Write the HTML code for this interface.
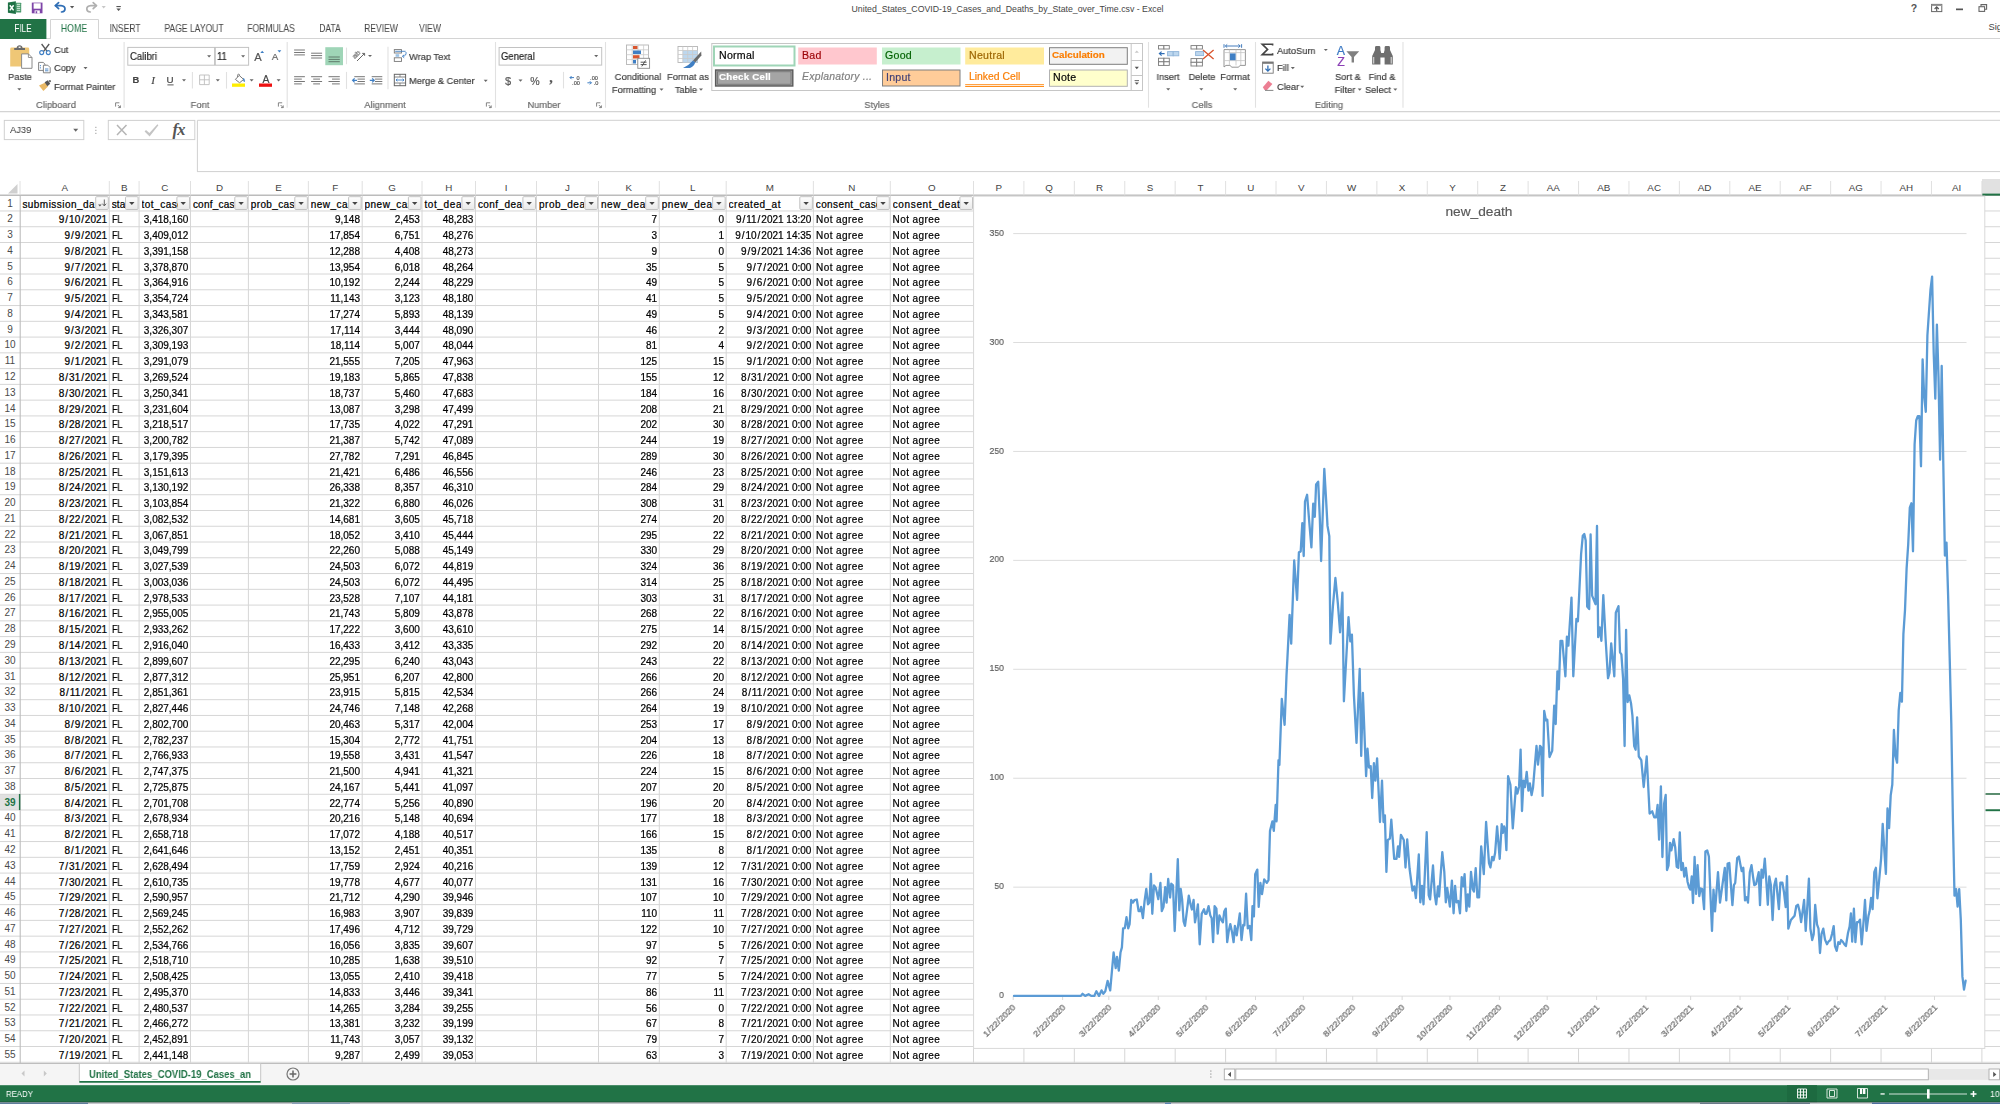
<!DOCTYPE html>
<html lang="en"><head><meta charset="utf-8"><title>Excel</title><style>
html,body{margin:0;padding:0}
body{width:2000px;height:1104px;position:relative;overflow:hidden;background:#fff;font-family:"Liberation Sans",sans-serif;}
#shapes{position:absolute;left:0;top:0}
.t{position:absolute;white-space:pre;}
.g{will-change:transform;-webkit-text-stroke:0.18px;}
.c{-webkit-text-stroke:0.22px #000;}
.s{font-family:"Liberation Serif",serif;}
.t i{font-style:normal;margin:0 0.95px;}
.x i{margin:0 0.4px;}
</style></head><body>
<svg id="shapes" width="2000" height="1104" viewBox="0 0 2000 1104">
<defs><linearGradient id="fb" x1="0" y1="0" x2="0" y2="1"><stop offset="0" stop-color="#ffffff"/><stop offset="1" stop-color="#e9e9e9"/></linearGradient></defs>
<path d="M7.9 2.6 L15.9 1.2 V14.1 L7.9 12.7 Z" fill="#1e7145"/>
<path d="M15.9 2.7 H20.6 Q21.2 2.7 21.2 3.3 V12 Q21.2 12.6 20.6 12.6 H15.9 Z" fill="#4a9a6c"/>
<rect x="16.80" y="3.80" width="3.40" height="1.10" fill="#cfe6d8"/>
<rect x="16.80" y="5.80" width="3.40" height="1.10" fill="#cfe6d8"/>
<rect x="16.80" y="7.80" width="3.40" height="1.10" fill="#cfe6d8"/>
<rect x="16.80" y="9.80" width="3.40" height="1.10" fill="#cfe6d8"/>
<path d="M9.8 5.2 L13.6 10.4 M13.6 5.2 L9.8 10.4" fill="none" stroke="#fff" stroke-width="1.5"/>
<path d="M31.8 2.6 H42.5 V13.3 H31.8 Z" fill="#7e45a8"/>
<rect x="33.60" y="3.30" width="7.10" height="5.40" fill="#fff"/>
<rect x="34.60" y="10.40" width="5.20" height="2.90" fill="#fff"/>
<rect x="35.60" y="11.20" width="1.60" height="2.10" fill="#7e45a8"/>
<path d="M55.4 5.6 H61 Q65 5.9 65 9 Q65 11.6 61.5 12" fill="none" stroke="#2f6eb5" stroke-width="1.7" stroke-linecap="round"/>
<path d="M58.6 2.6 L55.4 5.6 L58.6 8.7" fill="none" stroke="#2f6eb5" stroke-width="1.7" stroke-linecap="round" stroke-linejoin="round"/>
<path d="M70.00 6.10 h4.20 l-2.10 2.40 z" fill="#555"/>
<path d="M96.4 5.6 H90.8 Q86.8 5.9 86.8 9 Q86.8 11.6 90.3 12" fill="none" stroke="#b0b0b0" stroke-width="1.7" stroke-linecap="round"/>
<path d="M93.2 2.6 L96.4 5.6 L93.2 8.7" fill="none" stroke="#b0b0b0" stroke-width="1.7" stroke-linecap="round" stroke-linejoin="round"/>
<path d="M101.60 6.10 h4.20 l-2.10 2.40 z" fill="#c8c8c8"/>
<rect x="116.40" y="6.00" width="4.40" height="1.10" fill="#555"/>
<path d="M116.40 8.40 h4.40 l-2.20 2.60 z" fill="#555"/>
<rect x="1931.60" y="4.40" width="10.20" height="7.20" fill="#fff" stroke="#666" stroke-width="1"/>
<rect x="1931.60" y="4.40" width="10.20" height="1.60" fill="#999"/>
<path d="M1936.7 11 V7 M1934.6 9 L1936.7 6.9 L1938.8 9" fill="none" stroke="#555" stroke-width="1.1"/>
<rect x="1956.00" y="8.50" width="7.00" height="1.70" fill="#555"/>
<path d="M1981 6.5 V4.6 H1986.6 V9.3 H1984.6" fill="none" stroke="#666" stroke-width="1.1"/>
<rect x="1979.00" y="6.70" width="5.60" height="4.70" fill="#fff" stroke="#666" stroke-width="1.1"/>
<line x1="0.00" y1="38.50" x2="2000.00" y2="38.50" stroke="#d4d4d4" stroke-width="1"/>
<rect x="0.00" y="19.00" width="46.40" height="20.00" fill="#217346"/>
<path d="M50.5 38.5 V19.5 H98.5 V38.5" fill="#fff" stroke="#d4d4d4" stroke-width="1"/>
<line x1="51.00" y1="38.50" x2="98.00" y2="38.50" stroke="#fff" stroke-width="1.4"/>
<line x1="0.00" y1="111.70" x2="2000.00" y2="111.70" stroke="#d4d4d4" stroke-width="1.3"/>
<path d="M10.2 49 Q10.2 47.6 11.6 47.6 H27.8 Q29.2 47.6 29.2 49 V66.6 H10.2 Z" fill="#efc776"/>
<path d="M14.2 50 V48 H16.6 Q17 45.2 19.6 45.2 Q22.2 45.2 22.6 48 H25 V50 Z" fill="#6a6a6a"/>
<rect x="18.60" y="46.60" width="2.00" height="1.30" fill="#fff"/>
<path d="M21.6 53.9 H28.4 L32 57.5 V68.3 H21.6 Z" fill="#fff" stroke="#8a8a8a" stroke-width="1"/>
<path d="M28.4 53.9 V57.5 H32" fill="none" stroke="#8a8a8a" stroke-width="0.9"/>
<path d="M17.30 88.30 h4.00 l-2.00 2.20 z" fill="#666"/>
<path d="M41.6 44 L47.2 51.4 M49.2 44 L43.6 51.4" fill="none" stroke="#555" stroke-width="1.3"/>
<circle cx="41.7" cy="52.6" r="2" fill="none" stroke="#3f7fc4" stroke-width="1.1"/>
<circle cx="48.3" cy="52.6" r="2" fill="none" stroke="#3f7fc4" stroke-width="1.1"/>
<path d="M38.6 62.4 H43.2 L45 64.2 V70.4 H38.6 Z" fill="#fff" stroke="#777" stroke-width="0.9"/>
<path d="M43.4 65.2 H47.8 L50.2 67.6 V72.8 H43.4 Z" fill="#fff" stroke="#777" stroke-width="0.9"/>
<path d="M40.4 65 v4" fill="none" stroke="#3f7fc4" stroke-width="0.9" stroke-dasharray="1 0.8"/>
<path d="M45 69 h3.4 M45 70.8 h3.4" fill="none" stroke="#3f7fc4" stroke-width="0.9"/>
<path d="M83.50 67.10 h4.00 l-2.00 2.20 z" fill="#666"/>
<path d="M39 85.4 L45.4 82.6 L48 86.6 L43.4 91 Z" fill="#e9b966"/>
<path d="M44.6 82.2 L47.8 80.2 L50.2 83.8 L47.4 86.2 Z" fill="#555"/>
<path d="M48.6 80.6 L50.4 80 L51 81.6 L49.8 82.4 Z" fill="#555"/>
<path d="M115.60 106.60 v-3.8 h3.8" fill="none" stroke="#777" stroke-width="0.9"/>
<path d="M117.80 105.00 l2.6 2.6 m0 -2.2 v2.2 h-2.2" fill="none" stroke="#777" stroke-width="0.9"/>
<line x1="124.10" y1="42.00" x2="124.10" y2="107.70" stroke="#e1e1e1" stroke-width="1.1"/>
<rect x="127.80" y="47.40" width="86.80" height="17.80" fill="#fff" stroke="#c2c2c2" stroke-width="1"/>
<rect x="215.30" y="47.40" width="33.30" height="17.80" fill="#fff" stroke="#c2c2c2" stroke-width="1"/>
<path d="M207.10 55.20 h4.00 l-2.00 2.20 z" fill="#666"/>
<path d="M241.10 55.20 h4.00 l-2.00 2.20 z" fill="#666"/>
<path d="M260.30 53.10 h3.80 l-1.90 -2.40 z" fill="#3f7fc4"/>
<path d="M277.50 50.30 h3.80 l-1.90 2.20 z" fill="#3f7fc4"/>
<line x1="167.40" y1="84.90" x2="173.60" y2="84.90" stroke="#444" stroke-width="0.9"/>
<path d="M182.00 79.20 h4.00 l-2.00 2.20 z" fill="#666"/>
<line x1="192.40" y1="72.00" x2="192.40" y2="88.60" stroke="#e1e1e1" stroke-width="1.1"/>
<path d="M199.6 75 h9.6 v9.6 h-9.6 z M204.4 75 v9.6 M199.6 79.8 h9.6" fill="none" stroke="#bdbdbd" stroke-width="0.9"/>
<path d="M215.80 79.20 h4.00 l-2.00 2.20 z" fill="#666"/>
<line x1="226.50" y1="72.00" x2="226.50" y2="88.60" stroke="#e1e1e1" stroke-width="1.1"/>
<path d="M235.4 79.4 L239.2 75.4 L243.6 79.4 L239.6 82.8 Z" fill="#fff" stroke="#666" stroke-width="0.9"/>
<path d="M237.6 77 V75.2 Q237.6 74.2 238.6 74.2 Q239.6 74.2 239.6 75.2" fill="none" stroke="#666" stroke-width="0.8"/>
<path d="M243.6 78.2 Q245.2 80.2 244.4 81.8 Q243 81 243.6 78.2 Z" fill="#3f7fc4" stroke="#3f7fc4" stroke-width="0.6"/>
<rect x="232.00" y="83.50" width="13.00" height="3.30" fill="#ffee00"/>
<path d="M249.60 79.20 h4.00 l-2.00 2.20 z" fill="#666"/>
<rect x="259.00" y="83.50" width="13.00" height="3.30" fill="#ee1111"/>
<path d="M276.60 79.20 h4.00 l-2.00 2.20 z" fill="#666"/>
<path d="M278.40 106.60 v-3.8 h3.8" fill="none" stroke="#777" stroke-width="0.9"/>
<path d="M280.60 105.00 l2.6 2.6 m0 -2.2 v2.2 h-2.2" fill="none" stroke="#777" stroke-width="0.9"/>
<line x1="287.20" y1="42.00" x2="287.20" y2="107.70" stroke="#e1e1e1" stroke-width="1.1"/>
<line x1="294.10" y1="50.00" x2="304.90" y2="50.00" stroke="#777" stroke-width="1.0"/>
<line x1="294.10" y1="52.50" x2="304.90" y2="52.50" stroke="#777" stroke-width="1.0"/>
<line x1="294.10" y1="54.90" x2="304.90" y2="54.90" stroke="#777" stroke-width="1.0"/>
<line x1="311.10" y1="53.20" x2="322.10" y2="53.20" stroke="#777" stroke-width="1.0"/>
<line x1="311.10" y1="55.60" x2="322.10" y2="55.60" stroke="#777" stroke-width="1.0"/>
<line x1="311.10" y1="58.00" x2="322.10" y2="58.00" stroke="#777" stroke-width="1.0"/>
<rect x="325.30" y="47.20" width="17.70" height="18.00" fill="#9fd5b7"/>
<line x1="328.50" y1="57.00" x2="339.80" y2="57.00" stroke="#5f7a6b" stroke-width="1.0"/>
<line x1="328.50" y1="59.40" x2="339.80" y2="59.40" stroke="#5f7a6b" stroke-width="1.0"/>
<line x1="328.50" y1="61.70" x2="339.80" y2="61.70" stroke="#5f7a6b" stroke-width="1.0"/>
<line x1="346.50" y1="47.60" x2="346.50" y2="64.20" stroke="#e1e1e1" stroke-width="1.1"/>
<path d="M357 61 L364.4 53.6 M362.2 53.4 h2.4 v2.4" fill="none" stroke="#555" stroke-width="0.9"/>
<path d="M368.00 54.90 h4.00 l-2.00 2.20 z" fill="#666"/>
<line x1="388.00" y1="46.80" x2="388.00" y2="89.30" stroke="#e1e1e1" stroke-width="1.1"/>
<rect x="394.30" y="49.60" width="7.20" height="3.40" fill="#fff" stroke="#777" stroke-width="0.9"/>
<rect x="394.30" y="57.80" width="7.20" height="3.60" fill="#fff" stroke="#777" stroke-width="0.9"/>
<rect x="395.60" y="54.20" width="3.60" height="2.60" fill="#9cc3e6"/>
<line x1="395.20" y1="51.30" x2="405.60" y2="51.30" stroke="#3f7fc4" stroke-width="0.9"/>
<path d="M406 52 Q406.6 56.2 402.6 56.2 M404.2 54.8 L402.4 56.3 L404.2 57.8" fill="none" stroke="#3f7fc4" stroke-width="0.9"/>
<line x1="294.10" y1="76.70" x2="304.90" y2="76.70" stroke="#777" stroke-width="1"/>
<line x1="311.10" y1="76.70" x2="322.10" y2="76.70" stroke="#777" stroke-width="1"/>
<line x1="328.50" y1="76.70" x2="339.80" y2="76.70" stroke="#777" stroke-width="1"/>
<line x1="294.10" y1="79.10" x2="301.80" y2="79.10" stroke="#777" stroke-width="1"/>
<line x1="313.20" y1="79.10" x2="320.00" y2="79.10" stroke="#777" stroke-width="1"/>
<line x1="332.00" y1="79.10" x2="339.80" y2="79.10" stroke="#777" stroke-width="1"/>
<line x1="294.10" y1="81.50" x2="304.90" y2="81.50" stroke="#777" stroke-width="1"/>
<line x1="311.10" y1="81.50" x2="322.10" y2="81.50" stroke="#777" stroke-width="1"/>
<line x1="328.50" y1="81.50" x2="339.80" y2="81.50" stroke="#777" stroke-width="1"/>
<line x1="294.10" y1="83.90" x2="301.80" y2="83.90" stroke="#777" stroke-width="1"/>
<line x1="313.20" y1="83.90" x2="320.00" y2="83.90" stroke="#777" stroke-width="1"/>
<line x1="332.00" y1="83.90" x2="339.80" y2="83.90" stroke="#777" stroke-width="1"/>
<line x1="346.50" y1="71.90" x2="346.50" y2="88.90" stroke="#e1e1e1" stroke-width="1.1"/>
<line x1="354.30" y1="76.70" x2="364.90" y2="76.70" stroke="#777" stroke-width="1"/>
<line x1="357.50" y1="79.10" x2="364.90" y2="79.10" stroke="#777" stroke-width="1"/>
<line x1="357.50" y1="81.50" x2="364.90" y2="81.50" stroke="#777" stroke-width="1"/>
<line x1="354.30" y1="83.90" x2="364.90" y2="83.90" stroke="#777" stroke-width="1"/>
<line x1="371.70" y1="76.70" x2="382.30" y2="76.70" stroke="#777" stroke-width="1"/>
<line x1="374.90" y1="79.10" x2="382.30" y2="79.10" stroke="#777" stroke-width="1"/>
<line x1="374.90" y1="81.50" x2="382.30" y2="81.50" stroke="#777" stroke-width="1"/>
<line x1="371.70" y1="83.90" x2="382.30" y2="83.90" stroke="#777" stroke-width="1"/>
<path d="M357 80.3 H352.6 M354.6 78.3 L352.6 80.3 L354.6 82.3" fill="none" stroke="#3f7fc4" stroke-width="1.2"/>
<path d="M369.8 80.3 H374.2 M372.2 78.3 L374.2 80.3 L372.2 82.3" fill="none" stroke="#3f7fc4" stroke-width="1.2"/>
<rect x="394.30" y="74.30" width="11.30" height="11.40" fill="#fff" stroke="#666" stroke-width="1"/>
<line x1="394.30" y1="77.00" x2="405.60" y2="77.00" stroke="#666" stroke-width="0.8"/>
<line x1="394.30" y1="83.00" x2="405.60" y2="83.00" stroke="#666" stroke-width="0.8"/>
<line x1="400.00" y1="74.30" x2="400.00" y2="77.00" stroke="#666" stroke-width="0.7"/>
<line x1="400.00" y1="83.00" x2="400.00" y2="85.70" stroke="#666" stroke-width="0.7"/>
<path d="M396 80 H404 M397.4 78.8 L396 80 L397.4 81.2 M402.6 78.8 L404 80 L402.6 81.2" fill="none" stroke="#3f7fc4" stroke-width="0.9"/>
<path d="M483.70 79.70 h4.00 l-2.00 2.20 z" fill="#666"/>
<path d="M486.40 106.60 v-3.8 h3.8" fill="none" stroke="#777" stroke-width="0.9"/>
<path d="M488.60 105.00 l2.6 2.6 m0 -2.2 v2.2 h-2.2" fill="none" stroke="#777" stroke-width="0.9"/>
<line x1="495.50" y1="42.00" x2="495.50" y2="107.70" stroke="#e1e1e1" stroke-width="1.1"/>
<rect x="499.10" y="47.50" width="102.60" height="17.60" fill="#fff" stroke="#c2c2c2" stroke-width="1"/>
<path d="M594.20 55.00 h4.00 l-2.00 2.20 z" fill="#666"/>
<path d="M518.50 79.50 h4.00 l-2.00 2.20 z" fill="#666"/>
<line x1="563.50" y1="71.90" x2="563.50" y2="88.40" stroke="#e1e1e1" stroke-width="1.1"/>
<path d="M574 77.6 H570 M571.6 76 L570 77.6 L571.6 79.2" fill="none" stroke="#3f7fc4" stroke-width="1"/>
<path d="M587.4 82.8 H591.4 M589.8 81.2 L591.4 82.8 L589.8 84.4" fill="none" stroke="#3f7fc4" stroke-width="1"/>
<path d="M596.60 106.60 v-3.8 h3.8" fill="none" stroke="#777" stroke-width="0.9"/>
<path d="M598.80 105.00 l2.6 2.6 m0 -2.2 v2.2 h-2.2" fill="none" stroke="#777" stroke-width="0.9"/>
<line x1="605.50" y1="42.00" x2="605.50" y2="107.70" stroke="#e1e1e1" stroke-width="1.1"/>
<rect x="626.50" y="45.00" width="22.00" height="19.50" fill="#fff" stroke="#b5b5b5" stroke-width="0.9"/>
<line x1="632.20" y1="45.00" x2="632.20" y2="64.50" stroke="#c9c9c9" stroke-width="0.8"/>
<line x1="638.00" y1="45.00" x2="638.00" y2="64.50" stroke="#c9c9c9" stroke-width="0.8"/>
<line x1="643.60" y1="45.00" x2="643.60" y2="64.50" stroke="#c9c9c9" stroke-width="0.8"/>
<line x1="626.50" y1="49.80" x2="648.50" y2="49.80" stroke="#c9c9c9" stroke-width="0.8"/>
<line x1="626.50" y1="54.70" x2="648.50" y2="54.70" stroke="#c9c9c9" stroke-width="0.8"/>
<line x1="626.50" y1="59.60" x2="648.50" y2="59.60" stroke="#c9c9c9" stroke-width="0.8"/>
<rect x="633.00" y="46.00" width="4.50" height="3.00" fill="#d9562f"/>
<rect x="633.00" y="50.50" width="8.00" height="3.50" fill="#3f7fc4"/>
<rect x="633.00" y="55.20" width="6.50" height="3.30" fill="#d9562f"/>
<rect x="633.00" y="60.00" width="3.00" height="3.50" fill="#3f7fc4"/>
<rect x="637.80" y="58.30" width="11.80" height="10.00" fill="#fff" stroke="#8a8a8a" stroke-width="0.9"/>
<path d="M640.6 62.2 h6 M640.6 64.6 h6 M645.6 60.4 l-3.8 6" fill="none" stroke="#444" stroke-width="0.9"/>
<path d="M659.50 88.50 h4.00 l-2.00 2.20 z" fill="#666"/>
<rect x="678.00" y="46.50" width="19.50" height="16.00" fill="#fff" stroke="#b5b5b5" stroke-width="0.9"/>
<rect x="682.80" y="50.50" width="14.70" height="12.00" fill="#bdd7ee"/>
<line x1="682.80" y1="46.50" x2="682.80" y2="62.50" stroke="#c9c9c9" stroke-width="0.8"/>
<line x1="687.70" y1="46.50" x2="687.70" y2="62.50" stroke="#c9c9c9" stroke-width="0.8"/>
<line x1="692.60" y1="46.50" x2="692.60" y2="62.50" stroke="#c9c9c9" stroke-width="0.8"/>
<line x1="678.00" y1="50.50" x2="697.50" y2="50.50" stroke="#c9c9c9" stroke-width="0.8"/>
<line x1="678.00" y1="54.50" x2="697.50" y2="54.50" stroke="#c9c9c9" stroke-width="0.8"/>
<line x1="678.00" y1="58.50" x2="697.50" y2="58.50" stroke="#c9c9c9" stroke-width="0.8"/>
<path d="M701.2 51.4 L693 60.6 L695.2 62.6 L701.4 55.6 Z" fill="#6a6a6a"/>
<path d="M693 60.6 L695.2 62.6 Q694.2 66.4 690 68 L683 68 Q689 65.4 693 60.6 Z" fill="#3f7fc4"/>
<path d="M699.00 88.50 h4.00 l-2.00 2.20 z" fill="#666"/>
<rect x="711.80" y="43.50" width="430.70" height="47.00" fill="#fff" stroke="#c6c6c6" stroke-width="1"/>
<rect x="714.00" y="46.50" width="80.50" height="19.00" fill="#fff" stroke="#9fd5b7" stroke-width="2"/>
<rect x="798.20" y="47.50" width="78.60" height="17.00" fill="#ffc7ce"/>
<rect x="882.00" y="47.50" width="78.50" height="17.00" fill="#c6efce"/>
<rect x="965.20" y="47.50" width="78.80" height="17.00" fill="#ffeb9c"/>
<rect x="1049.50" y="47.70" width="77.80" height="16.60" fill="#f2f2f2" stroke="#7f7f7f" stroke-width="1"/>
<rect x="715.60" y="70.00" width="77.20" height="16.00" fill="#a5a5a5" stroke="#5a5a5a" stroke-width="1.4"/>
<rect x="717.40" y="71.80" width="73.60" height="12.40" fill="none" stroke="#6a6a6a" stroke-width="0.7"/>
<rect x="882.50" y="70.00" width="77.50" height="16.00" fill="#ffcc99" stroke="#7f7f7f" stroke-width="1"/>
<line x1="965.20" y1="84.70" x2="1044.00" y2="84.70" stroke="#ff8001" stroke-width="0.9"/>
<line x1="965.20" y1="86.50" x2="1044.00" y2="86.50" stroke="#ff8001" stroke-width="0.9"/>
<rect x="1049.50" y="70.00" width="77.80" height="16.30" fill="#ffffcc" stroke="#b2b2b2" stroke-width="1"/>
<line x1="1131.20" y1="43.50" x2="1131.20" y2="90.50" stroke="#c6c6c6" stroke-width="1"/>
<line x1="1131.20" y1="60.50" x2="1142.50" y2="60.50" stroke="#c6c6c6" stroke-width="1"/>
<line x1="1131.20" y1="75.50" x2="1142.50" y2="75.50" stroke="#c6c6c6" stroke-width="1"/>
<path d="M1134.70 52.80 h4.20 l-2.10 -2.40 z" fill="#c8c8c8"/>
<path d="M1134.70 66.80 h4.20 l-2.10 2.40 z" fill="#555"/>
<rect x="1134.60" y="80.20" width="4.40" height="0.90" fill="#555"/>
<path d="M1134.70 82.40 h4.20 l-2.10 2.40 z" fill="#555"/>
<line x1="1148.50" y1="42.00" x2="1148.50" y2="107.70" stroke="#e1e1e1" stroke-width="1.1"/>
<rect x="1158.50" y="45.60" width="5.40" height="3.40" fill="#fff" stroke="#7a7a7a" stroke-width="0.9"/>
<rect x="1163.90" y="45.60" width="5.40" height="3.40" fill="#fff" stroke="#7a7a7a" stroke-width="0.9"/>
<rect x="1167.60" y="51.60" width="5.60" height="4.20" fill="#bdd7ee" stroke="#8fb4d9" stroke-width="0.9"/>
<rect x="1173.20" y="51.60" width="5.60" height="4.20" fill="#bdd7ee" stroke="#8fb4d9" stroke-width="0.9"/>
<path d="M1164.6 53.6 H1159.4 M1161.6 51.6 L1159.4 53.6 L1161.6 55.6" fill="none" stroke="#2f6eb5" stroke-width="1.2"/>
<rect x="1158.50" y="58.20" width="5.40" height="3.60" fill="#fff" stroke="#7a7a7a" stroke-width="0.9"/>
<rect x="1163.90" y="58.20" width="5.40" height="3.60" fill="#fff" stroke="#7a7a7a" stroke-width="0.9"/>
<rect x="1158.50" y="61.80" width="5.40" height="3.60" fill="#fff" stroke="#7a7a7a" stroke-width="0.9"/>
<rect x="1163.90" y="61.80" width="5.40" height="3.60" fill="#fff" stroke="#7a7a7a" stroke-width="0.9"/>
<path d="M1166.20 88.20 h4.00 l-2.00 2.20 z" fill="#666"/>
<rect x="1191.00" y="45.60" width="5.70" height="3.40" fill="#fff" stroke="#7a7a7a" stroke-width="0.9"/>
<rect x="1196.70" y="45.60" width="5.70" height="3.40" fill="#fff" stroke="#7a7a7a" stroke-width="0.9"/>
<rect x="1195.60" y="51.60" width="8.00" height="4.00" fill="#bdd7ee" stroke="#8fb4d9" stroke-width="0.9"/>
<path d="M1203 50 L1213.6 59 M1213.6 50 L1203 59" fill="none" stroke="#d9532c" stroke-width="1.3"/>
<rect x="1191.00" y="58.60" width="5.70" height="3.70" fill="#fff" stroke="#7a7a7a" stroke-width="0.9"/>
<rect x="1196.70" y="58.60" width="5.70" height="3.70" fill="#fff" stroke="#7a7a7a" stroke-width="0.9"/>
<rect x="1191.00" y="62.30" width="5.70" height="3.70" fill="#fff" stroke="#7a7a7a" stroke-width="0.9"/>
<rect x="1196.70" y="62.30" width="5.70" height="3.70" fill="#fff" stroke="#7a7a7a" stroke-width="0.9"/>
<path d="M1199.30 88.20 h4.00 l-2.00 2.20 z" fill="#666"/>
<path d="M1225.4 46 H1240.2 M1224 44.2 v3.6 M1241.6 44.2 v3.6 M1227.2 44.4 L1225.4 46 L1227.2 47.6 M1238.4 44.4 L1240.2 46 L1238.4 47.6" fill="none" stroke="#2f6eb5" stroke-width="0.9"/>
<path d="M1224 49.6 H1245.4 V65.4 H1240 L1238.6 67.2 H1231.6 L1230.2 65.4 H1226 L1224 67 Z" fill="#fff" stroke="#8a8a8a" stroke-width="0.9"/>
<line x1="1229.40" y1="49.60" x2="1229.40" y2="65.40" stroke="#c4c4c4" stroke-width="0.8"/>
<line x1="1236.00" y1="49.60" x2="1236.00" y2="65.40" stroke="#c4c4c4" stroke-width="0.8"/>
<line x1="1240.80" y1="49.60" x2="1240.80" y2="65.40" stroke="#c4c4c4" stroke-width="0.8"/>
<line x1="1224.00" y1="52.60" x2="1245.40" y2="52.60" stroke="#c4c4c4" stroke-width="0.8"/>
<line x1="1224.00" y1="60.60" x2="1245.40" y2="60.60" stroke="#c4c4c4" stroke-width="0.8"/>
<rect x="1230.00" y="53.40" width="5.60" height="6.80" fill="#3f7fc4"/>
<path d="M1233.20 88.20 h4.00 l-2.00 2.20 z" fill="#666"/>
<line x1="1255.50" y1="42.00" x2="1255.50" y2="107.70" stroke="#e1e1e1" stroke-width="1.1"/>
<path d="M1272.6 45.6 V44.2 H1262.2 L1267.6 49.4 L1262.2 54.6 H1272.6 V53.2" fill="none" stroke="#444" stroke-width="1.6"/>
<path d="M1323.80 48.90 h4.00 l-2.00 2.20 z" fill="#666"/>
<rect x="1262.60" y="62.00" width="10.60" height="11.20" fill="#fff" stroke="#777" stroke-width="0.9"/>
<rect x="1262.60" y="62.00" width="10.60" height="1.80" fill="#777"/>
<path d="M1267.9 65.4 V71 M1265.4 68.6 L1267.9 71.1 L1270.4 68.6" fill="none" stroke="#2f6eb5" stroke-width="1.3"/>
<path d="M1290.80 67.10 h4.00 l-2.00 2.20 z" fill="#666"/>
<path d="M1262.8 87.2 L1268.4 80.8 L1272.4 84 L1267 90 L1264.6 90 Z" fill="#ec7f93"/>
<line x1="1265.00" y1="90.40" x2="1273.40" y2="90.40" stroke="#777" stroke-width="0.9"/>
<path d="M1300.20 85.70 h4.00 l-2.00 2.20 z" fill="#666"/>
<path d="M1346.4 51.2 H1359.2 L1354 57 V62.6 H1351.6 V57 Z" fill="#808080"/>
<path d="M1357.70 88.50 h4.00 l-2.00 2.20 z" fill="#666"/>
<path d="M1372.2 56 L1375 50 V47.4 Q1375 46 1376.4 46 H1379 Q1380.4 46 1380.4 47.4 V50 L1381.2 53 H1383.8 L1384.6 50 V47.4 Q1384.6 46 1386 46 H1388.6 Q1390 46 1390 47.4 V50 L1392.8 56 V64.6 H1384.6 V57.4 H1380.4 V64.6 H1372.2 Z" fill="#6e6e6e"/>
<rect x="1373.00" y="57.00" width="1.30" height="6.60" fill="#c9c9c9"/>
<rect x="1390.60" y="57.00" width="1.30" height="6.60" fill="#c9c9c9"/>
<path d="M1393.30 88.50 h4.00 l-2.00 2.20 z" fill="#666"/>
<line x1="1403.00" y1="42.00" x2="1403.00" y2="107.70" stroke="#e1e1e1" stroke-width="1.1"/>
<rect x="4.30" y="120.40" width="79.50" height="19.20" fill="#fff" stroke="#d0d0d0" stroke-width="1"/>
<path d="M73.20 128.80 h5.00 l-2.50 3.00 z" fill="#666"/>
<rect x="95.30" y="126.80" width="1.10" height="1.10" fill="#999"/>
<rect x="95.30" y="129.80" width="1.10" height="1.10" fill="#999"/>
<rect x="95.30" y="132.80" width="1.10" height="1.10" fill="#999"/>
<rect x="108.30" y="120.40" width="86.50" height="19.20" fill="#fff" stroke="#d0d0d0" stroke-width="1"/>
<path d="M117 125 l9.5 10 M126.5 125 l-9.5 10" fill="none" stroke="#b5b5b5" stroke-width="1.5"/>
<path d="M144.6 131.4 L146 130 L149.4 133 L157.4 124.2 L158.4 125.2 L149.6 136.4 Z" fill="#c4c4c4"/>
<path d="M197.4 171.6 V120.3 H2000" fill="none" stroke="#d0d0d0" stroke-width="1"/>
<line x1="197.00" y1="171.60" x2="2000.00" y2="171.60" stroke="#d0d0d0" stroke-width="1"/>
<rect x="1982.00" y="179.00" width="18.00" height="16.00" fill="#e1e1e1"/>
<line x1="0.00" y1="195.20" x2="2000.00" y2="195.20" stroke="#bcbcbc" stroke-width="1.4"/>
<line x1="1982.00" y1="194.60" x2="2000.00" y2="194.60" stroke="#217346" stroke-width="2"/>
<path d="M17.5 184 V193.5 H8 Z" fill="#d0d0d0"/>
<line x1="20.00" y1="181.00" x2="20.00" y2="195.00" stroke="#dcdcdc" stroke-width="0.9"/>
<line x1="109.30" y1="181.00" x2="109.30" y2="195.00" stroke="#dcdcdc" stroke-width="0.9"/>
<line x1="139.10" y1="181.00" x2="139.10" y2="195.00" stroke="#dcdcdc" stroke-width="0.9"/>
<line x1="190.50" y1="181.00" x2="190.50" y2="195.00" stroke="#dcdcdc" stroke-width="0.9"/>
<line x1="248.40" y1="181.00" x2="248.40" y2="195.00" stroke="#dcdcdc" stroke-width="0.9"/>
<line x1="308.40" y1="181.00" x2="308.40" y2="195.00" stroke="#dcdcdc" stroke-width="0.9"/>
<line x1="362.20" y1="181.00" x2="362.20" y2="195.00" stroke="#dcdcdc" stroke-width="0.9"/>
<line x1="422.00" y1="181.00" x2="422.00" y2="195.00" stroke="#dcdcdc" stroke-width="0.9"/>
<line x1="475.50" y1="181.00" x2="475.50" y2="195.00" stroke="#dcdcdc" stroke-width="0.9"/>
<line x1="536.50" y1="181.00" x2="536.50" y2="195.00" stroke="#dcdcdc" stroke-width="0.9"/>
<line x1="598.50" y1="181.00" x2="598.50" y2="195.00" stroke="#dcdcdc" stroke-width="0.9"/>
<line x1="659.30" y1="181.00" x2="659.30" y2="195.00" stroke="#dcdcdc" stroke-width="0.9"/>
<line x1="726.20" y1="181.00" x2="726.20" y2="195.00" stroke="#dcdcdc" stroke-width="0.9"/>
<line x1="813.40" y1="181.00" x2="813.40" y2="195.00" stroke="#dcdcdc" stroke-width="0.9"/>
<line x1="890.30" y1="181.00" x2="890.30" y2="195.00" stroke="#dcdcdc" stroke-width="0.9"/>
<line x1="973.50" y1="181.00" x2="973.50" y2="195.00" stroke="#dcdcdc" stroke-width="0.9"/>
<line x1="1023.92" y1="181.00" x2="1023.92" y2="195.00" stroke="#dcdcdc" stroke-width="0.9"/>
<line x1="1074.34" y1="181.00" x2="1074.34" y2="195.00" stroke="#dcdcdc" stroke-width="0.9"/>
<line x1="1124.76" y1="181.00" x2="1124.76" y2="195.00" stroke="#dcdcdc" stroke-width="0.9"/>
<line x1="1175.18" y1="181.00" x2="1175.18" y2="195.00" stroke="#dcdcdc" stroke-width="0.9"/>
<line x1="1225.60" y1="181.00" x2="1225.60" y2="195.00" stroke="#dcdcdc" stroke-width="0.9"/>
<line x1="1276.02" y1="181.00" x2="1276.02" y2="195.00" stroke="#dcdcdc" stroke-width="0.9"/>
<line x1="1326.44" y1="181.00" x2="1326.44" y2="195.00" stroke="#dcdcdc" stroke-width="0.9"/>
<line x1="1376.86" y1="181.00" x2="1376.86" y2="195.00" stroke="#dcdcdc" stroke-width="0.9"/>
<line x1="1427.28" y1="181.00" x2="1427.28" y2="195.00" stroke="#dcdcdc" stroke-width="0.9"/>
<line x1="1477.70" y1="181.00" x2="1477.70" y2="195.00" stroke="#dcdcdc" stroke-width="0.9"/>
<line x1="1528.12" y1="181.00" x2="1528.12" y2="195.00" stroke="#dcdcdc" stroke-width="0.9"/>
<line x1="1578.54" y1="181.00" x2="1578.54" y2="195.00" stroke="#dcdcdc" stroke-width="0.9"/>
<line x1="1628.96" y1="181.00" x2="1628.96" y2="195.00" stroke="#dcdcdc" stroke-width="0.9"/>
<line x1="1679.38" y1="181.00" x2="1679.38" y2="195.00" stroke="#dcdcdc" stroke-width="0.9"/>
<line x1="1729.80" y1="181.00" x2="1729.80" y2="195.00" stroke="#dcdcdc" stroke-width="0.9"/>
<line x1="1780.22" y1="181.00" x2="1780.22" y2="195.00" stroke="#dcdcdc" stroke-width="0.9"/>
<line x1="1830.64" y1="181.00" x2="1830.64" y2="195.00" stroke="#dcdcdc" stroke-width="0.9"/>
<line x1="1881.06" y1="181.00" x2="1881.06" y2="195.00" stroke="#dcdcdc" stroke-width="0.9"/>
<line x1="1931.48" y1="181.00" x2="1931.48" y2="195.00" stroke="#dcdcdc" stroke-width="0.9"/>
<line x1="1981.90" y1="181.00" x2="1981.90" y2="195.00" stroke="#dcdcdc" stroke-width="0.9"/>
<rect x="0.00" y="794.27" width="19.50" height="15.77" fill="#e1e1e1"/>
<line x1="0.00" y1="210.96" x2="2000.00" y2="210.96" stroke="#d6d6d6" stroke-width="1"/>
<line x1="0.00" y1="226.73" x2="2000.00" y2="226.73" stroke="#d6d6d6" stroke-width="1"/>
<line x1="0.00" y1="242.50" x2="2000.00" y2="242.50" stroke="#d6d6d6" stroke-width="1"/>
<line x1="0.00" y1="258.26" x2="2000.00" y2="258.26" stroke="#d6d6d6" stroke-width="1"/>
<line x1="0.00" y1="274.02" x2="2000.00" y2="274.02" stroke="#d6d6d6" stroke-width="1"/>
<line x1="0.00" y1="289.79" x2="2000.00" y2="289.79" stroke="#d6d6d6" stroke-width="1"/>
<line x1="0.00" y1="305.55" x2="2000.00" y2="305.55" stroke="#d6d6d6" stroke-width="1"/>
<line x1="0.00" y1="321.32" x2="2000.00" y2="321.32" stroke="#d6d6d6" stroke-width="1"/>
<line x1="0.00" y1="337.08" x2="2000.00" y2="337.08" stroke="#d6d6d6" stroke-width="1"/>
<line x1="0.00" y1="352.85" x2="2000.00" y2="352.85" stroke="#d6d6d6" stroke-width="1"/>
<line x1="0.00" y1="368.62" x2="2000.00" y2="368.62" stroke="#d6d6d6" stroke-width="1"/>
<line x1="0.00" y1="384.38" x2="2000.00" y2="384.38" stroke="#d6d6d6" stroke-width="1"/>
<line x1="0.00" y1="400.14" x2="2000.00" y2="400.14" stroke="#d6d6d6" stroke-width="1"/>
<line x1="0.00" y1="415.91" x2="2000.00" y2="415.91" stroke="#d6d6d6" stroke-width="1"/>
<line x1="0.00" y1="431.67" x2="2000.00" y2="431.67" stroke="#d6d6d6" stroke-width="1"/>
<line x1="0.00" y1="447.44" x2="2000.00" y2="447.44" stroke="#d6d6d6" stroke-width="1"/>
<line x1="0.00" y1="463.20" x2="2000.00" y2="463.20" stroke="#d6d6d6" stroke-width="1"/>
<line x1="0.00" y1="478.97" x2="2000.00" y2="478.97" stroke="#d6d6d6" stroke-width="1"/>
<line x1="0.00" y1="494.73" x2="2000.00" y2="494.73" stroke="#d6d6d6" stroke-width="1"/>
<line x1="0.00" y1="510.50" x2="2000.00" y2="510.50" stroke="#d6d6d6" stroke-width="1"/>
<line x1="0.00" y1="526.26" x2="2000.00" y2="526.26" stroke="#d6d6d6" stroke-width="1"/>
<line x1="0.00" y1="542.03" x2="2000.00" y2="542.03" stroke="#d6d6d6" stroke-width="1"/>
<line x1="0.00" y1="557.79" x2="2000.00" y2="557.79" stroke="#d6d6d6" stroke-width="1"/>
<line x1="0.00" y1="573.56" x2="2000.00" y2="573.56" stroke="#d6d6d6" stroke-width="1"/>
<line x1="0.00" y1="589.32" x2="2000.00" y2="589.32" stroke="#d6d6d6" stroke-width="1"/>
<line x1="0.00" y1="605.09" x2="2000.00" y2="605.09" stroke="#d6d6d6" stroke-width="1"/>
<line x1="0.00" y1="620.85" x2="2000.00" y2="620.85" stroke="#d6d6d6" stroke-width="1"/>
<line x1="0.00" y1="636.62" x2="2000.00" y2="636.62" stroke="#d6d6d6" stroke-width="1"/>
<line x1="0.00" y1="652.38" x2="2000.00" y2="652.38" stroke="#d6d6d6" stroke-width="1"/>
<line x1="0.00" y1="668.15" x2="2000.00" y2="668.15" stroke="#d6d6d6" stroke-width="1"/>
<line x1="0.00" y1="683.92" x2="2000.00" y2="683.92" stroke="#d6d6d6" stroke-width="1"/>
<line x1="0.00" y1="699.68" x2="2000.00" y2="699.68" stroke="#d6d6d6" stroke-width="1"/>
<line x1="0.00" y1="715.45" x2="2000.00" y2="715.45" stroke="#d6d6d6" stroke-width="1"/>
<line x1="0.00" y1="731.21" x2="2000.00" y2="731.21" stroke="#d6d6d6" stroke-width="1"/>
<line x1="0.00" y1="746.98" x2="2000.00" y2="746.98" stroke="#d6d6d6" stroke-width="1"/>
<line x1="0.00" y1="762.74" x2="2000.00" y2="762.74" stroke="#d6d6d6" stroke-width="1"/>
<line x1="0.00" y1="778.50" x2="2000.00" y2="778.50" stroke="#d6d6d6" stroke-width="1"/>
<line x1="0.00" y1="794.27" x2="2000.00" y2="794.27" stroke="#d6d6d6" stroke-width="1"/>
<line x1="0.00" y1="810.03" x2="2000.00" y2="810.03" stroke="#d6d6d6" stroke-width="1"/>
<line x1="0.00" y1="825.80" x2="2000.00" y2="825.80" stroke="#d6d6d6" stroke-width="1"/>
<line x1="0.00" y1="841.56" x2="2000.00" y2="841.56" stroke="#d6d6d6" stroke-width="1"/>
<line x1="0.00" y1="857.33" x2="2000.00" y2="857.33" stroke="#d6d6d6" stroke-width="1"/>
<line x1="0.00" y1="873.09" x2="2000.00" y2="873.09" stroke="#d6d6d6" stroke-width="1"/>
<line x1="0.00" y1="888.86" x2="2000.00" y2="888.86" stroke="#d6d6d6" stroke-width="1"/>
<line x1="0.00" y1="904.63" x2="2000.00" y2="904.63" stroke="#d6d6d6" stroke-width="1"/>
<line x1="0.00" y1="920.39" x2="2000.00" y2="920.39" stroke="#d6d6d6" stroke-width="1"/>
<line x1="0.00" y1="936.16" x2="2000.00" y2="936.16" stroke="#d6d6d6" stroke-width="1"/>
<line x1="0.00" y1="951.92" x2="2000.00" y2="951.92" stroke="#d6d6d6" stroke-width="1"/>
<line x1="0.00" y1="967.69" x2="2000.00" y2="967.69" stroke="#d6d6d6" stroke-width="1"/>
<line x1="0.00" y1="983.45" x2="2000.00" y2="983.45" stroke="#d6d6d6" stroke-width="1"/>
<line x1="0.00" y1="999.22" x2="2000.00" y2="999.22" stroke="#d6d6d6" stroke-width="1"/>
<line x1="0.00" y1="1014.98" x2="2000.00" y2="1014.98" stroke="#d6d6d6" stroke-width="1"/>
<line x1="0.00" y1="1030.75" x2="2000.00" y2="1030.75" stroke="#d6d6d6" stroke-width="1"/>
<line x1="0.00" y1="1046.51" x2="2000.00" y2="1046.51" stroke="#d6d6d6" stroke-width="1"/>
<line x1="0.00" y1="1062.28" x2="2000.00" y2="1062.28" stroke="#d6d6d6" stroke-width="1"/>
<line x1="0.00" y1="1078.04" x2="2000.00" y2="1078.04" stroke="#d6d6d6" stroke-width="1"/>
<line x1="109.30" y1="195.50" x2="109.30" y2="1063.00" stroke="#d6d6d6" stroke-width="1"/>
<line x1="139.10" y1="195.50" x2="139.10" y2="1063.00" stroke="#d6d6d6" stroke-width="1"/>
<line x1="190.50" y1="195.50" x2="190.50" y2="1063.00" stroke="#d6d6d6" stroke-width="1"/>
<line x1="248.40" y1="195.50" x2="248.40" y2="1063.00" stroke="#d6d6d6" stroke-width="1"/>
<line x1="308.40" y1="195.50" x2="308.40" y2="1063.00" stroke="#d6d6d6" stroke-width="1"/>
<line x1="362.20" y1="195.50" x2="362.20" y2="1063.00" stroke="#d6d6d6" stroke-width="1"/>
<line x1="422.00" y1="195.50" x2="422.00" y2="1063.00" stroke="#d6d6d6" stroke-width="1"/>
<line x1="475.50" y1="195.50" x2="475.50" y2="1063.00" stroke="#d6d6d6" stroke-width="1"/>
<line x1="536.50" y1="195.50" x2="536.50" y2="1063.00" stroke="#d6d6d6" stroke-width="1"/>
<line x1="598.50" y1="195.50" x2="598.50" y2="1063.00" stroke="#d6d6d6" stroke-width="1"/>
<line x1="659.30" y1="195.50" x2="659.30" y2="1063.00" stroke="#d6d6d6" stroke-width="1"/>
<line x1="726.20" y1="195.50" x2="726.20" y2="1063.00" stroke="#d6d6d6" stroke-width="1"/>
<line x1="813.40" y1="195.50" x2="813.40" y2="1063.00" stroke="#d6d6d6" stroke-width="1"/>
<line x1="890.30" y1="195.50" x2="890.30" y2="1063.00" stroke="#d6d6d6" stroke-width="1"/>
<line x1="973.50" y1="195.50" x2="973.50" y2="1063.00" stroke="#d6d6d6" stroke-width="1"/>
<line x1="1023.92" y1="195.50" x2="1023.92" y2="1063.00" stroke="#d6d6d6" stroke-width="1"/>
<line x1="1074.34" y1="195.50" x2="1074.34" y2="1063.00" stroke="#d6d6d6" stroke-width="1"/>
<line x1="1124.76" y1="195.50" x2="1124.76" y2="1063.00" stroke="#d6d6d6" stroke-width="1"/>
<line x1="1175.18" y1="195.50" x2="1175.18" y2="1063.00" stroke="#d6d6d6" stroke-width="1"/>
<line x1="1225.60" y1="195.50" x2="1225.60" y2="1063.00" stroke="#d6d6d6" stroke-width="1"/>
<line x1="1276.02" y1="195.50" x2="1276.02" y2="1063.00" stroke="#d6d6d6" stroke-width="1"/>
<line x1="1326.44" y1="195.50" x2="1326.44" y2="1063.00" stroke="#d6d6d6" stroke-width="1"/>
<line x1="1376.86" y1="195.50" x2="1376.86" y2="1063.00" stroke="#d6d6d6" stroke-width="1"/>
<line x1="1427.28" y1="195.50" x2="1427.28" y2="1063.00" stroke="#d6d6d6" stroke-width="1"/>
<line x1="1477.70" y1="195.50" x2="1477.70" y2="1063.00" stroke="#d6d6d6" stroke-width="1"/>
<line x1="1528.12" y1="195.50" x2="1528.12" y2="1063.00" stroke="#d6d6d6" stroke-width="1"/>
<line x1="1578.54" y1="195.50" x2="1578.54" y2="1063.00" stroke="#d6d6d6" stroke-width="1"/>
<line x1="1628.96" y1="195.50" x2="1628.96" y2="1063.00" stroke="#d6d6d6" stroke-width="1"/>
<line x1="1679.38" y1="195.50" x2="1679.38" y2="1063.00" stroke="#d6d6d6" stroke-width="1"/>
<line x1="1729.80" y1="195.50" x2="1729.80" y2="1063.00" stroke="#d6d6d6" stroke-width="1"/>
<line x1="1780.22" y1="195.50" x2="1780.22" y2="1063.00" stroke="#d6d6d6" stroke-width="1"/>
<line x1="1830.64" y1="195.50" x2="1830.64" y2="1063.00" stroke="#d6d6d6" stroke-width="1"/>
<line x1="1881.06" y1="195.50" x2="1881.06" y2="1063.00" stroke="#d6d6d6" stroke-width="1"/>
<line x1="1931.48" y1="195.50" x2="1931.48" y2="1063.00" stroke="#d6d6d6" stroke-width="1"/>
<line x1="1981.90" y1="195.50" x2="1981.90" y2="1063.00" stroke="#d6d6d6" stroke-width="1"/>
<line x1="20.20" y1="195.50" x2="20.20" y2="1063.00" stroke="#bdbdbd" stroke-width="1.1"/>
<line x1="19.60" y1="793.97" x2="19.60" y2="810.04" stroke="#217346" stroke-width="1.4"/>
<line x1="1985.40" y1="793.97" x2="2000.00" y2="793.97" stroke="#0f5c2e" stroke-width="1.3"/>
<line x1="1985.40" y1="810.24" x2="2000.00" y2="810.24" stroke="#217346" stroke-width="1.9"/>
<rect x="95.70" y="196.70" width="12.6" height="12.8" rx="1" fill="url(#fb)" stroke="#bcbcbc" stroke-width="0.9"/>
<path d="M104.30 199.50 v6.2 m-1.9 -2 l1.9 2.2 l1.9 -2.2" fill="none" stroke="#555" stroke-width="0.9"/>
<path d="M98.10 204.40 h3.60 l-1.80 2.00 z" fill="#555"/>
<rect x="125.50" y="196.70" width="12.6" height="12.8" rx="1" fill="url(#fb)" stroke="#bcbcbc" stroke-width="0.9"/>
<path d="M129.10 201.90 h5.40 l-2.70 3.00 z" fill="#444"/>
<rect x="176.90" y="196.70" width="12.6" height="12.8" rx="1" fill="url(#fb)" stroke="#bcbcbc" stroke-width="0.9"/>
<path d="M180.50 201.90 h5.40 l-2.70 3.00 z" fill="#444"/>
<rect x="234.80" y="196.70" width="12.6" height="12.8" rx="1" fill="url(#fb)" stroke="#bcbcbc" stroke-width="0.9"/>
<path d="M238.40 201.90 h5.40 l-2.70 3.00 z" fill="#444"/>
<rect x="294.80" y="196.70" width="12.6" height="12.8" rx="1" fill="url(#fb)" stroke="#bcbcbc" stroke-width="0.9"/>
<path d="M298.40 201.90 h5.40 l-2.70 3.00 z" fill="#444"/>
<rect x="348.60" y="196.70" width="12.6" height="12.8" rx="1" fill="url(#fb)" stroke="#bcbcbc" stroke-width="0.9"/>
<path d="M352.20 201.90 h5.40 l-2.70 3.00 z" fill="#444"/>
<rect x="408.40" y="196.70" width="12.6" height="12.8" rx="1" fill="url(#fb)" stroke="#bcbcbc" stroke-width="0.9"/>
<path d="M412.00 201.90 h5.40 l-2.70 3.00 z" fill="#444"/>
<rect x="461.90" y="196.70" width="12.6" height="12.8" rx="1" fill="url(#fb)" stroke="#bcbcbc" stroke-width="0.9"/>
<path d="M465.50 201.90 h5.40 l-2.70 3.00 z" fill="#444"/>
<rect x="522.90" y="196.70" width="12.6" height="12.8" rx="1" fill="url(#fb)" stroke="#bcbcbc" stroke-width="0.9"/>
<path d="M526.50 201.90 h5.40 l-2.70 3.00 z" fill="#444"/>
<rect x="584.90" y="196.70" width="12.6" height="12.8" rx="1" fill="url(#fb)" stroke="#bcbcbc" stroke-width="0.9"/>
<path d="M588.50 201.90 h5.40 l-2.70 3.00 z" fill="#444"/>
<rect x="645.70" y="196.70" width="12.6" height="12.8" rx="1" fill="url(#fb)" stroke="#bcbcbc" stroke-width="0.9"/>
<path d="M649.30 201.90 h5.40 l-2.70 3.00 z" fill="#444"/>
<rect x="712.60" y="196.70" width="12.6" height="12.8" rx="1" fill="url(#fb)" stroke="#bcbcbc" stroke-width="0.9"/>
<path d="M716.20 201.90 h5.40 l-2.70 3.00 z" fill="#444"/>
<rect x="799.80" y="196.70" width="12.6" height="12.8" rx="1" fill="url(#fb)" stroke="#bcbcbc" stroke-width="0.9"/>
<path d="M803.40 201.90 h5.40 l-2.70 3.00 z" fill="#444"/>
<rect x="876.70" y="196.70" width="12.6" height="12.8" rx="1" fill="url(#fb)" stroke="#bcbcbc" stroke-width="0.9"/>
<path d="M880.30 201.90 h5.40 l-2.70 3.00 z" fill="#444"/>
<rect x="959.90" y="196.70" width="12.6" height="12.8" rx="1" fill="url(#fb)" stroke="#bcbcbc" stroke-width="0.9"/>
<path d="M963.50 201.90 h5.40 l-2.70 3.00 z" fill="#444"/>
<rect x="973.60" y="196.20" width="1011.20" height="852.20" fill="#fff" stroke="#d9d9d9" stroke-width="1"/>
<line x1="1013.20" y1="996.10" x2="1966.50" y2="996.10" stroke="#d2d2d2" stroke-width="0.75"/>
<line x1="1013.20" y1="887.17" x2="1966.50" y2="887.17" stroke="#d2d2d2" stroke-width="0.75"/>
<line x1="1013.20" y1="778.24" x2="1966.50" y2="778.24" stroke="#d2d2d2" stroke-width="0.75"/>
<line x1="1013.20" y1="669.31" x2="1966.50" y2="669.31" stroke="#d2d2d2" stroke-width="0.75"/>
<line x1="1013.20" y1="560.38" x2="1966.50" y2="560.38" stroke="#d2d2d2" stroke-width="0.75"/>
<line x1="1013.20" y1="451.45" x2="1966.50" y2="451.45" stroke="#d2d2d2" stroke-width="0.75"/>
<line x1="1013.20" y1="342.52" x2="1966.50" y2="342.52" stroke="#d2d2d2" stroke-width="0.75"/>
<line x1="1013.20" y1="233.59" x2="1966.50" y2="233.59" stroke="#d2d2d2" stroke-width="0.75"/>
<line x1="1013.20" y1="996.00" x2="1013.20" y2="1000.00" stroke="#d9d9d9" stroke-width="1"/>
<line x1="1062.61" y1="996.00" x2="1062.61" y2="1000.00" stroke="#d9d9d9" stroke-width="1"/>
<line x1="1108.84" y1="996.00" x2="1108.84" y2="1000.00" stroke="#d9d9d9" stroke-width="1"/>
<line x1="1158.25" y1="996.00" x2="1158.25" y2="1000.00" stroke="#d9d9d9" stroke-width="1"/>
<line x1="1206.07" y1="996.00" x2="1206.07" y2="1000.00" stroke="#d9d9d9" stroke-width="1"/>
<line x1="1255.49" y1="996.00" x2="1255.49" y2="1000.00" stroke="#d9d9d9" stroke-width="1"/>
<line x1="1303.31" y1="996.00" x2="1303.31" y2="1000.00" stroke="#d9d9d9" stroke-width="1"/>
<line x1="1352.72" y1="996.00" x2="1352.72" y2="1000.00" stroke="#d9d9d9" stroke-width="1"/>
<line x1="1402.14" y1="996.00" x2="1402.14" y2="1000.00" stroke="#d9d9d9" stroke-width="1"/>
<line x1="1449.96" y1="996.00" x2="1449.96" y2="1000.00" stroke="#d9d9d9" stroke-width="1"/>
<line x1="1499.37" y1="996.00" x2="1499.37" y2="1000.00" stroke="#d9d9d9" stroke-width="1"/>
<line x1="1547.19" y1="996.00" x2="1547.19" y2="1000.00" stroke="#d9d9d9" stroke-width="1"/>
<line x1="1596.60" y1="996.00" x2="1596.60" y2="1000.00" stroke="#d9d9d9" stroke-width="1"/>
<line x1="1646.02" y1="996.00" x2="1646.02" y2="1000.00" stroke="#d9d9d9" stroke-width="1"/>
<line x1="1690.65" y1="996.00" x2="1690.65" y2="1000.00" stroke="#d9d9d9" stroke-width="1"/>
<line x1="1740.06" y1="996.00" x2="1740.06" y2="1000.00" stroke="#d9d9d9" stroke-width="1"/>
<line x1="1787.88" y1="996.00" x2="1787.88" y2="1000.00" stroke="#d9d9d9" stroke-width="1"/>
<line x1="1837.30" y1="996.00" x2="1837.30" y2="1000.00" stroke="#d9d9d9" stroke-width="1"/>
<line x1="1885.12" y1="996.00" x2="1885.12" y2="1000.00" stroke="#d9d9d9" stroke-width="1"/>
<line x1="1934.53" y1="996.00" x2="1934.53" y2="1000.00" stroke="#d9d9d9" stroke-width="1"/>
<polyline fill="none" stroke="#5b9bd5" stroke-width="2.3" stroke-linejoin="round" stroke-linecap="round" points="1014.0,995.9 1080.9,995.9 1082.6,993.8 1085.2,995.9 1088.6,994.2 1091.2,995.9 1094.3,995.9 1096.4,991.3 1099.0,995.9 1101.5,990.4 1103.3,993.8 1105.3,991.3 1107.6,980.9 1110.2,990.4 1113.6,952.5 1115.7,968.0 1117.0,956.8 1118.8,970.6 1120.5,952.5 1121.9,947.4 1123.1,928.4 1124.8,928.1 1126.5,917.2 1128.2,928.4 1129.6,924.1 1131.2,900.0 1132.9,902.6 1134.6,900.0 1136.8,899.5 1138.6,911.2 1140.3,911.2 1141.1,906.9 1142.9,918.1 1144.6,900.9 1146.3,888.8 1148.0,904.3 1149.4,902.6 1150.9,873.9 1152.3,913.8 1154.0,885.4 1155.8,888.0 1158.3,899.2 1160.4,882.8 1161.8,911.2 1163.5,906.9 1165.2,887.1 1166.6,902.6 1168.2,879.0 1170.1,897.5 1171.3,883.7 1173.0,885.4 1174.7,931.0 1177.8,859.2 1179.3,910.4 1180.7,888.8 1182.1,899.2 1183.6,921.5 1185.0,925.9 1186.9,911.2 1188.8,895.7 1190.5,904.3 1191.9,909.5 1193.6,900.0 1195.0,922.4 1196.7,912.9 1197.9,904.3 1199.7,944.3 1201.7,913.8 1204.0,909.2 1205.2,913.8 1206.5,913.8 1208.6,906.1 1210.3,915.5 1211.7,918.1 1213.1,942.2 1214.6,906.1 1216.4,908.6 1217.7,933.6 1219.4,915.5 1221.2,919.8 1222.9,922.4 1224.3,911.2 1225.8,908.6 1227.2,942.2 1228.9,930.2 1230.3,924.1 1232.0,931.9 1233.6,942.2 1234.9,925.9 1236.7,935.3 1238.2,925.0 1239.8,913.5 1241.5,940.0 1243.2,925.0 1244.4,925.3 1246.1,893.7 1247.8,928.4 1249.6,925.9 1251.3,940.0 1252.5,906.1 1253.9,916.4 1255.2,874.2 1257.3,869.6 1258.7,906.9 1260.4,882.8 1262.0,894.0 1264.2,879.4 1266.8,882.8 1268.5,880.2 1270.0,830.8 1272.4,821.4 1273.8,830.8 1275.7,804.9 1276.6,821.4 1278.5,760.2 1279.4,764.9 1281.8,698.9 1284.6,724.8 1286.5,675.4 1287.4,658.4 1289.6,614.9 1291.2,643.7 1294.2,560.5 1297.1,599.9 1298.9,552.4 1300.7,551.5 1302.3,523.2 1303.7,556.0 1305.0,501.6 1307.1,494.8 1309.3,522.5 1311.4,547.4 1313.2,503.7 1314.8,516.8 1316.1,484.4 1318.2,481.7 1319.8,518.0 1321.1,561.0 1324.3,468.8 1326.1,499.8 1327.5,525.9 1329.3,536.1 1330.4,643.7 1332.9,606.3 1335.4,578.0 1337.9,604.0 1340.1,632.3 1342.4,592.7 1343.9,701.3 1348.5,617.2 1350.3,641.4 1351.9,634.6 1353.9,695.1 1356.5,742.9 1359.7,669.0 1361.2,755.9 1362.9,693.0 1366.1,776.2 1367.5,748.7 1369.0,767.5 1370.7,766.1 1372.2,798.0 1373.9,763.2 1375.4,780.6 1377.1,758.3 1380.0,822.0 1382.0,780.6 1383.5,822.0 1384.9,815.4 1386.4,871.9 1387.8,840.0 1389.9,838.6 1391.3,819.7 1394.2,858.8 1396.5,858.8 1398.0,846.4 1399.1,856.8 1400.9,834.8 1403.8,840.0 1405.5,867.5 1407.2,839.4 1409.6,869.0 1412.5,890.7 1414.2,886.4 1415.9,898.0 1418.8,854.5 1420.3,902.3 1422.0,885.8 1423.5,904.3 1426.7,832.2 1428.7,895.1 1430.1,899.4 1433.0,865.5 1434.8,895.1 1436.2,904.3 1438.0,886.4 1439.1,896.5 1442.3,852.2 1444.3,871.9 1445.8,902.3 1447.2,887.8 1449.9,906.7 1451.9,880.6 1453.6,913.3 1455.1,885.8 1456.5,902.3 1458.3,900.9 1460.0,913.3 1461.7,877.1 1463.2,886.4 1464.6,874.2 1466.4,911.0 1467.8,894.5 1469.3,906.7 1471.0,871.9 1472.8,889.3 1473.9,891.6 1475.7,868.1 1477.4,897.4 1479.1,897.4 1481.2,846.4 1483.8,874.2 1486.1,822.0 1489.0,863.2 1490.4,867.5 1492.2,856.8 1493.6,860.3 1495.1,853.0 1497.1,826.4 1499.7,858.8 1501.7,824.1 1502.9,832.8 1504.1,826.4 1505.2,829.9 1506.4,850.1 1508.1,776.2 1510.4,784.9 1512.8,828.4 1515.9,787.2 1517.4,793.6 1519.1,786.4 1520.6,749.6 1522.0,811.0 1523.5,780.6 1524.9,787.2 1526.7,771.9 1528.4,790.7 1529.9,783.5 1531.6,795.1 1533.0,787.8 1536.5,745.8 1538.0,764.6 1540.0,745.8 1541.2,747.2 1542.6,795.9 1544.2,711.0 1545.9,720.3 1547.3,719.8 1549.5,757.0 1552.2,750.9 1554.2,705.6 1555.7,724.0 1557.4,671.4 1558.8,689.3 1560.5,640.8 1562.3,640.8 1565.4,676.3 1566.9,636.7 1568.4,645.7 1571.5,597.6 1573.3,676.3 1576.4,618.8 1577.9,621.3 1581.1,554.0 1582.8,535.7 1584.3,534.0 1585.7,540.6 1587.2,606.6 1589.2,609.0 1590.6,534.5 1592.1,595.6 1595.5,604.2 1597.0,525.9 1598.2,637.2 1599.7,627.4 1601.4,640.8 1603.3,595.1 1605.5,637.2 1608.0,678.3 1609.5,672.6 1611.2,643.3 1614.3,676.3 1615.8,612.7 1618.5,606.1 1620.0,652.3 1621.4,654.3 1623.1,678.7 1624.6,746.0 1626.1,629.8 1627.6,702.0 1629.3,695.4 1631.0,703.2 1632.4,715.4 1634.2,746.0 1635.6,749.7 1637.1,717.4 1638.8,756.5 1641.3,760.2 1643.7,787.0 1646.7,756.5 1649.6,813.5 1652.2,811.3 1654.3,817.4 1656.1,817.4 1657.6,804.8 1659.1,839.6 1660.9,786.3 1662.4,857.0 1664.1,803.7 1665.7,795.0 1667.0,870.0 1668.5,865.7 1670.0,842.8 1671.3,850.4 1673.7,839.1 1675.2,847.2 1676.7,866.7 1678.3,867.8 1679.8,832.4 1681.3,870.0 1682.8,863.0 1684.3,876.5 1685.9,867.8 1687.6,882.0 1689.1,887.4 1690.4,889.6 1691.7,876.5 1693.0,903.0 1694.6,857.0 1696.1,893.9 1697.6,865.2 1699.3,896.1 1700.7,888.5 1702.2,889.1 1704.1,909.1 1705.4,851.5 1707.2,850.4 1708.9,856.5 1710.4,893.9 1712.0,930.9 1713.5,889.6 1715.0,911.3 1716.5,891.7 1718.0,872.2 1720.0,902.6 1722.4,885.2 1724.8,867.8 1726.3,900.4 1727.6,863.5 1729.3,863.0 1730.9,885.2 1732.4,905.2 1733.9,885.2 1735.2,883.0 1737.2,858.0 1738.9,856.5 1740.4,864.6 1741.7,871.1 1743.3,867.8 1745.0,900.4 1746.7,897.2 1748.0,902.6 1749.8,872.2 1751.5,865.2 1753.0,876.5 1754.3,885.2 1756.1,884.1 1758.7,872.2 1760.0,905.2 1761.5,869.6 1763.0,877.6 1764.8,858.7 1766.3,880.9 1767.8,904.8 1769.3,876.5 1770.9,885.2 1772.6,920.0 1774.3,885.2 1775.9,878.7 1777.4,893.9 1778.9,909.1 1780.4,882.6 1782.4,882.6 1783.9,891.7 1785.7,907.0 1787.0,876.1 1788.3,928.7 1790.9,920.0 1794.6,915.7 1796.3,905.9 1798.0,904.8 1799.6,911.3 1801.1,922.2 1802.6,911.3 1804.1,900.0 1805.7,930.9 1807.4,904.8 1808.9,878.7 1810.4,928.7 1812.2,940.0 1813.7,934.1 1815.2,904.8 1817.0,924.3 1818.5,928.7 1820.0,953.0 1821.5,934.1 1823.3,928.7 1825.0,939.6 1827.0,944.3 1828.7,941.3 1830.4,940.0 1832.0,934.1 1833.7,926.1 1835.0,946.1 1836.7,950.9 1838.3,942.2 1839.8,943.9 1841.1,940.0 1842.8,941.7 1844.3,944.3 1845.9,946.1 1848.0,933.0 1849.6,926.5 1850.9,913.5 1852.2,941.7 1853.9,908.7 1855.4,942.2 1857.0,922.2 1858.5,922.2 1860.0,919.6 1861.7,944.3 1863.5,922.2 1865.0,900.0 1866.5,930.9 1868.5,915.7 1869.6,911.3 1871.1,897.8 1872.6,909.1 1874.3,872.2 1875.9,867.8 1877.4,898.3 1878.9,883.0 1881.1,858.7 1882.7,823.8 1884.3,849.9 1885.9,873.9 1887.5,808.5 1889.1,828.1 1890.7,795.4 1892.3,784.5 1893.9,730.0 1895.5,756.2 1897.1,762.7 1898.7,710.4 1900.3,693.0 1901.9,701.7 1903.4,634.1 1905.0,610.1 1906.6,568.7 1908.2,544.7 1909.8,507.7 1911.4,503.3 1913.0,551.3 1914.6,444.5 1916.2,420.5 1917.8,416.1 1919.4,416.1 1921.0,466.3 1922.6,359.4 1924.2,396.5 1925.8,411.8 1927.4,335.5 1929.0,311.5 1930.5,289.7 1932.1,276.6 1933.7,352.9 1935.3,398.7 1936.9,324.6 1938.5,376.9 1940.1,459.7 1941.7,366.0 1943.3,464.1 1944.9,555.6 1946.5,542.6 1948.1,594.9 1949.7,658.1 1951.3,723.5 1952.9,819.4 1954.5,895.7 1956.1,889.2 1957.6,906.6 1959.2,889.2 1960.8,919.7 1962.4,976.4 1964.0,989.5 1965.6,980.7"/>
<rect x="0.00" y="1063.00" width="2000.00" height="22.50" fill="#f5f5f5"/>
<line x1="0.00" y1="1063.50" x2="2000.00" y2="1063.50" stroke="#b8b8b8" stroke-width="0.9"/>
<rect x="79.30" y="1063.80" width="181.40" height="17.50" fill="#fff"/>
<line x1="79.30" y1="1063.50" x2="79.30" y2="1081.00" stroke="#c6c6c6" stroke-width="1"/>
<line x1="260.70" y1="1063.50" x2="260.70" y2="1081.00" stroke="#c6c6c6" stroke-width="1"/>
<line x1="79.30" y1="1081.90" x2="260.70" y2="1081.90" stroke="#217346" stroke-width="1.9"/>
<path d="M24.5 1070.5 l-3 3 l3 3 z" fill="#c8c8c8"/>
<path d="M43.8 1070.5 l3 3 l-3 3 z" fill="#c8c8c8"/>
<circle cx="293" cy="1074" r="6" fill="#f5f5f5" stroke="#777" stroke-width="1.2"/>
<path d="M289.6 1074 h6.8 M293 1070.6 v6.8" fill="none" stroke="#666" stroke-width="1.5"/>
<rect x="1210.30" y="1070.50" width="1.10" height="1.10" fill="#888"/>
<rect x="1210.30" y="1073.50" width="1.10" height="1.10" fill="#888"/>
<rect x="1210.30" y="1076.50" width="1.10" height="1.10" fill="#888"/>
<rect x="1224.00" y="1069.00" width="776.00" height="10.80" fill="#f5f5f5"/>
<rect x="1224.30" y="1069.00" width="10.50" height="10.80" fill="#fff" stroke="#ababab" stroke-width="0.9"/>
<path d="M1231 1071.8 v5.2 l-3.2 -2.6 z" fill="#555"/>
<rect x="1928.80" y="1069.00" width="60.00" height="10.80" fill="#e8e8e8"/>
<rect x="1235.80" y="1069.00" width="692.50" height="10.80" fill="#fff" stroke="#ababab" stroke-width="0.9"/>
<rect x="1989.00" y="1069.00" width="10.50" height="10.80" fill="#fff" stroke="#ababab" stroke-width="0.9"/>
<path d="M1993.2 1071.8 v5.2 l3.2 -2.6 z" fill="#555"/>
<rect x="0.00" y="1085.20" width="2000.00" height="17.00" fill="#217346"/>
<rect x="1787.00" y="1085.20" width="30.00" height="17.00" fill="#1d6a40"/>
<path d="M1797.5 1089 h9 v9 h-9 z M1800.5 1089 v9 M1803.5 1089 v9 M1797.5 1092 h9 M1797.5 1095 h9" fill="none" stroke="#fff" stroke-width="0.9"/>
<path d="M1827 1089 h10 v9 h-10 z M1829.5 1090.5 h5 v6 h-5 z" fill="none" stroke="#e8f0ea" stroke-width="0.9"/>
<path d="M1857.5 1088.5 h10 v9.5 h-10 z" fill="none" stroke="#e8f0ea" stroke-width="0.9"/>
<path d="M1860 1088.5 h2.2 v5.5 h-2.2 z M1863 1088.5 h2.4 v5.5 h-2.4z" fill="#fff"/>
<rect x="1880.50" y="1093.30" width="4.20" height="1.30" fill="#fff"/>
<line x1="1889.00" y1="1094.00" x2="1967.00" y2="1094.00" stroke="#fff" stroke-width="0.8"/>
<rect x="1927.00" y="1089.20" width="2.60" height="9.40" fill="#fff"/>
<path d="M1970.5 1094 h6 M1973.5 1091 v6" fill="none" stroke="#fff" stroke-width="1.5"/>
<rect x="0.00" y="1101.80" width="2000.00" height="0.80" fill="#10301e"/>
<rect x="0.00" y="1102.60" width="2000.00" height="1.40" fill="#c5c6cc"/>
<rect x="0.00" y="1102.60" width="88.00" height="1.40" fill="#5f7d9c"/>
<rect x="292.00" y="1102.60" width="58.00" height="1.40" fill="#8aa0b8"/>
<rect x="1165.00" y="1102.60" width="6.00" height="1.40" fill="#5f86b0"/>
<rect x="1700.00" y="1102.60" width="110.00" height="1.40" fill="#6a7a8a"/>
<rect x="1872.00" y="1102.60" width="128.00" height="1.40" fill="#4f6f9f"/>
</svg>
<div class="t" style="top:2.30px;font-size:8.75px;color:#444;line-height:14px;left:707.50px;width:600px;text-align:center;">United_States_COVID-19_Cases_and_Deaths_by_State_over_Time.csv - Excel</div>
<div class="t" style="top:1.20px;font-size:10.5px;color:#555;line-height:14px;left:1614.00px;width:600px;text-align:center;font-weight:bold;">?</div>
<div class="t" style="top:22.10px;font-size:10.2px;color:#fff;line-height:14px;left:-276.60px;width:600px;text-align:center;will-change:transform;transform:scaleX(0.8);transform-origin:50% 50%;">FILE</div>
<div class="t" style="top:22.10px;font-size:10.2px;color:#217346;line-height:14px;left:-226.40px;width:600px;text-align:center;will-change:transform;transform:scaleX(0.86);transform-origin:50% 50%;">HOME</div>
<div class="t" style="top:22.10px;font-size:10.2px;color:#444;line-height:14px;left:-175.50px;width:600px;text-align:center;will-change:transform;transform:scaleX(0.84);transform-origin:50% 50%;">INSERT</div>
<div class="t" style="top:22.10px;font-size:10.2px;color:#444;line-height:14px;left:-106.50px;width:600px;text-align:center;will-change:transform;transform:scaleX(0.84);transform-origin:50% 50%;">PAGE LAYOUT</div>
<div class="t" style="top:22.10px;font-size:10.2px;color:#444;line-height:14px;left:-29.50px;width:600px;text-align:center;will-change:transform;transform:scaleX(0.84);transform-origin:50% 50%;">FORMULAS</div>
<div class="t" style="top:22.10px;font-size:10.2px;color:#444;line-height:14px;left:29.50px;width:600px;text-align:center;will-change:transform;transform:scaleX(0.84);transform-origin:50% 50%;">DATA</div>
<div class="t" style="top:22.10px;font-size:10.2px;color:#444;line-height:14px;left:80.50px;width:600px;text-align:center;will-change:transform;transform:scaleX(0.84);transform-origin:50% 50%;">REVIEW</div>
<div class="t" style="top:22.10px;font-size:10.2px;color:#444;line-height:14px;left:129.50px;width:600px;text-align:center;will-change:transform;transform:scaleX(0.84);transform-origin:50% 50%;">VIEW</div>
<div class="t" style="top:20.30px;font-size:9.3px;color:#444;line-height:14px;left:1988.50px;">Sign in</div>
<div class="t g" style="top:70.20px;font-size:9.9px;color:#3a3a3a;line-height:14px;left:-280.20px;width:600px;text-align:center;will-change:transform;transform:scaleX(0.94);transform-origin:50% 50%;">Paste</div>
<div class="t g" style="top:43.40px;font-size:9.9px;color:#3a3a3a;line-height:14px;left:54.00px;will-change:transform;transform:scaleX(0.94);transform-origin:0 50%;">Cut</div>
<div class="t g" style="top:61.40px;font-size:9.9px;color:#3a3a3a;line-height:14px;left:54.00px;will-change:transform;transform:scaleX(0.94);transform-origin:0 50%;">Copy</div>
<div class="t g" style="top:79.60px;font-size:9.9px;color:#3a3a3a;line-height:14px;left:54.00px;will-change:transform;transform:scaleX(0.94);transform-origin:0 50%;">Format Painter</div>
<div class="t g" style="top:97.90px;font-size:9.9px;color:#666;line-height:14px;left:-244.40px;width:600px;text-align:center;will-change:transform;transform:scaleX(0.94);transform-origin:50% 50%;">Clipboard</div>
<div class="t g" style="top:49.90px;font-size:10.12px;color:#222;line-height:14px;left:130.00px;will-change:transform;transform:scaleX(0.94);transform-origin:0 50%;">Calibri</div>
<div class="t g" style="top:49.90px;font-size:10.12px;color:#222;line-height:14px;left:217.00px;will-change:transform;transform:scaleX(0.94);transform-origin:0 50%;">11</div>
<div class="t g" style="top:50.10px;font-size:11.2px;color:#555;line-height:14px;left:-42.40px;width:600px;text-align:center;">A</div>
<div class="t g" style="top:50.20px;font-size:9.8px;color:#555;line-height:14px;left:-25.00px;width:600px;text-align:center;will-change:transform;transform:scaleX(0.94);transform-origin:50% 50%;">A</div>
<div class="t g" style="top:73.00px;font-size:9.4px;color:#444;line-height:14px;left:-164.20px;width:600px;text-align:center;font-weight:bold;will-change:transform;transform:scaleX(1);transform-origin:50% 50%;">B</div>
<div class="t g s" style="top:73.00px;font-size:11px;color:#444;line-height:14px;left:-146.80px;width:600px;text-align:center;font-style:italic;">I</div>
<div class="t g" style="top:72.60px;font-size:9.8px;color:#444;line-height:14px;left:-129.60px;width:600px;text-align:center;">U</div>
<div class="t g" style="top:73.40px;font-size:10.4px;color:#444;line-height:14px;left:-34.50px;width:600px;text-align:center;">A</div>
<div class="t g" style="top:97.90px;font-size:9.9px;color:#666;line-height:14px;left:-100.50px;width:600px;text-align:center;will-change:transform;transform:scaleX(0.94);transform-origin:50% 50%;">Font</div>
<div class="t g" style="left:351.5px;top:50px;font-size:7.6px;color:#555;line-height:9px;transform:rotate(-45deg);transform-origin:50% 50%;">ab</div>
<div class="t g" style="top:49.60px;font-size:9.9px;color:#3a3a3a;line-height:14px;left:409.20px;will-change:transform;transform:scaleX(0.94);transform-origin:0 50%;">Wrap Text</div>
<div class="t g" style="top:74.20px;font-size:9.9px;color:#3a3a3a;line-height:14px;left:409.20px;will-change:transform;transform:scaleX(0.94);transform-origin:0 50%;">Merge &amp; Center</div>
<div class="t g" style="top:97.90px;font-size:9.9px;color:#666;line-height:14px;left:85.00px;width:600px;text-align:center;will-change:transform;transform:scaleX(0.94);transform-origin:50% 50%;">Alignment</div>
<div class="t g" style="top:50.00px;font-size:10.12px;color:#222;line-height:14px;left:501.40px;will-change:transform;transform:scaleX(0.94);transform-origin:0 50%;">General</div>
<div class="t g" style="top:73.60px;font-size:11px;color:#555;line-height:14px;left:207.80px;width:600px;text-align:center;">$</div>
<div class="t g" style="top:73.60px;font-size:10.6px;color:#555;line-height:14px;left:234.80px;width:600px;text-align:center;">%</div>
<div class="t g s" style="top:70.60px;font-size:14px;color:#555;line-height:14px;left:251.20px;width:600px;text-align:center;font-weight:bold;">,</div>
<div class="t g" style="top:73.60px;font-size:5.6px;color:#555;line-height:8px;left:277.60px;width:600px;text-align:center;">0</div>
<div class="t g" style="top:78.80px;font-size:5.6px;color:#555;line-height:8px;left:275.50px;width:600px;text-align:center;">.00</div>
<div class="t g" style="top:73.60px;font-size:5.6px;color:#555;line-height:8px;left:294.00px;width:600px;text-align:center;">.00</div>
<div class="t g" style="top:78.80px;font-size:5.6px;color:#555;line-height:8px;left:295.60px;width:600px;text-align:center;">.0</div>
<div class="t g" style="top:97.90px;font-size:9.9px;color:#666;line-height:14px;left:244.10px;width:600px;text-align:center;will-change:transform;transform:scaleX(0.94);transform-origin:50% 50%;">Number</div>
<div class="t g" style="top:70.10px;font-size:9.9px;color:#3a3a3a;line-height:14px;left:337.60px;width:600px;text-align:center;will-change:transform;transform:scaleX(0.94);transform-origin:50% 50%;">Conditional</div>
<div class="t g" style="top:82.60px;font-size:9.9px;color:#3a3a3a;line-height:14px;left:334.00px;width:600px;text-align:center;will-change:transform;transform:scaleX(0.94);transform-origin:50% 50%;">Formatting</div>
<div class="t g" style="top:70.10px;font-size:9.9px;color:#3a3a3a;line-height:14px;left:388.00px;width:600px;text-align:center;will-change:transform;transform:scaleX(0.94);transform-origin:50% 50%;">Format as</div>
<div class="t g" style="top:82.60px;font-size:9.9px;color:#3a3a3a;line-height:14px;left:385.60px;width:600px;text-align:center;will-change:transform;transform:scaleX(0.94);transform-origin:50% 50%;">Table</div>
<div class="t g" style="top:48.40px;font-size:10.6px;color:#000;line-height:14px;left:718.50px;letter-spacing:0.25px;">Normal</div>
<div class="t g" style="top:48.40px;font-size:10.6px;color:#9c0006;line-height:14px;left:801.50px;letter-spacing:0.25px;">Bad</div>
<div class="t g" style="top:48.40px;font-size:10.6px;color:#006100;line-height:14px;left:885.00px;letter-spacing:0.25px;">Good</div>
<div class="t g" style="top:48.40px;font-size:10.6px;color:#9c6500;line-height:14px;left:968.80px;letter-spacing:0.25px;">Neutral</div>
<div class="t g" style="top:48.40px;font-size:9.799999999999999px;color:#fa7d00;line-height:14px;left:1052.00px;font-weight:bold;">Calculation</div>
<div class="t g" style="top:70.20px;font-size:9.7px;color:#fff;line-height:14px;left:718.50px;font-weight:bold;letter-spacing:0.25px;">Check Cell</div>
<div class="t g" style="top:70.20px;font-size:10.4px;color:#7f7f7f;line-height:14px;left:801.80px;font-style:italic;letter-spacing:0.25px;">Explanatory ...</div>
<div class="t g" style="top:70.20px;font-size:10.6px;color:#3f3f76;line-height:14px;left:885.50px;letter-spacing:0.25px;">Input</div>
<div class="t g" style="top:70.20px;font-size:10.4px;color:#fa7d00;line-height:14px;left:968.80px;">Linked Cell</div>
<div class="t g" style="top:70.20px;font-size:10.6px;color:#000;line-height:14px;left:1052.50px;letter-spacing:0.25px;">Note</div>
<div class="t g" style="top:97.90px;font-size:9.9px;color:#666;line-height:14px;left:576.80px;width:600px;text-align:center;will-change:transform;transform:scaleX(0.94);transform-origin:50% 50%;">Styles</div>
<div class="t g" style="top:70.10px;font-size:9.9px;color:#3a3a3a;line-height:14px;left:868.00px;width:600px;text-align:center;will-change:transform;transform:scaleX(0.94);transform-origin:50% 50%;">Insert</div>
<div class="t g" style="top:70.10px;font-size:9.9px;color:#3a3a3a;line-height:14px;left:901.50px;width:600px;text-align:center;will-change:transform;transform:scaleX(0.94);transform-origin:50% 50%;">Delete</div>
<div class="t g" style="top:70.10px;font-size:9.9px;color:#3a3a3a;line-height:14px;left:934.80px;width:600px;text-align:center;will-change:transform;transform:scaleX(0.94);transform-origin:50% 50%;">Format</div>
<div class="t g" style="top:97.90px;font-size:9.9px;color:#666;line-height:14px;left:902.00px;width:600px;text-align:center;will-change:transform;transform:scaleX(0.94);transform-origin:50% 50%;">Cells</div>
<div class="t g" style="top:43.50px;font-size:9.9px;color:#3a3a3a;line-height:14px;left:1277.00px;will-change:transform;transform:scaleX(0.94);transform-origin:0 50%;">AutoSum</div>
<div class="t g" style="top:61.10px;font-size:9.9px;color:#3a3a3a;line-height:14px;left:1277.00px;will-change:transform;transform:scaleX(0.94);transform-origin:0 50%;">Fill</div>
<div class="t g" style="top:79.70px;font-size:9.9px;color:#3a3a3a;line-height:14px;left:1277.00px;will-change:transform;transform:scaleX(0.94);transform-origin:0 50%;">Clear</div>
<div class="t g" style="top:43.60px;font-size:12.4px;color:#3a78c3;line-height:14px;left:1040.80px;width:600px;text-align:center;">A</div>
<div class="t g" style="top:54.70px;font-size:12.4px;color:#8b3fb5;line-height:14px;left:1041.00px;width:600px;text-align:center;">Z</div>
<div class="t g" style="top:70.10px;font-size:9.9px;color:#3a3a3a;line-height:14px;left:1048.20px;width:600px;text-align:center;will-change:transform;transform:scaleX(0.94);transform-origin:50% 50%;">Sort &amp;</div>
<div class="t g" style="top:82.60px;font-size:9.9px;color:#3a3a3a;line-height:14px;left:1045.10px;width:600px;text-align:center;will-change:transform;transform:scaleX(0.94);transform-origin:50% 50%;">Filter</div>
<div class="t g" style="top:70.10px;font-size:9.9px;color:#3a3a3a;line-height:14px;left:1082.00px;width:600px;text-align:center;will-change:transform;transform:scaleX(0.94);transform-origin:50% 50%;">Find &amp;</div>
<div class="t g" style="top:82.60px;font-size:9.9px;color:#3a3a3a;line-height:14px;left:1078.40px;width:600px;text-align:center;will-change:transform;transform:scaleX(0.94);transform-origin:50% 50%;">Select</div>
<div class="t g" style="top:97.90px;font-size:9.9px;color:#666;line-height:14px;left:1029.00px;width:600px;text-align:center;will-change:transform;transform:scaleX(0.94);transform-origin:50% 50%;">Editing</div>
<div class="t" style="top:123.30px;font-size:9.8px;color:#333;line-height:14px;left:9.60px;will-change:transform;transform:scaleX(0.95);transform-origin:0 50%;">AJ39</div>
<div class="t s" style="top:120.60px;font-size:16.5px;color:#555;line-height:18px;left:172.40px;font-weight:bold;font-style:italic;letter-spacing:-0.6px;">fx</div>
<div class="t" style="top:181.10px;font-size:9.8px;color:#444;line-height:14px;left:-235.35px;width:600px;text-align:center;">A</div>
<div class="t" style="top:181.10px;font-size:9.8px;color:#444;line-height:14px;left:-175.80px;width:600px;text-align:center;">B</div>
<div class="t" style="top:181.10px;font-size:9.8px;color:#444;line-height:14px;left:-135.20px;width:600px;text-align:center;">C</div>
<div class="t" style="top:181.10px;font-size:9.8px;color:#444;line-height:14px;left:-80.55px;width:600px;text-align:center;">D</div>
<div class="t" style="top:181.10px;font-size:9.8px;color:#444;line-height:14px;left:-21.60px;width:600px;text-align:center;">E</div>
<div class="t" style="top:181.10px;font-size:9.8px;color:#444;line-height:14px;left:35.30px;width:600px;text-align:center;">F</div>
<div class="t" style="top:181.10px;font-size:9.8px;color:#444;line-height:14px;left:92.10px;width:600px;text-align:center;">G</div>
<div class="t" style="top:181.10px;font-size:9.8px;color:#444;line-height:14px;left:148.75px;width:600px;text-align:center;">H</div>
<div class="t" style="top:181.10px;font-size:9.8px;color:#444;line-height:14px;left:206.00px;width:600px;text-align:center;">I</div>
<div class="t" style="top:181.10px;font-size:9.8px;color:#444;line-height:14px;left:267.50px;width:600px;text-align:center;">J</div>
<div class="t" style="top:181.10px;font-size:9.8px;color:#444;line-height:14px;left:328.90px;width:600px;text-align:center;">K</div>
<div class="t" style="top:181.10px;font-size:9.8px;color:#444;line-height:14px;left:392.75px;width:600px;text-align:center;">L</div>
<div class="t" style="top:181.10px;font-size:9.8px;color:#444;line-height:14px;left:469.80px;width:600px;text-align:center;">M</div>
<div class="t" style="top:181.10px;font-size:9.8px;color:#444;line-height:14px;left:551.85px;width:600px;text-align:center;">N</div>
<div class="t" style="top:181.10px;font-size:9.8px;color:#444;line-height:14px;left:631.90px;width:600px;text-align:center;">O</div>
<div class="t" style="top:181.10px;font-size:9.8px;color:#444;line-height:14px;left:698.71px;width:600px;text-align:center;">P</div>
<div class="t" style="top:181.10px;font-size:9.8px;color:#444;line-height:14px;left:749.13px;width:600px;text-align:center;">Q</div>
<div class="t" style="top:181.10px;font-size:9.8px;color:#444;line-height:14px;left:799.55px;width:600px;text-align:center;">R</div>
<div class="t" style="top:181.10px;font-size:9.8px;color:#444;line-height:14px;left:849.97px;width:600px;text-align:center;">S</div>
<div class="t" style="top:181.10px;font-size:9.8px;color:#444;line-height:14px;left:900.39px;width:600px;text-align:center;">T</div>
<div class="t" style="top:181.10px;font-size:9.8px;color:#444;line-height:14px;left:950.81px;width:600px;text-align:center;">U</div>
<div class="t" style="top:181.10px;font-size:9.8px;color:#444;line-height:14px;left:1001.23px;width:600px;text-align:center;">V</div>
<div class="t" style="top:181.10px;font-size:9.8px;color:#444;line-height:14px;left:1051.65px;width:600px;text-align:center;">W</div>
<div class="t" style="top:181.10px;font-size:9.8px;color:#444;line-height:14px;left:1102.07px;width:600px;text-align:center;">X</div>
<div class="t" style="top:181.10px;font-size:9.8px;color:#444;line-height:14px;left:1152.49px;width:600px;text-align:center;">Y</div>
<div class="t" style="top:181.10px;font-size:9.8px;color:#444;line-height:14px;left:1202.91px;width:600px;text-align:center;">Z</div>
<div class="t" style="top:181.10px;font-size:9.8px;color:#444;line-height:14px;left:1253.33px;width:600px;text-align:center;">AA</div>
<div class="t" style="top:181.10px;font-size:9.8px;color:#444;line-height:14px;left:1303.75px;width:600px;text-align:center;">AB</div>
<div class="t" style="top:181.10px;font-size:9.8px;color:#444;line-height:14px;left:1354.17px;width:600px;text-align:center;">AC</div>
<div class="t" style="top:181.10px;font-size:9.8px;color:#444;line-height:14px;left:1404.59px;width:600px;text-align:center;">AD</div>
<div class="t" style="top:181.10px;font-size:9.8px;color:#444;line-height:14px;left:1455.01px;width:600px;text-align:center;">AE</div>
<div class="t" style="top:181.10px;font-size:9.8px;color:#444;line-height:14px;left:1505.43px;width:600px;text-align:center;">AF</div>
<div class="t" style="top:181.10px;font-size:9.8px;color:#444;line-height:14px;left:1555.85px;width:600px;text-align:center;">AG</div>
<div class="t" style="top:181.10px;font-size:9.8px;color:#444;line-height:14px;left:1606.27px;width:600px;text-align:center;">AH</div>
<div class="t" style="top:181.10px;font-size:9.8px;color:#444;line-height:14px;left:1656.69px;width:600px;text-align:center;">AI</div>
<div class="t" style="top:196.60px;font-size:10px;color:#4a4a4a;line-height:14px;left:-290.00px;width:600px;text-align:center;">1</div>
<div class="t" style="top:212.36px;font-size:10px;color:#4a4a4a;line-height:14px;left:-290.00px;width:600px;text-align:center;">2</div>
<div class="t" style="top:228.13px;font-size:10px;color:#4a4a4a;line-height:14px;left:-290.00px;width:600px;text-align:center;">3</div>
<div class="t" style="top:243.90px;font-size:10px;color:#4a4a4a;line-height:14px;left:-290.00px;width:600px;text-align:center;">4</div>
<div class="t" style="top:259.66px;font-size:10px;color:#4a4a4a;line-height:14px;left:-290.00px;width:600px;text-align:center;">5</div>
<div class="t" style="top:275.42px;font-size:10px;color:#4a4a4a;line-height:14px;left:-290.00px;width:600px;text-align:center;">6</div>
<div class="t" style="top:291.19px;font-size:10px;color:#4a4a4a;line-height:14px;left:-290.00px;width:600px;text-align:center;">7</div>
<div class="t" style="top:306.95px;font-size:10px;color:#4a4a4a;line-height:14px;left:-290.00px;width:600px;text-align:center;">8</div>
<div class="t" style="top:322.72px;font-size:10px;color:#4a4a4a;line-height:14px;left:-290.00px;width:600px;text-align:center;">9</div>
<div class="t" style="top:338.48px;font-size:10px;color:#4a4a4a;line-height:14px;left:-290.00px;width:600px;text-align:center;">10</div>
<div class="t" style="top:354.25px;font-size:10px;color:#4a4a4a;line-height:14px;left:-290.00px;width:600px;text-align:center;">11</div>
<div class="t" style="top:370.01px;font-size:10px;color:#4a4a4a;line-height:14px;left:-290.00px;width:600px;text-align:center;">12</div>
<div class="t" style="top:385.78px;font-size:10px;color:#4a4a4a;line-height:14px;left:-290.00px;width:600px;text-align:center;">13</div>
<div class="t" style="top:401.54px;font-size:10px;color:#4a4a4a;line-height:14px;left:-290.00px;width:600px;text-align:center;">14</div>
<div class="t" style="top:417.31px;font-size:10px;color:#4a4a4a;line-height:14px;left:-290.00px;width:600px;text-align:center;">15</div>
<div class="t" style="top:433.07px;font-size:10px;color:#4a4a4a;line-height:14px;left:-290.00px;width:600px;text-align:center;">16</div>
<div class="t" style="top:448.84px;font-size:10px;color:#4a4a4a;line-height:14px;left:-290.00px;width:600px;text-align:center;">17</div>
<div class="t" style="top:464.60px;font-size:10px;color:#4a4a4a;line-height:14px;left:-290.00px;width:600px;text-align:center;">18</div>
<div class="t" style="top:480.37px;font-size:10px;color:#4a4a4a;line-height:14px;left:-290.00px;width:600px;text-align:center;">19</div>
<div class="t" style="top:496.13px;font-size:10px;color:#4a4a4a;line-height:14px;left:-290.00px;width:600px;text-align:center;">20</div>
<div class="t" style="top:511.90px;font-size:10px;color:#4a4a4a;line-height:14px;left:-290.00px;width:600px;text-align:center;">21</div>
<div class="t" style="top:527.66px;font-size:10px;color:#4a4a4a;line-height:14px;left:-290.00px;width:600px;text-align:center;">22</div>
<div class="t" style="top:543.43px;font-size:10px;color:#4a4a4a;line-height:14px;left:-290.00px;width:600px;text-align:center;">23</div>
<div class="t" style="top:559.20px;font-size:10px;color:#4a4a4a;line-height:14px;left:-290.00px;width:600px;text-align:center;">24</div>
<div class="t" style="top:574.96px;font-size:10px;color:#4a4a4a;line-height:14px;left:-290.00px;width:600px;text-align:center;">25</div>
<div class="t" style="top:590.73px;font-size:10px;color:#4a4a4a;line-height:14px;left:-290.00px;width:600px;text-align:center;">26</div>
<div class="t" style="top:606.49px;font-size:10px;color:#4a4a4a;line-height:14px;left:-290.00px;width:600px;text-align:center;">27</div>
<div class="t" style="top:622.25px;font-size:10px;color:#4a4a4a;line-height:14px;left:-290.00px;width:600px;text-align:center;">28</div>
<div class="t" style="top:638.02px;font-size:10px;color:#4a4a4a;line-height:14px;left:-290.00px;width:600px;text-align:center;">29</div>
<div class="t" style="top:653.78px;font-size:10px;color:#4a4a4a;line-height:14px;left:-290.00px;width:600px;text-align:center;">30</div>
<div class="t" style="top:669.55px;font-size:10px;color:#4a4a4a;line-height:14px;left:-290.00px;width:600px;text-align:center;">31</div>
<div class="t" style="top:685.31px;font-size:10px;color:#4a4a4a;line-height:14px;left:-290.00px;width:600px;text-align:center;">32</div>
<div class="t" style="top:701.08px;font-size:10px;color:#4a4a4a;line-height:14px;left:-290.00px;width:600px;text-align:center;">33</div>
<div class="t" style="top:716.84px;font-size:10px;color:#4a4a4a;line-height:14px;left:-290.00px;width:600px;text-align:center;">34</div>
<div class="t" style="top:732.61px;font-size:10px;color:#4a4a4a;line-height:14px;left:-290.00px;width:600px;text-align:center;">35</div>
<div class="t" style="top:748.37px;font-size:10px;color:#4a4a4a;line-height:14px;left:-290.00px;width:600px;text-align:center;">36</div>
<div class="t" style="top:764.14px;font-size:10px;color:#4a4a4a;line-height:14px;left:-290.00px;width:600px;text-align:center;">37</div>
<div class="t" style="top:779.91px;font-size:10px;color:#4a4a4a;line-height:14px;left:-290.00px;width:600px;text-align:center;">38</div>
<div class="t" style="top:795.67px;font-size:10px;color:#217346;line-height:14px;left:-290.00px;width:600px;text-align:center;font-weight:bold;">39</div>
<div class="t" style="top:811.44px;font-size:10px;color:#4a4a4a;line-height:14px;left:-290.00px;width:600px;text-align:center;">40</div>
<div class="t" style="top:827.20px;font-size:10px;color:#4a4a4a;line-height:14px;left:-290.00px;width:600px;text-align:center;">41</div>
<div class="t" style="top:842.97px;font-size:10px;color:#4a4a4a;line-height:14px;left:-290.00px;width:600px;text-align:center;">42</div>
<div class="t" style="top:858.73px;font-size:10px;color:#4a4a4a;line-height:14px;left:-290.00px;width:600px;text-align:center;">43</div>
<div class="t" style="top:874.50px;font-size:10px;color:#4a4a4a;line-height:14px;left:-290.00px;width:600px;text-align:center;">44</div>
<div class="t" style="top:890.26px;font-size:10px;color:#4a4a4a;line-height:14px;left:-290.00px;width:600px;text-align:center;">45</div>
<div class="t" style="top:906.02px;font-size:10px;color:#4a4a4a;line-height:14px;left:-290.00px;width:600px;text-align:center;">46</div>
<div class="t" style="top:921.79px;font-size:10px;color:#4a4a4a;line-height:14px;left:-290.00px;width:600px;text-align:center;">47</div>
<div class="t" style="top:937.55px;font-size:10px;color:#4a4a4a;line-height:14px;left:-290.00px;width:600px;text-align:center;">48</div>
<div class="t" style="top:953.32px;font-size:10px;color:#4a4a4a;line-height:14px;left:-290.00px;width:600px;text-align:center;">49</div>
<div class="t" style="top:969.08px;font-size:10px;color:#4a4a4a;line-height:14px;left:-290.00px;width:600px;text-align:center;">50</div>
<div class="t" style="top:984.85px;font-size:10px;color:#4a4a4a;line-height:14px;left:-290.00px;width:600px;text-align:center;">51</div>
<div class="t" style="top:1000.61px;font-size:10px;color:#4a4a4a;line-height:14px;left:-290.00px;width:600px;text-align:center;">52</div>
<div class="t" style="top:1016.38px;font-size:10px;color:#4a4a4a;line-height:14px;left:-290.00px;width:600px;text-align:center;">53</div>
<div class="t" style="top:1032.15px;font-size:10px;color:#4a4a4a;line-height:14px;left:-290.00px;width:600px;text-align:center;">54</div>
<div class="t" style="top:1047.91px;font-size:10px;color:#4a4a4a;line-height:14px;left:-290.00px;width:600px;text-align:center;">55</div>
<div class="t c" style="left:22.40px;top:197.80px;width:72.60px;overflow:hidden;font-size:10px;letter-spacing:0.45px;color:#000;line-height:14px;">submission_date</div>
<div class="t c" style="left:111.70px;top:197.80px;width:13.10px;overflow:hidden;font-size:10px;letter-spacing:0.1px;color:#000;line-height:14px;">state</div>
<div class="t c" style="left:141.50px;top:197.80px;width:36.00px;overflow:hidden;font-size:10px;letter-spacing:0.5px;color:#000;line-height:14px;">tot_cases</div>
<div class="t c" style="left:192.90px;top:197.80px;width:41.20px;overflow:hidden;font-size:10px;letter-spacing:0.22px;color:#000;line-height:14px;">conf_cases</div>
<div class="t c" style="left:250.80px;top:197.80px;width:43.30px;overflow:hidden;font-size:10px;letter-spacing:0.36px;color:#000;line-height:14px;">prob_cases</div>
<div class="t c" style="left:310.80px;top:197.80px;width:37.10px;overflow:hidden;font-size:10px;letter-spacing:0.45px;color:#000;line-height:14px;">new_case</div>
<div class="t c" style="left:364.60px;top:197.80px;width:43.10px;overflow:hidden;font-size:10px;letter-spacing:0.45px;color:#000;line-height:14px;">pnew_case</div>
<div class="t c" style="left:424.40px;top:197.80px;width:36.80px;overflow:hidden;font-size:10px;letter-spacing:0.62px;color:#000;line-height:14px;">tot_death</div>
<div class="t c" style="left:477.90px;top:197.80px;width:44.30px;overflow:hidden;font-size:10px;letter-spacing:0.42px;color:#000;line-height:14px;">conf_death</div>
<div class="t c" style="left:538.90px;top:197.80px;width:45.30px;overflow:hidden;font-size:10px;letter-spacing:0.55px;color:#000;line-height:14px;">prob_death</div>
<div class="t c" style="left:600.90px;top:197.80px;width:44.10px;overflow:hidden;font-size:10px;letter-spacing:0.63px;color:#000;line-height:14px;">new_death</div>
<div class="t c" style="left:661.70px;top:197.80px;width:50.20px;overflow:hidden;font-size:10px;letter-spacing:0.6px;color:#000;line-height:14px;">pnew_death</div>
<div class="t c" style="left:728.60px;top:197.80px;width:70.50px;overflow:hidden;font-size:10px;letter-spacing:0.51px;color:#000;line-height:14px;">created_at</div>
<div class="t c" style="left:815.80px;top:197.80px;width:61.50px;overflow:hidden;font-size:10px;letter-spacing:0.38px;color:#000;line-height:14px;">consent_cases</div>
<div class="t c" style="left:892.70px;top:197.80px;width:67.80px;overflow:hidden;font-size:10px;letter-spacing:0.65px;color:#000;line-height:14px;">consent_deaths</div>
<div class="t c" style="top:213.36px;font-size:10px;color:#000;line-height:14px;left:-192.90px;width:300px;text-align:right;">9<i>/</i>10<i>/</i>2021</div>
<div class="t c" style="top:213.36px;font-size:10px;color:#000;line-height:14px;left:111.70px;will-change:transform;transform:scaleX(0.9);transform-origin:0 50%;">FL</div>
<div class="t c" style="top:213.36px;font-size:10px;color:#000;line-height:14px;left:-111.70px;width:300px;text-align:right;">3,418,160</div>
<div class="t c" style="top:213.36px;font-size:10px;color:#000;line-height:14px;left:60.00px;width:300px;text-align:right;">9,148</div>
<div class="t c" style="top:213.36px;font-size:10px;color:#000;line-height:14px;left:119.80px;width:300px;text-align:right;">2,453</div>
<div class="t c" style="top:213.36px;font-size:10px;color:#000;line-height:14px;left:173.30px;width:300px;text-align:right;">48,283</div>
<div class="t c" style="top:213.36px;font-size:10px;color:#000;line-height:14px;left:357.10px;width:300px;text-align:right;">7</div>
<div class="t c" style="top:213.36px;font-size:10px;color:#000;line-height:14px;left:424.00px;width:300px;text-align:right;">0</div>
<div class="t c" style="top:213.36px;font-size:10px;color:#000;line-height:14px;left:511.40px;width:300px;text-align:right;">9<i>/</i>11<i>/</i>2021 13:20</div>
<div class="t c" style="top:213.36px;font-size:10px;color:#000;line-height:14px;left:816.10px;letter-spacing:0.4px;">Not agree</div>
<div class="t c" style="top:213.36px;font-size:10px;color:#000;line-height:14px;left:892.60px;letter-spacing:0.4px;">Not agree</div>
<div class="t c" style="top:229.13px;font-size:10px;color:#000;line-height:14px;left:-192.90px;width:300px;text-align:right;">9<i>/</i>9<i>/</i>2021</div>
<div class="t c" style="top:229.13px;font-size:10px;color:#000;line-height:14px;left:111.70px;will-change:transform;transform:scaleX(0.9);transform-origin:0 50%;">FL</div>
<div class="t c" style="top:229.13px;font-size:10px;color:#000;line-height:14px;left:-111.70px;width:300px;text-align:right;">3,409,012</div>
<div class="t c" style="top:229.13px;font-size:10px;color:#000;line-height:14px;left:60.00px;width:300px;text-align:right;">17,854</div>
<div class="t c" style="top:229.13px;font-size:10px;color:#000;line-height:14px;left:119.80px;width:300px;text-align:right;">6,751</div>
<div class="t c" style="top:229.13px;font-size:10px;color:#000;line-height:14px;left:173.30px;width:300px;text-align:right;">48,276</div>
<div class="t c" style="top:229.13px;font-size:10px;color:#000;line-height:14px;left:357.10px;width:300px;text-align:right;">3</div>
<div class="t c" style="top:229.13px;font-size:10px;color:#000;line-height:14px;left:424.00px;width:300px;text-align:right;">1</div>
<div class="t c" style="top:229.13px;font-size:10px;color:#000;line-height:14px;left:511.40px;width:300px;text-align:right;">9<i>/</i>10<i>/</i>2021 14:35</div>
<div class="t c" style="top:229.13px;font-size:10px;color:#000;line-height:14px;left:816.10px;letter-spacing:0.4px;">Not agree</div>
<div class="t c" style="top:229.13px;font-size:10px;color:#000;line-height:14px;left:892.60px;letter-spacing:0.4px;">Not agree</div>
<div class="t c" style="top:244.90px;font-size:10px;color:#000;line-height:14px;left:-192.90px;width:300px;text-align:right;">9<i>/</i>8<i>/</i>2021</div>
<div class="t c" style="top:244.90px;font-size:10px;color:#000;line-height:14px;left:111.70px;will-change:transform;transform:scaleX(0.9);transform-origin:0 50%;">FL</div>
<div class="t c" style="top:244.90px;font-size:10px;color:#000;line-height:14px;left:-111.70px;width:300px;text-align:right;">3,391,158</div>
<div class="t c" style="top:244.90px;font-size:10px;color:#000;line-height:14px;left:60.00px;width:300px;text-align:right;">12,288</div>
<div class="t c" style="top:244.90px;font-size:10px;color:#000;line-height:14px;left:119.80px;width:300px;text-align:right;">4,408</div>
<div class="t c" style="top:244.90px;font-size:10px;color:#000;line-height:14px;left:173.30px;width:300px;text-align:right;">48,273</div>
<div class="t c" style="top:244.90px;font-size:10px;color:#000;line-height:14px;left:357.10px;width:300px;text-align:right;">9</div>
<div class="t c" style="top:244.90px;font-size:10px;color:#000;line-height:14px;left:424.00px;width:300px;text-align:right;">0</div>
<div class="t c" style="top:244.90px;font-size:10px;color:#000;line-height:14px;left:511.40px;width:300px;text-align:right;">9<i>/</i>9<i>/</i>2021 14:36</div>
<div class="t c" style="top:244.90px;font-size:10px;color:#000;line-height:14px;left:816.10px;letter-spacing:0.4px;">Not agree</div>
<div class="t c" style="top:244.90px;font-size:10px;color:#000;line-height:14px;left:892.60px;letter-spacing:0.4px;">Not agree</div>
<div class="t c" style="top:260.66px;font-size:10px;color:#000;line-height:14px;left:-192.90px;width:300px;text-align:right;">9<i>/</i>7<i>/</i>2021</div>
<div class="t c" style="top:260.66px;font-size:10px;color:#000;line-height:14px;left:111.70px;will-change:transform;transform:scaleX(0.9);transform-origin:0 50%;">FL</div>
<div class="t c" style="top:260.66px;font-size:10px;color:#000;line-height:14px;left:-111.70px;width:300px;text-align:right;">3,378,870</div>
<div class="t c" style="top:260.66px;font-size:10px;color:#000;line-height:14px;left:60.00px;width:300px;text-align:right;">13,954</div>
<div class="t c" style="top:260.66px;font-size:10px;color:#000;line-height:14px;left:119.80px;width:300px;text-align:right;">6,018</div>
<div class="t c" style="top:260.66px;font-size:10px;color:#000;line-height:14px;left:173.30px;width:300px;text-align:right;">48,264</div>
<div class="t c" style="top:260.66px;font-size:10px;color:#000;line-height:14px;left:357.10px;width:300px;text-align:right;">35</div>
<div class="t c" style="top:260.66px;font-size:10px;color:#000;line-height:14px;left:424.00px;width:300px;text-align:right;">5</div>
<div class="t c" style="top:260.66px;font-size:10px;color:#000;line-height:14px;left:511.40px;width:300px;text-align:right;">9<i>/</i>7<i>/</i>2021 0:00</div>
<div class="t c" style="top:260.66px;font-size:10px;color:#000;line-height:14px;left:816.10px;letter-spacing:0.4px;">Not agree</div>
<div class="t c" style="top:260.66px;font-size:10px;color:#000;line-height:14px;left:892.60px;letter-spacing:0.4px;">Not agree</div>
<div class="t c" style="top:276.42px;font-size:10px;color:#000;line-height:14px;left:-192.90px;width:300px;text-align:right;">9<i>/</i>6<i>/</i>2021</div>
<div class="t c" style="top:276.42px;font-size:10px;color:#000;line-height:14px;left:111.70px;will-change:transform;transform:scaleX(0.9);transform-origin:0 50%;">FL</div>
<div class="t c" style="top:276.42px;font-size:10px;color:#000;line-height:14px;left:-111.70px;width:300px;text-align:right;">3,364,916</div>
<div class="t c" style="top:276.42px;font-size:10px;color:#000;line-height:14px;left:60.00px;width:300px;text-align:right;">10,192</div>
<div class="t c" style="top:276.42px;font-size:10px;color:#000;line-height:14px;left:119.80px;width:300px;text-align:right;">2,244</div>
<div class="t c" style="top:276.42px;font-size:10px;color:#000;line-height:14px;left:173.30px;width:300px;text-align:right;">48,229</div>
<div class="t c" style="top:276.42px;font-size:10px;color:#000;line-height:14px;left:357.10px;width:300px;text-align:right;">49</div>
<div class="t c" style="top:276.42px;font-size:10px;color:#000;line-height:14px;left:424.00px;width:300px;text-align:right;">5</div>
<div class="t c" style="top:276.42px;font-size:10px;color:#000;line-height:14px;left:511.40px;width:300px;text-align:right;">9<i>/</i>6<i>/</i>2021 0:00</div>
<div class="t c" style="top:276.42px;font-size:10px;color:#000;line-height:14px;left:816.10px;letter-spacing:0.4px;">Not agree</div>
<div class="t c" style="top:276.42px;font-size:10px;color:#000;line-height:14px;left:892.60px;letter-spacing:0.4px;">Not agree</div>
<div class="t c" style="top:292.19px;font-size:10px;color:#000;line-height:14px;left:-192.90px;width:300px;text-align:right;">9<i>/</i>5<i>/</i>2021</div>
<div class="t c" style="top:292.19px;font-size:10px;color:#000;line-height:14px;left:111.70px;will-change:transform;transform:scaleX(0.9);transform-origin:0 50%;">FL</div>
<div class="t c" style="top:292.19px;font-size:10px;color:#000;line-height:14px;left:-111.70px;width:300px;text-align:right;">3,354,724</div>
<div class="t c" style="top:292.19px;font-size:10px;color:#000;line-height:14px;left:60.00px;width:300px;text-align:right;">11,143</div>
<div class="t c" style="top:292.19px;font-size:10px;color:#000;line-height:14px;left:119.80px;width:300px;text-align:right;">3,123</div>
<div class="t c" style="top:292.19px;font-size:10px;color:#000;line-height:14px;left:173.30px;width:300px;text-align:right;">48,180</div>
<div class="t c" style="top:292.19px;font-size:10px;color:#000;line-height:14px;left:357.10px;width:300px;text-align:right;">41</div>
<div class="t c" style="top:292.19px;font-size:10px;color:#000;line-height:14px;left:424.00px;width:300px;text-align:right;">5</div>
<div class="t c" style="top:292.19px;font-size:10px;color:#000;line-height:14px;left:511.40px;width:300px;text-align:right;">9<i>/</i>5<i>/</i>2021 0:00</div>
<div class="t c" style="top:292.19px;font-size:10px;color:#000;line-height:14px;left:816.10px;letter-spacing:0.4px;">Not agree</div>
<div class="t c" style="top:292.19px;font-size:10px;color:#000;line-height:14px;left:892.60px;letter-spacing:0.4px;">Not agree</div>
<div class="t c" style="top:307.95px;font-size:10px;color:#000;line-height:14px;left:-192.90px;width:300px;text-align:right;">9<i>/</i>4<i>/</i>2021</div>
<div class="t c" style="top:307.95px;font-size:10px;color:#000;line-height:14px;left:111.70px;will-change:transform;transform:scaleX(0.9);transform-origin:0 50%;">FL</div>
<div class="t c" style="top:307.95px;font-size:10px;color:#000;line-height:14px;left:-111.70px;width:300px;text-align:right;">3,343,581</div>
<div class="t c" style="top:307.95px;font-size:10px;color:#000;line-height:14px;left:60.00px;width:300px;text-align:right;">17,274</div>
<div class="t c" style="top:307.95px;font-size:10px;color:#000;line-height:14px;left:119.80px;width:300px;text-align:right;">5,893</div>
<div class="t c" style="top:307.95px;font-size:10px;color:#000;line-height:14px;left:173.30px;width:300px;text-align:right;">48,139</div>
<div class="t c" style="top:307.95px;font-size:10px;color:#000;line-height:14px;left:357.10px;width:300px;text-align:right;">49</div>
<div class="t c" style="top:307.95px;font-size:10px;color:#000;line-height:14px;left:424.00px;width:300px;text-align:right;">5</div>
<div class="t c" style="top:307.95px;font-size:10px;color:#000;line-height:14px;left:511.40px;width:300px;text-align:right;">9<i>/</i>4<i>/</i>2021 0:00</div>
<div class="t c" style="top:307.95px;font-size:10px;color:#000;line-height:14px;left:816.10px;letter-spacing:0.4px;">Not agree</div>
<div class="t c" style="top:307.95px;font-size:10px;color:#000;line-height:14px;left:892.60px;letter-spacing:0.4px;">Not agree</div>
<div class="t c" style="top:323.72px;font-size:10px;color:#000;line-height:14px;left:-192.90px;width:300px;text-align:right;">9<i>/</i>3<i>/</i>2021</div>
<div class="t c" style="top:323.72px;font-size:10px;color:#000;line-height:14px;left:111.70px;will-change:transform;transform:scaleX(0.9);transform-origin:0 50%;">FL</div>
<div class="t c" style="top:323.72px;font-size:10px;color:#000;line-height:14px;left:-111.70px;width:300px;text-align:right;">3,326,307</div>
<div class="t c" style="top:323.72px;font-size:10px;color:#000;line-height:14px;left:60.00px;width:300px;text-align:right;">17,114</div>
<div class="t c" style="top:323.72px;font-size:10px;color:#000;line-height:14px;left:119.80px;width:300px;text-align:right;">3,444</div>
<div class="t c" style="top:323.72px;font-size:10px;color:#000;line-height:14px;left:173.30px;width:300px;text-align:right;">48,090</div>
<div class="t c" style="top:323.72px;font-size:10px;color:#000;line-height:14px;left:357.10px;width:300px;text-align:right;">46</div>
<div class="t c" style="top:323.72px;font-size:10px;color:#000;line-height:14px;left:424.00px;width:300px;text-align:right;">2</div>
<div class="t c" style="top:323.72px;font-size:10px;color:#000;line-height:14px;left:511.40px;width:300px;text-align:right;">9<i>/</i>3<i>/</i>2021 0:00</div>
<div class="t c" style="top:323.72px;font-size:10px;color:#000;line-height:14px;left:816.10px;letter-spacing:0.4px;">Not agree</div>
<div class="t c" style="top:323.72px;font-size:10px;color:#000;line-height:14px;left:892.60px;letter-spacing:0.4px;">Not agree</div>
<div class="t c" style="top:339.48px;font-size:10px;color:#000;line-height:14px;left:-192.90px;width:300px;text-align:right;">9<i>/</i>2<i>/</i>2021</div>
<div class="t c" style="top:339.48px;font-size:10px;color:#000;line-height:14px;left:111.70px;will-change:transform;transform:scaleX(0.9);transform-origin:0 50%;">FL</div>
<div class="t c" style="top:339.48px;font-size:10px;color:#000;line-height:14px;left:-111.70px;width:300px;text-align:right;">3,309,193</div>
<div class="t c" style="top:339.48px;font-size:10px;color:#000;line-height:14px;left:60.00px;width:300px;text-align:right;">18,114</div>
<div class="t c" style="top:339.48px;font-size:10px;color:#000;line-height:14px;left:119.80px;width:300px;text-align:right;">5,007</div>
<div class="t c" style="top:339.48px;font-size:10px;color:#000;line-height:14px;left:173.30px;width:300px;text-align:right;">48,044</div>
<div class="t c" style="top:339.48px;font-size:10px;color:#000;line-height:14px;left:357.10px;width:300px;text-align:right;">81</div>
<div class="t c" style="top:339.48px;font-size:10px;color:#000;line-height:14px;left:424.00px;width:300px;text-align:right;">4</div>
<div class="t c" style="top:339.48px;font-size:10px;color:#000;line-height:14px;left:511.40px;width:300px;text-align:right;">9<i>/</i>2<i>/</i>2021 0:00</div>
<div class="t c" style="top:339.48px;font-size:10px;color:#000;line-height:14px;left:816.10px;letter-spacing:0.4px;">Not agree</div>
<div class="t c" style="top:339.48px;font-size:10px;color:#000;line-height:14px;left:892.60px;letter-spacing:0.4px;">Not agree</div>
<div class="t c" style="top:355.25px;font-size:10px;color:#000;line-height:14px;left:-192.90px;width:300px;text-align:right;">9<i>/</i>1<i>/</i>2021</div>
<div class="t c" style="top:355.25px;font-size:10px;color:#000;line-height:14px;left:111.70px;will-change:transform;transform:scaleX(0.9);transform-origin:0 50%;">FL</div>
<div class="t c" style="top:355.25px;font-size:10px;color:#000;line-height:14px;left:-111.70px;width:300px;text-align:right;">3,291,079</div>
<div class="t c" style="top:355.25px;font-size:10px;color:#000;line-height:14px;left:60.00px;width:300px;text-align:right;">21,555</div>
<div class="t c" style="top:355.25px;font-size:10px;color:#000;line-height:14px;left:119.80px;width:300px;text-align:right;">7,205</div>
<div class="t c" style="top:355.25px;font-size:10px;color:#000;line-height:14px;left:173.30px;width:300px;text-align:right;">47,963</div>
<div class="t c" style="top:355.25px;font-size:10px;color:#000;line-height:14px;left:357.10px;width:300px;text-align:right;">125</div>
<div class="t c" style="top:355.25px;font-size:10px;color:#000;line-height:14px;left:424.00px;width:300px;text-align:right;">15</div>
<div class="t c" style="top:355.25px;font-size:10px;color:#000;line-height:14px;left:511.40px;width:300px;text-align:right;">9<i>/</i>1<i>/</i>2021 0:00</div>
<div class="t c" style="top:355.25px;font-size:10px;color:#000;line-height:14px;left:816.10px;letter-spacing:0.4px;">Not agree</div>
<div class="t c" style="top:355.25px;font-size:10px;color:#000;line-height:14px;left:892.60px;letter-spacing:0.4px;">Not agree</div>
<div class="t c" style="top:371.01px;font-size:10px;color:#000;line-height:14px;left:-192.90px;width:300px;text-align:right;">8<i>/</i>31<i>/</i>2021</div>
<div class="t c" style="top:371.01px;font-size:10px;color:#000;line-height:14px;left:111.70px;will-change:transform;transform:scaleX(0.9);transform-origin:0 50%;">FL</div>
<div class="t c" style="top:371.01px;font-size:10px;color:#000;line-height:14px;left:-111.70px;width:300px;text-align:right;">3,269,524</div>
<div class="t c" style="top:371.01px;font-size:10px;color:#000;line-height:14px;left:60.00px;width:300px;text-align:right;">19,183</div>
<div class="t c" style="top:371.01px;font-size:10px;color:#000;line-height:14px;left:119.80px;width:300px;text-align:right;">5,865</div>
<div class="t c" style="top:371.01px;font-size:10px;color:#000;line-height:14px;left:173.30px;width:300px;text-align:right;">47,838</div>
<div class="t c" style="top:371.01px;font-size:10px;color:#000;line-height:14px;left:357.10px;width:300px;text-align:right;">155</div>
<div class="t c" style="top:371.01px;font-size:10px;color:#000;line-height:14px;left:424.00px;width:300px;text-align:right;">12</div>
<div class="t c" style="top:371.01px;font-size:10px;color:#000;line-height:14px;left:511.40px;width:300px;text-align:right;">8<i>/</i>31<i>/</i>2021 0:00</div>
<div class="t c" style="top:371.01px;font-size:10px;color:#000;line-height:14px;left:816.10px;letter-spacing:0.4px;">Not agree</div>
<div class="t c" style="top:371.01px;font-size:10px;color:#000;line-height:14px;left:892.60px;letter-spacing:0.4px;">Not agree</div>
<div class="t c" style="top:386.78px;font-size:10px;color:#000;line-height:14px;left:-192.90px;width:300px;text-align:right;">8<i>/</i>30<i>/</i>2021</div>
<div class="t c" style="top:386.78px;font-size:10px;color:#000;line-height:14px;left:111.70px;will-change:transform;transform:scaleX(0.9);transform-origin:0 50%;">FL</div>
<div class="t c" style="top:386.78px;font-size:10px;color:#000;line-height:14px;left:-111.70px;width:300px;text-align:right;">3,250,341</div>
<div class="t c" style="top:386.78px;font-size:10px;color:#000;line-height:14px;left:60.00px;width:300px;text-align:right;">18,737</div>
<div class="t c" style="top:386.78px;font-size:10px;color:#000;line-height:14px;left:119.80px;width:300px;text-align:right;">5,460</div>
<div class="t c" style="top:386.78px;font-size:10px;color:#000;line-height:14px;left:173.30px;width:300px;text-align:right;">47,683</div>
<div class="t c" style="top:386.78px;font-size:10px;color:#000;line-height:14px;left:357.10px;width:300px;text-align:right;">184</div>
<div class="t c" style="top:386.78px;font-size:10px;color:#000;line-height:14px;left:424.00px;width:300px;text-align:right;">16</div>
<div class="t c" style="top:386.78px;font-size:10px;color:#000;line-height:14px;left:511.40px;width:300px;text-align:right;">8<i>/</i>30<i>/</i>2021 0:00</div>
<div class="t c" style="top:386.78px;font-size:10px;color:#000;line-height:14px;left:816.10px;letter-spacing:0.4px;">Not agree</div>
<div class="t c" style="top:386.78px;font-size:10px;color:#000;line-height:14px;left:892.60px;letter-spacing:0.4px;">Not agree</div>
<div class="t c" style="top:402.54px;font-size:10px;color:#000;line-height:14px;left:-192.90px;width:300px;text-align:right;">8<i>/</i>29<i>/</i>2021</div>
<div class="t c" style="top:402.54px;font-size:10px;color:#000;line-height:14px;left:111.70px;will-change:transform;transform:scaleX(0.9);transform-origin:0 50%;">FL</div>
<div class="t c" style="top:402.54px;font-size:10px;color:#000;line-height:14px;left:-111.70px;width:300px;text-align:right;">3,231,604</div>
<div class="t c" style="top:402.54px;font-size:10px;color:#000;line-height:14px;left:60.00px;width:300px;text-align:right;">13,087</div>
<div class="t c" style="top:402.54px;font-size:10px;color:#000;line-height:14px;left:119.80px;width:300px;text-align:right;">3,298</div>
<div class="t c" style="top:402.54px;font-size:10px;color:#000;line-height:14px;left:173.30px;width:300px;text-align:right;">47,499</div>
<div class="t c" style="top:402.54px;font-size:10px;color:#000;line-height:14px;left:357.10px;width:300px;text-align:right;">208</div>
<div class="t c" style="top:402.54px;font-size:10px;color:#000;line-height:14px;left:424.00px;width:300px;text-align:right;">21</div>
<div class="t c" style="top:402.54px;font-size:10px;color:#000;line-height:14px;left:511.40px;width:300px;text-align:right;">8<i>/</i>29<i>/</i>2021 0:00</div>
<div class="t c" style="top:402.54px;font-size:10px;color:#000;line-height:14px;left:816.10px;letter-spacing:0.4px;">Not agree</div>
<div class="t c" style="top:402.54px;font-size:10px;color:#000;line-height:14px;left:892.60px;letter-spacing:0.4px;">Not agree</div>
<div class="t c" style="top:418.31px;font-size:10px;color:#000;line-height:14px;left:-192.90px;width:300px;text-align:right;">8<i>/</i>28<i>/</i>2021</div>
<div class="t c" style="top:418.31px;font-size:10px;color:#000;line-height:14px;left:111.70px;will-change:transform;transform:scaleX(0.9);transform-origin:0 50%;">FL</div>
<div class="t c" style="top:418.31px;font-size:10px;color:#000;line-height:14px;left:-111.70px;width:300px;text-align:right;">3,218,517</div>
<div class="t c" style="top:418.31px;font-size:10px;color:#000;line-height:14px;left:60.00px;width:300px;text-align:right;">17,735</div>
<div class="t c" style="top:418.31px;font-size:10px;color:#000;line-height:14px;left:119.80px;width:300px;text-align:right;">4,022</div>
<div class="t c" style="top:418.31px;font-size:10px;color:#000;line-height:14px;left:173.30px;width:300px;text-align:right;">47,291</div>
<div class="t c" style="top:418.31px;font-size:10px;color:#000;line-height:14px;left:357.10px;width:300px;text-align:right;">202</div>
<div class="t c" style="top:418.31px;font-size:10px;color:#000;line-height:14px;left:424.00px;width:300px;text-align:right;">30</div>
<div class="t c" style="top:418.31px;font-size:10px;color:#000;line-height:14px;left:511.40px;width:300px;text-align:right;">8<i>/</i>28<i>/</i>2021 0:00</div>
<div class="t c" style="top:418.31px;font-size:10px;color:#000;line-height:14px;left:816.10px;letter-spacing:0.4px;">Not agree</div>
<div class="t c" style="top:418.31px;font-size:10px;color:#000;line-height:14px;left:892.60px;letter-spacing:0.4px;">Not agree</div>
<div class="t c" style="top:434.07px;font-size:10px;color:#000;line-height:14px;left:-192.90px;width:300px;text-align:right;">8<i>/</i>27<i>/</i>2021</div>
<div class="t c" style="top:434.07px;font-size:10px;color:#000;line-height:14px;left:111.70px;will-change:transform;transform:scaleX(0.9);transform-origin:0 50%;">FL</div>
<div class="t c" style="top:434.07px;font-size:10px;color:#000;line-height:14px;left:-111.70px;width:300px;text-align:right;">3,200,782</div>
<div class="t c" style="top:434.07px;font-size:10px;color:#000;line-height:14px;left:60.00px;width:300px;text-align:right;">21,387</div>
<div class="t c" style="top:434.07px;font-size:10px;color:#000;line-height:14px;left:119.80px;width:300px;text-align:right;">5,742</div>
<div class="t c" style="top:434.07px;font-size:10px;color:#000;line-height:14px;left:173.30px;width:300px;text-align:right;">47,089</div>
<div class="t c" style="top:434.07px;font-size:10px;color:#000;line-height:14px;left:357.10px;width:300px;text-align:right;">244</div>
<div class="t c" style="top:434.07px;font-size:10px;color:#000;line-height:14px;left:424.00px;width:300px;text-align:right;">19</div>
<div class="t c" style="top:434.07px;font-size:10px;color:#000;line-height:14px;left:511.40px;width:300px;text-align:right;">8<i>/</i>27<i>/</i>2021 0:00</div>
<div class="t c" style="top:434.07px;font-size:10px;color:#000;line-height:14px;left:816.10px;letter-spacing:0.4px;">Not agree</div>
<div class="t c" style="top:434.07px;font-size:10px;color:#000;line-height:14px;left:892.60px;letter-spacing:0.4px;">Not agree</div>
<div class="t c" style="top:449.84px;font-size:10px;color:#000;line-height:14px;left:-192.90px;width:300px;text-align:right;">8<i>/</i>26<i>/</i>2021</div>
<div class="t c" style="top:449.84px;font-size:10px;color:#000;line-height:14px;left:111.70px;will-change:transform;transform:scaleX(0.9);transform-origin:0 50%;">FL</div>
<div class="t c" style="top:449.84px;font-size:10px;color:#000;line-height:14px;left:-111.70px;width:300px;text-align:right;">3,179,395</div>
<div class="t c" style="top:449.84px;font-size:10px;color:#000;line-height:14px;left:60.00px;width:300px;text-align:right;">27,782</div>
<div class="t c" style="top:449.84px;font-size:10px;color:#000;line-height:14px;left:119.80px;width:300px;text-align:right;">7,291</div>
<div class="t c" style="top:449.84px;font-size:10px;color:#000;line-height:14px;left:173.30px;width:300px;text-align:right;">46,845</div>
<div class="t c" style="top:449.84px;font-size:10px;color:#000;line-height:14px;left:357.10px;width:300px;text-align:right;">289</div>
<div class="t c" style="top:449.84px;font-size:10px;color:#000;line-height:14px;left:424.00px;width:300px;text-align:right;">30</div>
<div class="t c" style="top:449.84px;font-size:10px;color:#000;line-height:14px;left:511.40px;width:300px;text-align:right;">8<i>/</i>26<i>/</i>2021 0:00</div>
<div class="t c" style="top:449.84px;font-size:10px;color:#000;line-height:14px;left:816.10px;letter-spacing:0.4px;">Not agree</div>
<div class="t c" style="top:449.84px;font-size:10px;color:#000;line-height:14px;left:892.60px;letter-spacing:0.4px;">Not agree</div>
<div class="t c" style="top:465.60px;font-size:10px;color:#000;line-height:14px;left:-192.90px;width:300px;text-align:right;">8<i>/</i>25<i>/</i>2021</div>
<div class="t c" style="top:465.60px;font-size:10px;color:#000;line-height:14px;left:111.70px;will-change:transform;transform:scaleX(0.9);transform-origin:0 50%;">FL</div>
<div class="t c" style="top:465.60px;font-size:10px;color:#000;line-height:14px;left:-111.70px;width:300px;text-align:right;">3,151,613</div>
<div class="t c" style="top:465.60px;font-size:10px;color:#000;line-height:14px;left:60.00px;width:300px;text-align:right;">21,421</div>
<div class="t c" style="top:465.60px;font-size:10px;color:#000;line-height:14px;left:119.80px;width:300px;text-align:right;">6,486</div>
<div class="t c" style="top:465.60px;font-size:10px;color:#000;line-height:14px;left:173.30px;width:300px;text-align:right;">46,556</div>
<div class="t c" style="top:465.60px;font-size:10px;color:#000;line-height:14px;left:357.10px;width:300px;text-align:right;">246</div>
<div class="t c" style="top:465.60px;font-size:10px;color:#000;line-height:14px;left:424.00px;width:300px;text-align:right;">23</div>
<div class="t c" style="top:465.60px;font-size:10px;color:#000;line-height:14px;left:511.40px;width:300px;text-align:right;">8<i>/</i>25<i>/</i>2021 0:00</div>
<div class="t c" style="top:465.60px;font-size:10px;color:#000;line-height:14px;left:816.10px;letter-spacing:0.4px;">Not agree</div>
<div class="t c" style="top:465.60px;font-size:10px;color:#000;line-height:14px;left:892.60px;letter-spacing:0.4px;">Not agree</div>
<div class="t c" style="top:481.37px;font-size:10px;color:#000;line-height:14px;left:-192.90px;width:300px;text-align:right;">8<i>/</i>24<i>/</i>2021</div>
<div class="t c" style="top:481.37px;font-size:10px;color:#000;line-height:14px;left:111.70px;will-change:transform;transform:scaleX(0.9);transform-origin:0 50%;">FL</div>
<div class="t c" style="top:481.37px;font-size:10px;color:#000;line-height:14px;left:-111.70px;width:300px;text-align:right;">3,130,192</div>
<div class="t c" style="top:481.37px;font-size:10px;color:#000;line-height:14px;left:60.00px;width:300px;text-align:right;">26,338</div>
<div class="t c" style="top:481.37px;font-size:10px;color:#000;line-height:14px;left:119.80px;width:300px;text-align:right;">8,357</div>
<div class="t c" style="top:481.37px;font-size:10px;color:#000;line-height:14px;left:173.30px;width:300px;text-align:right;">46,310</div>
<div class="t c" style="top:481.37px;font-size:10px;color:#000;line-height:14px;left:357.10px;width:300px;text-align:right;">284</div>
<div class="t c" style="top:481.37px;font-size:10px;color:#000;line-height:14px;left:424.00px;width:300px;text-align:right;">29</div>
<div class="t c" style="top:481.37px;font-size:10px;color:#000;line-height:14px;left:511.40px;width:300px;text-align:right;">8<i>/</i>24<i>/</i>2021 0:00</div>
<div class="t c" style="top:481.37px;font-size:10px;color:#000;line-height:14px;left:816.10px;letter-spacing:0.4px;">Not agree</div>
<div class="t c" style="top:481.37px;font-size:10px;color:#000;line-height:14px;left:892.60px;letter-spacing:0.4px;">Not agree</div>
<div class="t c" style="top:497.13px;font-size:10px;color:#000;line-height:14px;left:-192.90px;width:300px;text-align:right;">8<i>/</i>23<i>/</i>2021</div>
<div class="t c" style="top:497.13px;font-size:10px;color:#000;line-height:14px;left:111.70px;will-change:transform;transform:scaleX(0.9);transform-origin:0 50%;">FL</div>
<div class="t c" style="top:497.13px;font-size:10px;color:#000;line-height:14px;left:-111.70px;width:300px;text-align:right;">3,103,854</div>
<div class="t c" style="top:497.13px;font-size:10px;color:#000;line-height:14px;left:60.00px;width:300px;text-align:right;">21,322</div>
<div class="t c" style="top:497.13px;font-size:10px;color:#000;line-height:14px;left:119.80px;width:300px;text-align:right;">6,880</div>
<div class="t c" style="top:497.13px;font-size:10px;color:#000;line-height:14px;left:173.30px;width:300px;text-align:right;">46,026</div>
<div class="t c" style="top:497.13px;font-size:10px;color:#000;line-height:14px;left:357.10px;width:300px;text-align:right;">308</div>
<div class="t c" style="top:497.13px;font-size:10px;color:#000;line-height:14px;left:424.00px;width:300px;text-align:right;">31</div>
<div class="t c" style="top:497.13px;font-size:10px;color:#000;line-height:14px;left:511.40px;width:300px;text-align:right;">8<i>/</i>23<i>/</i>2021 0:00</div>
<div class="t c" style="top:497.13px;font-size:10px;color:#000;line-height:14px;left:816.10px;letter-spacing:0.4px;">Not agree</div>
<div class="t c" style="top:497.13px;font-size:10px;color:#000;line-height:14px;left:892.60px;letter-spacing:0.4px;">Not agree</div>
<div class="t c" style="top:512.90px;font-size:10px;color:#000;line-height:14px;left:-192.90px;width:300px;text-align:right;">8<i>/</i>22<i>/</i>2021</div>
<div class="t c" style="top:512.90px;font-size:10px;color:#000;line-height:14px;left:111.70px;will-change:transform;transform:scaleX(0.9);transform-origin:0 50%;">FL</div>
<div class="t c" style="top:512.90px;font-size:10px;color:#000;line-height:14px;left:-111.70px;width:300px;text-align:right;">3,082,532</div>
<div class="t c" style="top:512.90px;font-size:10px;color:#000;line-height:14px;left:60.00px;width:300px;text-align:right;">14,681</div>
<div class="t c" style="top:512.90px;font-size:10px;color:#000;line-height:14px;left:119.80px;width:300px;text-align:right;">3,605</div>
<div class="t c" style="top:512.90px;font-size:10px;color:#000;line-height:14px;left:173.30px;width:300px;text-align:right;">45,718</div>
<div class="t c" style="top:512.90px;font-size:10px;color:#000;line-height:14px;left:357.10px;width:300px;text-align:right;">274</div>
<div class="t c" style="top:512.90px;font-size:10px;color:#000;line-height:14px;left:424.00px;width:300px;text-align:right;">20</div>
<div class="t c" style="top:512.90px;font-size:10px;color:#000;line-height:14px;left:511.40px;width:300px;text-align:right;">8<i>/</i>22<i>/</i>2021 0:00</div>
<div class="t c" style="top:512.90px;font-size:10px;color:#000;line-height:14px;left:816.10px;letter-spacing:0.4px;">Not agree</div>
<div class="t c" style="top:512.90px;font-size:10px;color:#000;line-height:14px;left:892.60px;letter-spacing:0.4px;">Not agree</div>
<div class="t c" style="top:528.66px;font-size:10px;color:#000;line-height:14px;left:-192.90px;width:300px;text-align:right;">8<i>/</i>21<i>/</i>2021</div>
<div class="t c" style="top:528.66px;font-size:10px;color:#000;line-height:14px;left:111.70px;will-change:transform;transform:scaleX(0.9);transform-origin:0 50%;">FL</div>
<div class="t c" style="top:528.66px;font-size:10px;color:#000;line-height:14px;left:-111.70px;width:300px;text-align:right;">3,067,851</div>
<div class="t c" style="top:528.66px;font-size:10px;color:#000;line-height:14px;left:60.00px;width:300px;text-align:right;">18,052</div>
<div class="t c" style="top:528.66px;font-size:10px;color:#000;line-height:14px;left:119.80px;width:300px;text-align:right;">3,410</div>
<div class="t c" style="top:528.66px;font-size:10px;color:#000;line-height:14px;left:173.30px;width:300px;text-align:right;">45,444</div>
<div class="t c" style="top:528.66px;font-size:10px;color:#000;line-height:14px;left:357.10px;width:300px;text-align:right;">295</div>
<div class="t c" style="top:528.66px;font-size:10px;color:#000;line-height:14px;left:424.00px;width:300px;text-align:right;">22</div>
<div class="t c" style="top:528.66px;font-size:10px;color:#000;line-height:14px;left:511.40px;width:300px;text-align:right;">8<i>/</i>21<i>/</i>2021 0:00</div>
<div class="t c" style="top:528.66px;font-size:10px;color:#000;line-height:14px;left:816.10px;letter-spacing:0.4px;">Not agree</div>
<div class="t c" style="top:528.66px;font-size:10px;color:#000;line-height:14px;left:892.60px;letter-spacing:0.4px;">Not agree</div>
<div class="t c" style="top:544.43px;font-size:10px;color:#000;line-height:14px;left:-192.90px;width:300px;text-align:right;">8<i>/</i>20<i>/</i>2021</div>
<div class="t c" style="top:544.43px;font-size:10px;color:#000;line-height:14px;left:111.70px;will-change:transform;transform:scaleX(0.9);transform-origin:0 50%;">FL</div>
<div class="t c" style="top:544.43px;font-size:10px;color:#000;line-height:14px;left:-111.70px;width:300px;text-align:right;">3,049,799</div>
<div class="t c" style="top:544.43px;font-size:10px;color:#000;line-height:14px;left:60.00px;width:300px;text-align:right;">22,260</div>
<div class="t c" style="top:544.43px;font-size:10px;color:#000;line-height:14px;left:119.80px;width:300px;text-align:right;">5,088</div>
<div class="t c" style="top:544.43px;font-size:10px;color:#000;line-height:14px;left:173.30px;width:300px;text-align:right;">45,149</div>
<div class="t c" style="top:544.43px;font-size:10px;color:#000;line-height:14px;left:357.10px;width:300px;text-align:right;">330</div>
<div class="t c" style="top:544.43px;font-size:10px;color:#000;line-height:14px;left:424.00px;width:300px;text-align:right;">29</div>
<div class="t c" style="top:544.43px;font-size:10px;color:#000;line-height:14px;left:511.40px;width:300px;text-align:right;">8<i>/</i>20<i>/</i>2021 0:00</div>
<div class="t c" style="top:544.43px;font-size:10px;color:#000;line-height:14px;left:816.10px;letter-spacing:0.4px;">Not agree</div>
<div class="t c" style="top:544.43px;font-size:10px;color:#000;line-height:14px;left:892.60px;letter-spacing:0.4px;">Not agree</div>
<div class="t c" style="top:560.20px;font-size:10px;color:#000;line-height:14px;left:-192.90px;width:300px;text-align:right;">8<i>/</i>19<i>/</i>2021</div>
<div class="t c" style="top:560.20px;font-size:10px;color:#000;line-height:14px;left:111.70px;will-change:transform;transform:scaleX(0.9);transform-origin:0 50%;">FL</div>
<div class="t c" style="top:560.20px;font-size:10px;color:#000;line-height:14px;left:-111.70px;width:300px;text-align:right;">3,027,539</div>
<div class="t c" style="top:560.20px;font-size:10px;color:#000;line-height:14px;left:60.00px;width:300px;text-align:right;">24,503</div>
<div class="t c" style="top:560.20px;font-size:10px;color:#000;line-height:14px;left:119.80px;width:300px;text-align:right;">6,072</div>
<div class="t c" style="top:560.20px;font-size:10px;color:#000;line-height:14px;left:173.30px;width:300px;text-align:right;">44,819</div>
<div class="t c" style="top:560.20px;font-size:10px;color:#000;line-height:14px;left:357.10px;width:300px;text-align:right;">324</div>
<div class="t c" style="top:560.20px;font-size:10px;color:#000;line-height:14px;left:424.00px;width:300px;text-align:right;">36</div>
<div class="t c" style="top:560.20px;font-size:10px;color:#000;line-height:14px;left:511.40px;width:300px;text-align:right;">8<i>/</i>19<i>/</i>2021 0:00</div>
<div class="t c" style="top:560.20px;font-size:10px;color:#000;line-height:14px;left:816.10px;letter-spacing:0.4px;">Not agree</div>
<div class="t c" style="top:560.20px;font-size:10px;color:#000;line-height:14px;left:892.60px;letter-spacing:0.4px;">Not agree</div>
<div class="t c" style="top:575.96px;font-size:10px;color:#000;line-height:14px;left:-192.90px;width:300px;text-align:right;">8<i>/</i>18<i>/</i>2021</div>
<div class="t c" style="top:575.96px;font-size:10px;color:#000;line-height:14px;left:111.70px;will-change:transform;transform:scaleX(0.9);transform-origin:0 50%;">FL</div>
<div class="t c" style="top:575.96px;font-size:10px;color:#000;line-height:14px;left:-111.70px;width:300px;text-align:right;">3,003,036</div>
<div class="t c" style="top:575.96px;font-size:10px;color:#000;line-height:14px;left:60.00px;width:300px;text-align:right;">24,503</div>
<div class="t c" style="top:575.96px;font-size:10px;color:#000;line-height:14px;left:119.80px;width:300px;text-align:right;">6,072</div>
<div class="t c" style="top:575.96px;font-size:10px;color:#000;line-height:14px;left:173.30px;width:300px;text-align:right;">44,495</div>
<div class="t c" style="top:575.96px;font-size:10px;color:#000;line-height:14px;left:357.10px;width:300px;text-align:right;">314</div>
<div class="t c" style="top:575.96px;font-size:10px;color:#000;line-height:14px;left:424.00px;width:300px;text-align:right;">25</div>
<div class="t c" style="top:575.96px;font-size:10px;color:#000;line-height:14px;left:511.40px;width:300px;text-align:right;">8<i>/</i>18<i>/</i>2021 0:00</div>
<div class="t c" style="top:575.96px;font-size:10px;color:#000;line-height:14px;left:816.10px;letter-spacing:0.4px;">Not agree</div>
<div class="t c" style="top:575.96px;font-size:10px;color:#000;line-height:14px;left:892.60px;letter-spacing:0.4px;">Not agree</div>
<div class="t c" style="top:591.73px;font-size:10px;color:#000;line-height:14px;left:-192.90px;width:300px;text-align:right;">8<i>/</i>17<i>/</i>2021</div>
<div class="t c" style="top:591.73px;font-size:10px;color:#000;line-height:14px;left:111.70px;will-change:transform;transform:scaleX(0.9);transform-origin:0 50%;">FL</div>
<div class="t c" style="top:591.73px;font-size:10px;color:#000;line-height:14px;left:-111.70px;width:300px;text-align:right;">2,978,533</div>
<div class="t c" style="top:591.73px;font-size:10px;color:#000;line-height:14px;left:60.00px;width:300px;text-align:right;">23,528</div>
<div class="t c" style="top:591.73px;font-size:10px;color:#000;line-height:14px;left:119.80px;width:300px;text-align:right;">7,107</div>
<div class="t c" style="top:591.73px;font-size:10px;color:#000;line-height:14px;left:173.30px;width:300px;text-align:right;">44,181</div>
<div class="t c" style="top:591.73px;font-size:10px;color:#000;line-height:14px;left:357.10px;width:300px;text-align:right;">303</div>
<div class="t c" style="top:591.73px;font-size:10px;color:#000;line-height:14px;left:424.00px;width:300px;text-align:right;">31</div>
<div class="t c" style="top:591.73px;font-size:10px;color:#000;line-height:14px;left:511.40px;width:300px;text-align:right;">8<i>/</i>17<i>/</i>2021 0:00</div>
<div class="t c" style="top:591.73px;font-size:10px;color:#000;line-height:14px;left:816.10px;letter-spacing:0.4px;">Not agree</div>
<div class="t c" style="top:591.73px;font-size:10px;color:#000;line-height:14px;left:892.60px;letter-spacing:0.4px;">Not agree</div>
<div class="t c" style="top:607.49px;font-size:10px;color:#000;line-height:14px;left:-192.90px;width:300px;text-align:right;">8<i>/</i>16<i>/</i>2021</div>
<div class="t c" style="top:607.49px;font-size:10px;color:#000;line-height:14px;left:111.70px;will-change:transform;transform:scaleX(0.9);transform-origin:0 50%;">FL</div>
<div class="t c" style="top:607.49px;font-size:10px;color:#000;line-height:14px;left:-111.70px;width:300px;text-align:right;">2,955,005</div>
<div class="t c" style="top:607.49px;font-size:10px;color:#000;line-height:14px;left:60.00px;width:300px;text-align:right;">21,743</div>
<div class="t c" style="top:607.49px;font-size:10px;color:#000;line-height:14px;left:119.80px;width:300px;text-align:right;">5,809</div>
<div class="t c" style="top:607.49px;font-size:10px;color:#000;line-height:14px;left:173.30px;width:300px;text-align:right;">43,878</div>
<div class="t c" style="top:607.49px;font-size:10px;color:#000;line-height:14px;left:357.10px;width:300px;text-align:right;">268</div>
<div class="t c" style="top:607.49px;font-size:10px;color:#000;line-height:14px;left:424.00px;width:300px;text-align:right;">22</div>
<div class="t c" style="top:607.49px;font-size:10px;color:#000;line-height:14px;left:511.40px;width:300px;text-align:right;">8<i>/</i>16<i>/</i>2021 0:00</div>
<div class="t c" style="top:607.49px;font-size:10px;color:#000;line-height:14px;left:816.10px;letter-spacing:0.4px;">Not agree</div>
<div class="t c" style="top:607.49px;font-size:10px;color:#000;line-height:14px;left:892.60px;letter-spacing:0.4px;">Not agree</div>
<div class="t c" style="top:623.25px;font-size:10px;color:#000;line-height:14px;left:-192.90px;width:300px;text-align:right;">8<i>/</i>15<i>/</i>2021</div>
<div class="t c" style="top:623.25px;font-size:10px;color:#000;line-height:14px;left:111.70px;will-change:transform;transform:scaleX(0.9);transform-origin:0 50%;">FL</div>
<div class="t c" style="top:623.25px;font-size:10px;color:#000;line-height:14px;left:-111.70px;width:300px;text-align:right;">2,933,262</div>
<div class="t c" style="top:623.25px;font-size:10px;color:#000;line-height:14px;left:60.00px;width:300px;text-align:right;">17,222</div>
<div class="t c" style="top:623.25px;font-size:10px;color:#000;line-height:14px;left:119.80px;width:300px;text-align:right;">3,600</div>
<div class="t c" style="top:623.25px;font-size:10px;color:#000;line-height:14px;left:173.30px;width:300px;text-align:right;">43,610</div>
<div class="t c" style="top:623.25px;font-size:10px;color:#000;line-height:14px;left:357.10px;width:300px;text-align:right;">275</div>
<div class="t c" style="top:623.25px;font-size:10px;color:#000;line-height:14px;left:424.00px;width:300px;text-align:right;">14</div>
<div class="t c" style="top:623.25px;font-size:10px;color:#000;line-height:14px;left:511.40px;width:300px;text-align:right;">8<i>/</i>15<i>/</i>2021 0:00</div>
<div class="t c" style="top:623.25px;font-size:10px;color:#000;line-height:14px;left:816.10px;letter-spacing:0.4px;">Not agree</div>
<div class="t c" style="top:623.25px;font-size:10px;color:#000;line-height:14px;left:892.60px;letter-spacing:0.4px;">Not agree</div>
<div class="t c" style="top:639.02px;font-size:10px;color:#000;line-height:14px;left:-192.90px;width:300px;text-align:right;">8<i>/</i>14<i>/</i>2021</div>
<div class="t c" style="top:639.02px;font-size:10px;color:#000;line-height:14px;left:111.70px;will-change:transform;transform:scaleX(0.9);transform-origin:0 50%;">FL</div>
<div class="t c" style="top:639.02px;font-size:10px;color:#000;line-height:14px;left:-111.70px;width:300px;text-align:right;">2,916,040</div>
<div class="t c" style="top:639.02px;font-size:10px;color:#000;line-height:14px;left:60.00px;width:300px;text-align:right;">16,433</div>
<div class="t c" style="top:639.02px;font-size:10px;color:#000;line-height:14px;left:119.80px;width:300px;text-align:right;">3,412</div>
<div class="t c" style="top:639.02px;font-size:10px;color:#000;line-height:14px;left:173.30px;width:300px;text-align:right;">43,335</div>
<div class="t c" style="top:639.02px;font-size:10px;color:#000;line-height:14px;left:357.10px;width:300px;text-align:right;">292</div>
<div class="t c" style="top:639.02px;font-size:10px;color:#000;line-height:14px;left:424.00px;width:300px;text-align:right;">20</div>
<div class="t c" style="top:639.02px;font-size:10px;color:#000;line-height:14px;left:511.40px;width:300px;text-align:right;">8<i>/</i>14<i>/</i>2021 0:00</div>
<div class="t c" style="top:639.02px;font-size:10px;color:#000;line-height:14px;left:816.10px;letter-spacing:0.4px;">Not agree</div>
<div class="t c" style="top:639.02px;font-size:10px;color:#000;line-height:14px;left:892.60px;letter-spacing:0.4px;">Not agree</div>
<div class="t c" style="top:654.78px;font-size:10px;color:#000;line-height:14px;left:-192.90px;width:300px;text-align:right;">8<i>/</i>13<i>/</i>2021</div>
<div class="t c" style="top:654.78px;font-size:10px;color:#000;line-height:14px;left:111.70px;will-change:transform;transform:scaleX(0.9);transform-origin:0 50%;">FL</div>
<div class="t c" style="top:654.78px;font-size:10px;color:#000;line-height:14px;left:-111.70px;width:300px;text-align:right;">2,899,607</div>
<div class="t c" style="top:654.78px;font-size:10px;color:#000;line-height:14px;left:60.00px;width:300px;text-align:right;">22,295</div>
<div class="t c" style="top:654.78px;font-size:10px;color:#000;line-height:14px;left:119.80px;width:300px;text-align:right;">6,240</div>
<div class="t c" style="top:654.78px;font-size:10px;color:#000;line-height:14px;left:173.30px;width:300px;text-align:right;">43,043</div>
<div class="t c" style="top:654.78px;font-size:10px;color:#000;line-height:14px;left:357.10px;width:300px;text-align:right;">243</div>
<div class="t c" style="top:654.78px;font-size:10px;color:#000;line-height:14px;left:424.00px;width:300px;text-align:right;">22</div>
<div class="t c" style="top:654.78px;font-size:10px;color:#000;line-height:14px;left:511.40px;width:300px;text-align:right;">8<i>/</i>13<i>/</i>2021 0:00</div>
<div class="t c" style="top:654.78px;font-size:10px;color:#000;line-height:14px;left:816.10px;letter-spacing:0.4px;">Not agree</div>
<div class="t c" style="top:654.78px;font-size:10px;color:#000;line-height:14px;left:892.60px;letter-spacing:0.4px;">Not agree</div>
<div class="t c" style="top:670.55px;font-size:10px;color:#000;line-height:14px;left:-192.90px;width:300px;text-align:right;">8<i>/</i>12<i>/</i>2021</div>
<div class="t c" style="top:670.55px;font-size:10px;color:#000;line-height:14px;left:111.70px;will-change:transform;transform:scaleX(0.9);transform-origin:0 50%;">FL</div>
<div class="t c" style="top:670.55px;font-size:10px;color:#000;line-height:14px;left:-111.70px;width:300px;text-align:right;">2,877,312</div>
<div class="t c" style="top:670.55px;font-size:10px;color:#000;line-height:14px;left:60.00px;width:300px;text-align:right;">25,951</div>
<div class="t c" style="top:670.55px;font-size:10px;color:#000;line-height:14px;left:119.80px;width:300px;text-align:right;">6,207</div>
<div class="t c" style="top:670.55px;font-size:10px;color:#000;line-height:14px;left:173.30px;width:300px;text-align:right;">42,800</div>
<div class="t c" style="top:670.55px;font-size:10px;color:#000;line-height:14px;left:357.10px;width:300px;text-align:right;">266</div>
<div class="t c" style="top:670.55px;font-size:10px;color:#000;line-height:14px;left:424.00px;width:300px;text-align:right;">20</div>
<div class="t c" style="top:670.55px;font-size:10px;color:#000;line-height:14px;left:511.40px;width:300px;text-align:right;">8<i>/</i>12<i>/</i>2021 0:00</div>
<div class="t c" style="top:670.55px;font-size:10px;color:#000;line-height:14px;left:816.10px;letter-spacing:0.4px;">Not agree</div>
<div class="t c" style="top:670.55px;font-size:10px;color:#000;line-height:14px;left:892.60px;letter-spacing:0.4px;">Not agree</div>
<div class="t c" style="top:686.31px;font-size:10px;color:#000;line-height:14px;left:-192.90px;width:300px;text-align:right;">8<i>/</i>11<i>/</i>2021</div>
<div class="t c" style="top:686.31px;font-size:10px;color:#000;line-height:14px;left:111.70px;will-change:transform;transform:scaleX(0.9);transform-origin:0 50%;">FL</div>
<div class="t c" style="top:686.31px;font-size:10px;color:#000;line-height:14px;left:-111.70px;width:300px;text-align:right;">2,851,361</div>
<div class="t c" style="top:686.31px;font-size:10px;color:#000;line-height:14px;left:60.00px;width:300px;text-align:right;">23,915</div>
<div class="t c" style="top:686.31px;font-size:10px;color:#000;line-height:14px;left:119.80px;width:300px;text-align:right;">5,815</div>
<div class="t c" style="top:686.31px;font-size:10px;color:#000;line-height:14px;left:173.30px;width:300px;text-align:right;">42,534</div>
<div class="t c" style="top:686.31px;font-size:10px;color:#000;line-height:14px;left:357.10px;width:300px;text-align:right;">266</div>
<div class="t c" style="top:686.31px;font-size:10px;color:#000;line-height:14px;left:424.00px;width:300px;text-align:right;">24</div>
<div class="t c" style="top:686.31px;font-size:10px;color:#000;line-height:14px;left:511.40px;width:300px;text-align:right;">8<i>/</i>11<i>/</i>2021 0:00</div>
<div class="t c" style="top:686.31px;font-size:10px;color:#000;line-height:14px;left:816.10px;letter-spacing:0.4px;">Not agree</div>
<div class="t c" style="top:686.31px;font-size:10px;color:#000;line-height:14px;left:892.60px;letter-spacing:0.4px;">Not agree</div>
<div class="t c" style="top:702.08px;font-size:10px;color:#000;line-height:14px;left:-192.90px;width:300px;text-align:right;">8<i>/</i>10<i>/</i>2021</div>
<div class="t c" style="top:702.08px;font-size:10px;color:#000;line-height:14px;left:111.70px;will-change:transform;transform:scaleX(0.9);transform-origin:0 50%;">FL</div>
<div class="t c" style="top:702.08px;font-size:10px;color:#000;line-height:14px;left:-111.70px;width:300px;text-align:right;">2,827,446</div>
<div class="t c" style="top:702.08px;font-size:10px;color:#000;line-height:14px;left:60.00px;width:300px;text-align:right;">24,746</div>
<div class="t c" style="top:702.08px;font-size:10px;color:#000;line-height:14px;left:119.80px;width:300px;text-align:right;">7,148</div>
<div class="t c" style="top:702.08px;font-size:10px;color:#000;line-height:14px;left:173.30px;width:300px;text-align:right;">42,268</div>
<div class="t c" style="top:702.08px;font-size:10px;color:#000;line-height:14px;left:357.10px;width:300px;text-align:right;">264</div>
<div class="t c" style="top:702.08px;font-size:10px;color:#000;line-height:14px;left:424.00px;width:300px;text-align:right;">19</div>
<div class="t c" style="top:702.08px;font-size:10px;color:#000;line-height:14px;left:511.40px;width:300px;text-align:right;">8<i>/</i>10<i>/</i>2021 0:00</div>
<div class="t c" style="top:702.08px;font-size:10px;color:#000;line-height:14px;left:816.10px;letter-spacing:0.4px;">Not agree</div>
<div class="t c" style="top:702.08px;font-size:10px;color:#000;line-height:14px;left:892.60px;letter-spacing:0.4px;">Not agree</div>
<div class="t c" style="top:717.84px;font-size:10px;color:#000;line-height:14px;left:-192.90px;width:300px;text-align:right;">8<i>/</i>9<i>/</i>2021</div>
<div class="t c" style="top:717.84px;font-size:10px;color:#000;line-height:14px;left:111.70px;will-change:transform;transform:scaleX(0.9);transform-origin:0 50%;">FL</div>
<div class="t c" style="top:717.84px;font-size:10px;color:#000;line-height:14px;left:-111.70px;width:300px;text-align:right;">2,802,700</div>
<div class="t c" style="top:717.84px;font-size:10px;color:#000;line-height:14px;left:60.00px;width:300px;text-align:right;">20,463</div>
<div class="t c" style="top:717.84px;font-size:10px;color:#000;line-height:14px;left:119.80px;width:300px;text-align:right;">5,317</div>
<div class="t c" style="top:717.84px;font-size:10px;color:#000;line-height:14px;left:173.30px;width:300px;text-align:right;">42,004</div>
<div class="t c" style="top:717.84px;font-size:10px;color:#000;line-height:14px;left:357.10px;width:300px;text-align:right;">253</div>
<div class="t c" style="top:717.84px;font-size:10px;color:#000;line-height:14px;left:424.00px;width:300px;text-align:right;">17</div>
<div class="t c" style="top:717.84px;font-size:10px;color:#000;line-height:14px;left:511.40px;width:300px;text-align:right;">8<i>/</i>9<i>/</i>2021 0:00</div>
<div class="t c" style="top:717.84px;font-size:10px;color:#000;line-height:14px;left:816.10px;letter-spacing:0.4px;">Not agree</div>
<div class="t c" style="top:717.84px;font-size:10px;color:#000;line-height:14px;left:892.60px;letter-spacing:0.4px;">Not agree</div>
<div class="t c" style="top:733.61px;font-size:10px;color:#000;line-height:14px;left:-192.90px;width:300px;text-align:right;">8<i>/</i>8<i>/</i>2021</div>
<div class="t c" style="top:733.61px;font-size:10px;color:#000;line-height:14px;left:111.70px;will-change:transform;transform:scaleX(0.9);transform-origin:0 50%;">FL</div>
<div class="t c" style="top:733.61px;font-size:10px;color:#000;line-height:14px;left:-111.70px;width:300px;text-align:right;">2,782,237</div>
<div class="t c" style="top:733.61px;font-size:10px;color:#000;line-height:14px;left:60.00px;width:300px;text-align:right;">15,304</div>
<div class="t c" style="top:733.61px;font-size:10px;color:#000;line-height:14px;left:119.80px;width:300px;text-align:right;">2,772</div>
<div class="t c" style="top:733.61px;font-size:10px;color:#000;line-height:14px;left:173.30px;width:300px;text-align:right;">41,751</div>
<div class="t c" style="top:733.61px;font-size:10px;color:#000;line-height:14px;left:357.10px;width:300px;text-align:right;">204</div>
<div class="t c" style="top:733.61px;font-size:10px;color:#000;line-height:14px;left:424.00px;width:300px;text-align:right;">13</div>
<div class="t c" style="top:733.61px;font-size:10px;color:#000;line-height:14px;left:511.40px;width:300px;text-align:right;">8<i>/</i>8<i>/</i>2021 0:00</div>
<div class="t c" style="top:733.61px;font-size:10px;color:#000;line-height:14px;left:816.10px;letter-spacing:0.4px;">Not agree</div>
<div class="t c" style="top:733.61px;font-size:10px;color:#000;line-height:14px;left:892.60px;letter-spacing:0.4px;">Not agree</div>
<div class="t c" style="top:749.37px;font-size:10px;color:#000;line-height:14px;left:-192.90px;width:300px;text-align:right;">8<i>/</i>7<i>/</i>2021</div>
<div class="t c" style="top:749.37px;font-size:10px;color:#000;line-height:14px;left:111.70px;will-change:transform;transform:scaleX(0.9);transform-origin:0 50%;">FL</div>
<div class="t c" style="top:749.37px;font-size:10px;color:#000;line-height:14px;left:-111.70px;width:300px;text-align:right;">2,766,933</div>
<div class="t c" style="top:749.37px;font-size:10px;color:#000;line-height:14px;left:60.00px;width:300px;text-align:right;">19,558</div>
<div class="t c" style="top:749.37px;font-size:10px;color:#000;line-height:14px;left:119.80px;width:300px;text-align:right;">3,431</div>
<div class="t c" style="top:749.37px;font-size:10px;color:#000;line-height:14px;left:173.30px;width:300px;text-align:right;">41,547</div>
<div class="t c" style="top:749.37px;font-size:10px;color:#000;line-height:14px;left:357.10px;width:300px;text-align:right;">226</div>
<div class="t c" style="top:749.37px;font-size:10px;color:#000;line-height:14px;left:424.00px;width:300px;text-align:right;">18</div>
<div class="t c" style="top:749.37px;font-size:10px;color:#000;line-height:14px;left:511.40px;width:300px;text-align:right;">8<i>/</i>7<i>/</i>2021 0:00</div>
<div class="t c" style="top:749.37px;font-size:10px;color:#000;line-height:14px;left:816.10px;letter-spacing:0.4px;">Not agree</div>
<div class="t c" style="top:749.37px;font-size:10px;color:#000;line-height:14px;left:892.60px;letter-spacing:0.4px;">Not agree</div>
<div class="t c" style="top:765.14px;font-size:10px;color:#000;line-height:14px;left:-192.90px;width:300px;text-align:right;">8<i>/</i>6<i>/</i>2021</div>
<div class="t c" style="top:765.14px;font-size:10px;color:#000;line-height:14px;left:111.70px;will-change:transform;transform:scaleX(0.9);transform-origin:0 50%;">FL</div>
<div class="t c" style="top:765.14px;font-size:10px;color:#000;line-height:14px;left:-111.70px;width:300px;text-align:right;">2,747,375</div>
<div class="t c" style="top:765.14px;font-size:10px;color:#000;line-height:14px;left:60.00px;width:300px;text-align:right;">21,500</div>
<div class="t c" style="top:765.14px;font-size:10px;color:#000;line-height:14px;left:119.80px;width:300px;text-align:right;">4,941</div>
<div class="t c" style="top:765.14px;font-size:10px;color:#000;line-height:14px;left:173.30px;width:300px;text-align:right;">41,321</div>
<div class="t c" style="top:765.14px;font-size:10px;color:#000;line-height:14px;left:357.10px;width:300px;text-align:right;">224</div>
<div class="t c" style="top:765.14px;font-size:10px;color:#000;line-height:14px;left:424.00px;width:300px;text-align:right;">15</div>
<div class="t c" style="top:765.14px;font-size:10px;color:#000;line-height:14px;left:511.40px;width:300px;text-align:right;">8<i>/</i>6<i>/</i>2021 0:00</div>
<div class="t c" style="top:765.14px;font-size:10px;color:#000;line-height:14px;left:816.10px;letter-spacing:0.4px;">Not agree</div>
<div class="t c" style="top:765.14px;font-size:10px;color:#000;line-height:14px;left:892.60px;letter-spacing:0.4px;">Not agree</div>
<div class="t c" style="top:780.91px;font-size:10px;color:#000;line-height:14px;left:-192.90px;width:300px;text-align:right;">8<i>/</i>5<i>/</i>2021</div>
<div class="t c" style="top:780.91px;font-size:10px;color:#000;line-height:14px;left:111.70px;will-change:transform;transform:scaleX(0.9);transform-origin:0 50%;">FL</div>
<div class="t c" style="top:780.91px;font-size:10px;color:#000;line-height:14px;left:-111.70px;width:300px;text-align:right;">2,725,875</div>
<div class="t c" style="top:780.91px;font-size:10px;color:#000;line-height:14px;left:60.00px;width:300px;text-align:right;">24,167</div>
<div class="t c" style="top:780.91px;font-size:10px;color:#000;line-height:14px;left:119.80px;width:300px;text-align:right;">5,441</div>
<div class="t c" style="top:780.91px;font-size:10px;color:#000;line-height:14px;left:173.30px;width:300px;text-align:right;">41,097</div>
<div class="t c" style="top:780.91px;font-size:10px;color:#000;line-height:14px;left:357.10px;width:300px;text-align:right;">207</div>
<div class="t c" style="top:780.91px;font-size:10px;color:#000;line-height:14px;left:424.00px;width:300px;text-align:right;">20</div>
<div class="t c" style="top:780.91px;font-size:10px;color:#000;line-height:14px;left:511.40px;width:300px;text-align:right;">8<i>/</i>5<i>/</i>2021 0:00</div>
<div class="t c" style="top:780.91px;font-size:10px;color:#000;line-height:14px;left:816.10px;letter-spacing:0.4px;">Not agree</div>
<div class="t c" style="top:780.91px;font-size:10px;color:#000;line-height:14px;left:892.60px;letter-spacing:0.4px;">Not agree</div>
<div class="t c" style="top:796.67px;font-size:10px;color:#000;line-height:14px;left:-192.90px;width:300px;text-align:right;">8<i>/</i>4<i>/</i>2021</div>
<div class="t c" style="top:796.67px;font-size:10px;color:#000;line-height:14px;left:111.70px;will-change:transform;transform:scaleX(0.9);transform-origin:0 50%;">FL</div>
<div class="t c" style="top:796.67px;font-size:10px;color:#000;line-height:14px;left:-111.70px;width:300px;text-align:right;">2,701,708</div>
<div class="t c" style="top:796.67px;font-size:10px;color:#000;line-height:14px;left:60.00px;width:300px;text-align:right;">22,774</div>
<div class="t c" style="top:796.67px;font-size:10px;color:#000;line-height:14px;left:119.80px;width:300px;text-align:right;">5,256</div>
<div class="t c" style="top:796.67px;font-size:10px;color:#000;line-height:14px;left:173.30px;width:300px;text-align:right;">40,890</div>
<div class="t c" style="top:796.67px;font-size:10px;color:#000;line-height:14px;left:357.10px;width:300px;text-align:right;">196</div>
<div class="t c" style="top:796.67px;font-size:10px;color:#000;line-height:14px;left:424.00px;width:300px;text-align:right;">20</div>
<div class="t c" style="top:796.67px;font-size:10px;color:#000;line-height:14px;left:511.40px;width:300px;text-align:right;">8<i>/</i>4<i>/</i>2021 0:00</div>
<div class="t c" style="top:796.67px;font-size:10px;color:#000;line-height:14px;left:816.10px;letter-spacing:0.4px;">Not agree</div>
<div class="t c" style="top:796.67px;font-size:10px;color:#000;line-height:14px;left:892.60px;letter-spacing:0.4px;">Not agree</div>
<div class="t c" style="top:812.44px;font-size:10px;color:#000;line-height:14px;left:-192.90px;width:300px;text-align:right;">8<i>/</i>3<i>/</i>2021</div>
<div class="t c" style="top:812.44px;font-size:10px;color:#000;line-height:14px;left:111.70px;will-change:transform;transform:scaleX(0.9);transform-origin:0 50%;">FL</div>
<div class="t c" style="top:812.44px;font-size:10px;color:#000;line-height:14px;left:-111.70px;width:300px;text-align:right;">2,678,934</div>
<div class="t c" style="top:812.44px;font-size:10px;color:#000;line-height:14px;left:60.00px;width:300px;text-align:right;">20,216</div>
<div class="t c" style="top:812.44px;font-size:10px;color:#000;line-height:14px;left:119.80px;width:300px;text-align:right;">5,148</div>
<div class="t c" style="top:812.44px;font-size:10px;color:#000;line-height:14px;left:173.30px;width:300px;text-align:right;">40,694</div>
<div class="t c" style="top:812.44px;font-size:10px;color:#000;line-height:14px;left:357.10px;width:300px;text-align:right;">177</div>
<div class="t c" style="top:812.44px;font-size:10px;color:#000;line-height:14px;left:424.00px;width:300px;text-align:right;">18</div>
<div class="t c" style="top:812.44px;font-size:10px;color:#000;line-height:14px;left:511.40px;width:300px;text-align:right;">8<i>/</i>3<i>/</i>2021 0:00</div>
<div class="t c" style="top:812.44px;font-size:10px;color:#000;line-height:14px;left:816.10px;letter-spacing:0.4px;">Not agree</div>
<div class="t c" style="top:812.44px;font-size:10px;color:#000;line-height:14px;left:892.60px;letter-spacing:0.4px;">Not agree</div>
<div class="t c" style="top:828.20px;font-size:10px;color:#000;line-height:14px;left:-192.90px;width:300px;text-align:right;">8<i>/</i>2<i>/</i>2021</div>
<div class="t c" style="top:828.20px;font-size:10px;color:#000;line-height:14px;left:111.70px;will-change:transform;transform:scaleX(0.9);transform-origin:0 50%;">FL</div>
<div class="t c" style="top:828.20px;font-size:10px;color:#000;line-height:14px;left:-111.70px;width:300px;text-align:right;">2,658,718</div>
<div class="t c" style="top:828.20px;font-size:10px;color:#000;line-height:14px;left:60.00px;width:300px;text-align:right;">17,072</div>
<div class="t c" style="top:828.20px;font-size:10px;color:#000;line-height:14px;left:119.80px;width:300px;text-align:right;">4,188</div>
<div class="t c" style="top:828.20px;font-size:10px;color:#000;line-height:14px;left:173.30px;width:300px;text-align:right;">40,517</div>
<div class="t c" style="top:828.20px;font-size:10px;color:#000;line-height:14px;left:357.10px;width:300px;text-align:right;">166</div>
<div class="t c" style="top:828.20px;font-size:10px;color:#000;line-height:14px;left:424.00px;width:300px;text-align:right;">15</div>
<div class="t c" style="top:828.20px;font-size:10px;color:#000;line-height:14px;left:511.40px;width:300px;text-align:right;">8<i>/</i>2<i>/</i>2021 0:00</div>
<div class="t c" style="top:828.20px;font-size:10px;color:#000;line-height:14px;left:816.10px;letter-spacing:0.4px;">Not agree</div>
<div class="t c" style="top:828.20px;font-size:10px;color:#000;line-height:14px;left:892.60px;letter-spacing:0.4px;">Not agree</div>
<div class="t c" style="top:843.97px;font-size:10px;color:#000;line-height:14px;left:-192.90px;width:300px;text-align:right;">8<i>/</i>1<i>/</i>2021</div>
<div class="t c" style="top:843.97px;font-size:10px;color:#000;line-height:14px;left:111.70px;will-change:transform;transform:scaleX(0.9);transform-origin:0 50%;">FL</div>
<div class="t c" style="top:843.97px;font-size:10px;color:#000;line-height:14px;left:-111.70px;width:300px;text-align:right;">2,641,646</div>
<div class="t c" style="top:843.97px;font-size:10px;color:#000;line-height:14px;left:60.00px;width:300px;text-align:right;">13,152</div>
<div class="t c" style="top:843.97px;font-size:10px;color:#000;line-height:14px;left:119.80px;width:300px;text-align:right;">2,451</div>
<div class="t c" style="top:843.97px;font-size:10px;color:#000;line-height:14px;left:173.30px;width:300px;text-align:right;">40,351</div>
<div class="t c" style="top:843.97px;font-size:10px;color:#000;line-height:14px;left:357.10px;width:300px;text-align:right;">135</div>
<div class="t c" style="top:843.97px;font-size:10px;color:#000;line-height:14px;left:424.00px;width:300px;text-align:right;">8</div>
<div class="t c" style="top:843.97px;font-size:10px;color:#000;line-height:14px;left:511.40px;width:300px;text-align:right;">8<i>/</i>1<i>/</i>2021 0:00</div>
<div class="t c" style="top:843.97px;font-size:10px;color:#000;line-height:14px;left:816.10px;letter-spacing:0.4px;">Not agree</div>
<div class="t c" style="top:843.97px;font-size:10px;color:#000;line-height:14px;left:892.60px;letter-spacing:0.4px;">Not agree</div>
<div class="t c" style="top:859.73px;font-size:10px;color:#000;line-height:14px;left:-192.90px;width:300px;text-align:right;">7<i>/</i>31<i>/</i>2021</div>
<div class="t c" style="top:859.73px;font-size:10px;color:#000;line-height:14px;left:111.70px;will-change:transform;transform:scaleX(0.9);transform-origin:0 50%;">FL</div>
<div class="t c" style="top:859.73px;font-size:10px;color:#000;line-height:14px;left:-111.70px;width:300px;text-align:right;">2,628,494</div>
<div class="t c" style="top:859.73px;font-size:10px;color:#000;line-height:14px;left:60.00px;width:300px;text-align:right;">17,759</div>
<div class="t c" style="top:859.73px;font-size:10px;color:#000;line-height:14px;left:119.80px;width:300px;text-align:right;">2,924</div>
<div class="t c" style="top:859.73px;font-size:10px;color:#000;line-height:14px;left:173.30px;width:300px;text-align:right;">40,216</div>
<div class="t c" style="top:859.73px;font-size:10px;color:#000;line-height:14px;left:357.10px;width:300px;text-align:right;">139</div>
<div class="t c" style="top:859.73px;font-size:10px;color:#000;line-height:14px;left:424.00px;width:300px;text-align:right;">12</div>
<div class="t c" style="top:859.73px;font-size:10px;color:#000;line-height:14px;left:511.40px;width:300px;text-align:right;">7<i>/</i>31<i>/</i>2021 0:00</div>
<div class="t c" style="top:859.73px;font-size:10px;color:#000;line-height:14px;left:816.10px;letter-spacing:0.4px;">Not agree</div>
<div class="t c" style="top:859.73px;font-size:10px;color:#000;line-height:14px;left:892.60px;letter-spacing:0.4px;">Not agree</div>
<div class="t c" style="top:875.50px;font-size:10px;color:#000;line-height:14px;left:-192.90px;width:300px;text-align:right;">7<i>/</i>30<i>/</i>2021</div>
<div class="t c" style="top:875.50px;font-size:10px;color:#000;line-height:14px;left:111.70px;will-change:transform;transform:scaleX(0.9);transform-origin:0 50%;">FL</div>
<div class="t c" style="top:875.50px;font-size:10px;color:#000;line-height:14px;left:-111.70px;width:300px;text-align:right;">2,610,735</div>
<div class="t c" style="top:875.50px;font-size:10px;color:#000;line-height:14px;left:60.00px;width:300px;text-align:right;">19,778</div>
<div class="t c" style="top:875.50px;font-size:10px;color:#000;line-height:14px;left:119.80px;width:300px;text-align:right;">4,677</div>
<div class="t c" style="top:875.50px;font-size:10px;color:#000;line-height:14px;left:173.30px;width:300px;text-align:right;">40,077</div>
<div class="t c" style="top:875.50px;font-size:10px;color:#000;line-height:14px;left:357.10px;width:300px;text-align:right;">131</div>
<div class="t c" style="top:875.50px;font-size:10px;color:#000;line-height:14px;left:424.00px;width:300px;text-align:right;">16</div>
<div class="t c" style="top:875.50px;font-size:10px;color:#000;line-height:14px;left:511.40px;width:300px;text-align:right;">7<i>/</i>30<i>/</i>2021 0:00</div>
<div class="t c" style="top:875.50px;font-size:10px;color:#000;line-height:14px;left:816.10px;letter-spacing:0.4px;">Not agree</div>
<div class="t c" style="top:875.50px;font-size:10px;color:#000;line-height:14px;left:892.60px;letter-spacing:0.4px;">Not agree</div>
<div class="t c" style="top:891.26px;font-size:10px;color:#000;line-height:14px;left:-192.90px;width:300px;text-align:right;">7<i>/</i>29<i>/</i>2021</div>
<div class="t c" style="top:891.26px;font-size:10px;color:#000;line-height:14px;left:111.70px;will-change:transform;transform:scaleX(0.9);transform-origin:0 50%;">FL</div>
<div class="t c" style="top:891.26px;font-size:10px;color:#000;line-height:14px;left:-111.70px;width:300px;text-align:right;">2,590,957</div>
<div class="t c" style="top:891.26px;font-size:10px;color:#000;line-height:14px;left:60.00px;width:300px;text-align:right;">21,712</div>
<div class="t c" style="top:891.26px;font-size:10px;color:#000;line-height:14px;left:119.80px;width:300px;text-align:right;">4,290</div>
<div class="t c" style="top:891.26px;font-size:10px;color:#000;line-height:14px;left:173.30px;width:300px;text-align:right;">39,946</div>
<div class="t c" style="top:891.26px;font-size:10px;color:#000;line-height:14px;left:357.10px;width:300px;text-align:right;">107</div>
<div class="t c" style="top:891.26px;font-size:10px;color:#000;line-height:14px;left:424.00px;width:300px;text-align:right;">10</div>
<div class="t c" style="top:891.26px;font-size:10px;color:#000;line-height:14px;left:511.40px;width:300px;text-align:right;">7<i>/</i>29<i>/</i>2021 0:00</div>
<div class="t c" style="top:891.26px;font-size:10px;color:#000;line-height:14px;left:816.10px;letter-spacing:0.4px;">Not agree</div>
<div class="t c" style="top:891.26px;font-size:10px;color:#000;line-height:14px;left:892.60px;letter-spacing:0.4px;">Not agree</div>
<div class="t c" style="top:907.02px;font-size:10px;color:#000;line-height:14px;left:-192.90px;width:300px;text-align:right;">7<i>/</i>28<i>/</i>2021</div>
<div class="t c" style="top:907.02px;font-size:10px;color:#000;line-height:14px;left:111.70px;will-change:transform;transform:scaleX(0.9);transform-origin:0 50%;">FL</div>
<div class="t c" style="top:907.02px;font-size:10px;color:#000;line-height:14px;left:-111.70px;width:300px;text-align:right;">2,569,245</div>
<div class="t c" style="top:907.02px;font-size:10px;color:#000;line-height:14px;left:60.00px;width:300px;text-align:right;">16,983</div>
<div class="t c" style="top:907.02px;font-size:10px;color:#000;line-height:14px;left:119.80px;width:300px;text-align:right;">3,907</div>
<div class="t c" style="top:907.02px;font-size:10px;color:#000;line-height:14px;left:173.30px;width:300px;text-align:right;">39,839</div>
<div class="t c" style="top:907.02px;font-size:10px;color:#000;line-height:14px;left:357.10px;width:300px;text-align:right;">110</div>
<div class="t c" style="top:907.02px;font-size:10px;color:#000;line-height:14px;left:424.00px;width:300px;text-align:right;">11</div>
<div class="t c" style="top:907.02px;font-size:10px;color:#000;line-height:14px;left:511.40px;width:300px;text-align:right;">7<i>/</i>28<i>/</i>2021 0:00</div>
<div class="t c" style="top:907.02px;font-size:10px;color:#000;line-height:14px;left:816.10px;letter-spacing:0.4px;">Not agree</div>
<div class="t c" style="top:907.02px;font-size:10px;color:#000;line-height:14px;left:892.60px;letter-spacing:0.4px;">Not agree</div>
<div class="t c" style="top:922.79px;font-size:10px;color:#000;line-height:14px;left:-192.90px;width:300px;text-align:right;">7<i>/</i>27<i>/</i>2021</div>
<div class="t c" style="top:922.79px;font-size:10px;color:#000;line-height:14px;left:111.70px;will-change:transform;transform:scaleX(0.9);transform-origin:0 50%;">FL</div>
<div class="t c" style="top:922.79px;font-size:10px;color:#000;line-height:14px;left:-111.70px;width:300px;text-align:right;">2,552,262</div>
<div class="t c" style="top:922.79px;font-size:10px;color:#000;line-height:14px;left:60.00px;width:300px;text-align:right;">17,496</div>
<div class="t c" style="top:922.79px;font-size:10px;color:#000;line-height:14px;left:119.80px;width:300px;text-align:right;">4,712</div>
<div class="t c" style="top:922.79px;font-size:10px;color:#000;line-height:14px;left:173.30px;width:300px;text-align:right;">39,729</div>
<div class="t c" style="top:922.79px;font-size:10px;color:#000;line-height:14px;left:357.10px;width:300px;text-align:right;">122</div>
<div class="t c" style="top:922.79px;font-size:10px;color:#000;line-height:14px;left:424.00px;width:300px;text-align:right;">10</div>
<div class="t c" style="top:922.79px;font-size:10px;color:#000;line-height:14px;left:511.40px;width:300px;text-align:right;">7<i>/</i>27<i>/</i>2021 0:00</div>
<div class="t c" style="top:922.79px;font-size:10px;color:#000;line-height:14px;left:816.10px;letter-spacing:0.4px;">Not agree</div>
<div class="t c" style="top:922.79px;font-size:10px;color:#000;line-height:14px;left:892.60px;letter-spacing:0.4px;">Not agree</div>
<div class="t c" style="top:938.55px;font-size:10px;color:#000;line-height:14px;left:-192.90px;width:300px;text-align:right;">7<i>/</i>26<i>/</i>2021</div>
<div class="t c" style="top:938.55px;font-size:10px;color:#000;line-height:14px;left:111.70px;will-change:transform;transform:scaleX(0.9);transform-origin:0 50%;">FL</div>
<div class="t c" style="top:938.55px;font-size:10px;color:#000;line-height:14px;left:-111.70px;width:300px;text-align:right;">2,534,766</div>
<div class="t c" style="top:938.55px;font-size:10px;color:#000;line-height:14px;left:60.00px;width:300px;text-align:right;">16,056</div>
<div class="t c" style="top:938.55px;font-size:10px;color:#000;line-height:14px;left:119.80px;width:300px;text-align:right;">3,835</div>
<div class="t c" style="top:938.55px;font-size:10px;color:#000;line-height:14px;left:173.30px;width:300px;text-align:right;">39,607</div>
<div class="t c" style="top:938.55px;font-size:10px;color:#000;line-height:14px;left:357.10px;width:300px;text-align:right;">97</div>
<div class="t c" style="top:938.55px;font-size:10px;color:#000;line-height:14px;left:424.00px;width:300px;text-align:right;">5</div>
<div class="t c" style="top:938.55px;font-size:10px;color:#000;line-height:14px;left:511.40px;width:300px;text-align:right;">7<i>/</i>26<i>/</i>2021 0:00</div>
<div class="t c" style="top:938.55px;font-size:10px;color:#000;line-height:14px;left:816.10px;letter-spacing:0.4px;">Not agree</div>
<div class="t c" style="top:938.55px;font-size:10px;color:#000;line-height:14px;left:892.60px;letter-spacing:0.4px;">Not agree</div>
<div class="t c" style="top:954.32px;font-size:10px;color:#000;line-height:14px;left:-192.90px;width:300px;text-align:right;">7<i>/</i>25<i>/</i>2021</div>
<div class="t c" style="top:954.32px;font-size:10px;color:#000;line-height:14px;left:111.70px;will-change:transform;transform:scaleX(0.9);transform-origin:0 50%;">FL</div>
<div class="t c" style="top:954.32px;font-size:10px;color:#000;line-height:14px;left:-111.70px;width:300px;text-align:right;">2,518,710</div>
<div class="t c" style="top:954.32px;font-size:10px;color:#000;line-height:14px;left:60.00px;width:300px;text-align:right;">10,285</div>
<div class="t c" style="top:954.32px;font-size:10px;color:#000;line-height:14px;left:119.80px;width:300px;text-align:right;">1,638</div>
<div class="t c" style="top:954.32px;font-size:10px;color:#000;line-height:14px;left:173.30px;width:300px;text-align:right;">39,510</div>
<div class="t c" style="top:954.32px;font-size:10px;color:#000;line-height:14px;left:357.10px;width:300px;text-align:right;">92</div>
<div class="t c" style="top:954.32px;font-size:10px;color:#000;line-height:14px;left:424.00px;width:300px;text-align:right;">7</div>
<div class="t c" style="top:954.32px;font-size:10px;color:#000;line-height:14px;left:511.40px;width:300px;text-align:right;">7<i>/</i>25<i>/</i>2021 0:00</div>
<div class="t c" style="top:954.32px;font-size:10px;color:#000;line-height:14px;left:816.10px;letter-spacing:0.4px;">Not agree</div>
<div class="t c" style="top:954.32px;font-size:10px;color:#000;line-height:14px;left:892.60px;letter-spacing:0.4px;">Not agree</div>
<div class="t c" style="top:970.08px;font-size:10px;color:#000;line-height:14px;left:-192.90px;width:300px;text-align:right;">7<i>/</i>24<i>/</i>2021</div>
<div class="t c" style="top:970.08px;font-size:10px;color:#000;line-height:14px;left:111.70px;will-change:transform;transform:scaleX(0.9);transform-origin:0 50%;">FL</div>
<div class="t c" style="top:970.08px;font-size:10px;color:#000;line-height:14px;left:-111.70px;width:300px;text-align:right;">2,508,425</div>
<div class="t c" style="top:970.08px;font-size:10px;color:#000;line-height:14px;left:60.00px;width:300px;text-align:right;">13,055</div>
<div class="t c" style="top:970.08px;font-size:10px;color:#000;line-height:14px;left:119.80px;width:300px;text-align:right;">2,410</div>
<div class="t c" style="top:970.08px;font-size:10px;color:#000;line-height:14px;left:173.30px;width:300px;text-align:right;">39,418</div>
<div class="t c" style="top:970.08px;font-size:10px;color:#000;line-height:14px;left:357.10px;width:300px;text-align:right;">77</div>
<div class="t c" style="top:970.08px;font-size:10px;color:#000;line-height:14px;left:424.00px;width:300px;text-align:right;">5</div>
<div class="t c" style="top:970.08px;font-size:10px;color:#000;line-height:14px;left:511.40px;width:300px;text-align:right;">7<i>/</i>24<i>/</i>2021 0:00</div>
<div class="t c" style="top:970.08px;font-size:10px;color:#000;line-height:14px;left:816.10px;letter-spacing:0.4px;">Not agree</div>
<div class="t c" style="top:970.08px;font-size:10px;color:#000;line-height:14px;left:892.60px;letter-spacing:0.4px;">Not agree</div>
<div class="t c" style="top:985.85px;font-size:10px;color:#000;line-height:14px;left:-192.90px;width:300px;text-align:right;">7<i>/</i>23<i>/</i>2021</div>
<div class="t c" style="top:985.85px;font-size:10px;color:#000;line-height:14px;left:111.70px;will-change:transform;transform:scaleX(0.9);transform-origin:0 50%;">FL</div>
<div class="t c" style="top:985.85px;font-size:10px;color:#000;line-height:14px;left:-111.70px;width:300px;text-align:right;">2,495,370</div>
<div class="t c" style="top:985.85px;font-size:10px;color:#000;line-height:14px;left:60.00px;width:300px;text-align:right;">14,833</div>
<div class="t c" style="top:985.85px;font-size:10px;color:#000;line-height:14px;left:119.80px;width:300px;text-align:right;">3,446</div>
<div class="t c" style="top:985.85px;font-size:10px;color:#000;line-height:14px;left:173.30px;width:300px;text-align:right;">39,341</div>
<div class="t c" style="top:985.85px;font-size:10px;color:#000;line-height:14px;left:357.10px;width:300px;text-align:right;">86</div>
<div class="t c" style="top:985.85px;font-size:10px;color:#000;line-height:14px;left:424.00px;width:300px;text-align:right;">11</div>
<div class="t c" style="top:985.85px;font-size:10px;color:#000;line-height:14px;left:511.40px;width:300px;text-align:right;">7<i>/</i>23<i>/</i>2021 0:00</div>
<div class="t c" style="top:985.85px;font-size:10px;color:#000;line-height:14px;left:816.10px;letter-spacing:0.4px;">Not agree</div>
<div class="t c" style="top:985.85px;font-size:10px;color:#000;line-height:14px;left:892.60px;letter-spacing:0.4px;">Not agree</div>
<div class="t c" style="top:1001.61px;font-size:10px;color:#000;line-height:14px;left:-192.90px;width:300px;text-align:right;">7<i>/</i>22<i>/</i>2021</div>
<div class="t c" style="top:1001.61px;font-size:10px;color:#000;line-height:14px;left:111.70px;will-change:transform;transform:scaleX(0.9);transform-origin:0 50%;">FL</div>
<div class="t c" style="top:1001.61px;font-size:10px;color:#000;line-height:14px;left:-111.70px;width:300px;text-align:right;">2,480,537</div>
<div class="t c" style="top:1001.61px;font-size:10px;color:#000;line-height:14px;left:60.00px;width:300px;text-align:right;">14,265</div>
<div class="t c" style="top:1001.61px;font-size:10px;color:#000;line-height:14px;left:119.80px;width:300px;text-align:right;">3,284</div>
<div class="t c" style="top:1001.61px;font-size:10px;color:#000;line-height:14px;left:173.30px;width:300px;text-align:right;">39,255</div>
<div class="t c" style="top:1001.61px;font-size:10px;color:#000;line-height:14px;left:357.10px;width:300px;text-align:right;">56</div>
<div class="t c" style="top:1001.61px;font-size:10px;color:#000;line-height:14px;left:424.00px;width:300px;text-align:right;">0</div>
<div class="t c" style="top:1001.61px;font-size:10px;color:#000;line-height:14px;left:511.40px;width:300px;text-align:right;">7<i>/</i>22<i>/</i>2021 0:00</div>
<div class="t c" style="top:1001.61px;font-size:10px;color:#000;line-height:14px;left:816.10px;letter-spacing:0.4px;">Not agree</div>
<div class="t c" style="top:1001.61px;font-size:10px;color:#000;line-height:14px;left:892.60px;letter-spacing:0.4px;">Not agree</div>
<div class="t c" style="top:1017.38px;font-size:10px;color:#000;line-height:14px;left:-192.90px;width:300px;text-align:right;">7<i>/</i>21<i>/</i>2021</div>
<div class="t c" style="top:1017.38px;font-size:10px;color:#000;line-height:14px;left:111.70px;will-change:transform;transform:scaleX(0.9);transform-origin:0 50%;">FL</div>
<div class="t c" style="top:1017.38px;font-size:10px;color:#000;line-height:14px;left:-111.70px;width:300px;text-align:right;">2,466,272</div>
<div class="t c" style="top:1017.38px;font-size:10px;color:#000;line-height:14px;left:60.00px;width:300px;text-align:right;">13,381</div>
<div class="t c" style="top:1017.38px;font-size:10px;color:#000;line-height:14px;left:119.80px;width:300px;text-align:right;">3,232</div>
<div class="t c" style="top:1017.38px;font-size:10px;color:#000;line-height:14px;left:173.30px;width:300px;text-align:right;">39,199</div>
<div class="t c" style="top:1017.38px;font-size:10px;color:#000;line-height:14px;left:357.10px;width:300px;text-align:right;">67</div>
<div class="t c" style="top:1017.38px;font-size:10px;color:#000;line-height:14px;left:424.00px;width:300px;text-align:right;">8</div>
<div class="t c" style="top:1017.38px;font-size:10px;color:#000;line-height:14px;left:511.40px;width:300px;text-align:right;">7<i>/</i>21<i>/</i>2021 0:00</div>
<div class="t c" style="top:1017.38px;font-size:10px;color:#000;line-height:14px;left:816.10px;letter-spacing:0.4px;">Not agree</div>
<div class="t c" style="top:1017.38px;font-size:10px;color:#000;line-height:14px;left:892.60px;letter-spacing:0.4px;">Not agree</div>
<div class="t c" style="top:1033.15px;font-size:10px;color:#000;line-height:14px;left:-192.90px;width:300px;text-align:right;">7<i>/</i>20<i>/</i>2021</div>
<div class="t c" style="top:1033.15px;font-size:10px;color:#000;line-height:14px;left:111.70px;will-change:transform;transform:scaleX(0.9);transform-origin:0 50%;">FL</div>
<div class="t c" style="top:1033.15px;font-size:10px;color:#000;line-height:14px;left:-111.70px;width:300px;text-align:right;">2,452,891</div>
<div class="t c" style="top:1033.15px;font-size:10px;color:#000;line-height:14px;left:60.00px;width:300px;text-align:right;">11,743</div>
<div class="t c" style="top:1033.15px;font-size:10px;color:#000;line-height:14px;left:119.80px;width:300px;text-align:right;">3,057</div>
<div class="t c" style="top:1033.15px;font-size:10px;color:#000;line-height:14px;left:173.30px;width:300px;text-align:right;">39,132</div>
<div class="t c" style="top:1033.15px;font-size:10px;color:#000;line-height:14px;left:357.10px;width:300px;text-align:right;">79</div>
<div class="t c" style="top:1033.15px;font-size:10px;color:#000;line-height:14px;left:424.00px;width:300px;text-align:right;">7</div>
<div class="t c" style="top:1033.15px;font-size:10px;color:#000;line-height:14px;left:511.40px;width:300px;text-align:right;">7<i>/</i>20<i>/</i>2021 0:00</div>
<div class="t c" style="top:1033.15px;font-size:10px;color:#000;line-height:14px;left:816.10px;letter-spacing:0.4px;">Not agree</div>
<div class="t c" style="top:1033.15px;font-size:10px;color:#000;line-height:14px;left:892.60px;letter-spacing:0.4px;">Not agree</div>
<div class="t c" style="top:1048.91px;font-size:10px;color:#000;line-height:14px;left:-192.90px;width:300px;text-align:right;">7<i>/</i>19<i>/</i>2021</div>
<div class="t c" style="top:1048.91px;font-size:10px;color:#000;line-height:14px;left:111.70px;will-change:transform;transform:scaleX(0.9);transform-origin:0 50%;">FL</div>
<div class="t c" style="top:1048.91px;font-size:10px;color:#000;line-height:14px;left:-111.70px;width:300px;text-align:right;">2,441,148</div>
<div class="t c" style="top:1048.91px;font-size:10px;color:#000;line-height:14px;left:60.00px;width:300px;text-align:right;">9,287</div>
<div class="t c" style="top:1048.91px;font-size:10px;color:#000;line-height:14px;left:119.80px;width:300px;text-align:right;">2,499</div>
<div class="t c" style="top:1048.91px;font-size:10px;color:#000;line-height:14px;left:173.30px;width:300px;text-align:right;">39,053</div>
<div class="t c" style="top:1048.91px;font-size:10px;color:#000;line-height:14px;left:357.10px;width:300px;text-align:right;">63</div>
<div class="t c" style="top:1048.91px;font-size:10px;color:#000;line-height:14px;left:424.00px;width:300px;text-align:right;">3</div>
<div class="t c" style="top:1048.91px;font-size:10px;color:#000;line-height:14px;left:511.40px;width:300px;text-align:right;">7<i>/</i>19<i>/</i>2021 0:00</div>
<div class="t c" style="top:1048.91px;font-size:10px;color:#000;line-height:14px;left:816.10px;letter-spacing:0.4px;">Not agree</div>
<div class="t c" style="top:1048.91px;font-size:10px;color:#000;line-height:14px;left:892.60px;letter-spacing:0.4px;">Not agree</div>
<div class="t g" style="top:203.20px;font-size:13.7px;color:#595959;line-height:18px;left:1178.50px;width:600px;text-align:center;">new_death</div>
<div class="t g" style="top:988.20px;font-size:9.4px;color:#595959;line-height:14px;left:704.40px;width:300px;text-align:right;will-change:transform;transform:scaleX(0.92);transform-origin:100% 50%;">0</div>
<div class="t g" style="top:879.27px;font-size:9.4px;color:#595959;line-height:14px;left:704.40px;width:300px;text-align:right;will-change:transform;transform:scaleX(0.92);transform-origin:100% 50%;">50</div>
<div class="t g" style="top:770.34px;font-size:9.4px;color:#595959;line-height:14px;left:704.40px;width:300px;text-align:right;will-change:transform;transform:scaleX(0.92);transform-origin:100% 50%;">100</div>
<div class="t g" style="top:661.41px;font-size:9.4px;color:#595959;line-height:14px;left:704.40px;width:300px;text-align:right;will-change:transform;transform:scaleX(0.92);transform-origin:100% 50%;">150</div>
<div class="t g" style="top:552.48px;font-size:9.4px;color:#595959;line-height:14px;left:704.40px;width:300px;text-align:right;will-change:transform;transform:scaleX(0.92);transform-origin:100% 50%;">200</div>
<div class="t g" style="top:443.55px;font-size:9.4px;color:#595959;line-height:14px;left:704.40px;width:300px;text-align:right;will-change:transform;transform:scaleX(0.92);transform-origin:100% 50%;">250</div>
<div class="t g" style="top:334.62px;font-size:9.4px;color:#595959;line-height:14px;left:704.40px;width:300px;text-align:right;will-change:transform;transform:scaleX(0.92);transform-origin:100% 50%;">300</div>
<div class="t g" style="top:225.69px;font-size:9.4px;color:#595959;line-height:14px;left:704.40px;width:300px;text-align:right;will-change:transform;transform:scaleX(0.92);transform-origin:100% 50%;">350</div>
<div class="t g x" style="left:934.20px;top:1000.00px;width:80px;text-align:right;font-size:9px;color:#595959;line-height:12px;transform-origin:100% 50%;transform:rotate(-45deg);">1<i>/</i>22<i>/</i>2020</div>
<div class="t g x" style="left:983.61px;top:1000.00px;width:80px;text-align:right;font-size:9px;color:#595959;line-height:12px;transform-origin:100% 50%;transform:rotate(-45deg);">2<i>/</i>22<i>/</i>2020</div>
<div class="t g x" style="left:1029.84px;top:1000.00px;width:80px;text-align:right;font-size:9px;color:#595959;line-height:12px;transform-origin:100% 50%;transform:rotate(-45deg);">3<i>/</i>22<i>/</i>2020</div>
<div class="t g x" style="left:1079.25px;top:1000.00px;width:80px;text-align:right;font-size:9px;color:#595959;line-height:12px;transform-origin:100% 50%;transform:rotate(-45deg);">4<i>/</i>22<i>/</i>2020</div>
<div class="t g x" style="left:1127.07px;top:1000.00px;width:80px;text-align:right;font-size:9px;color:#595959;line-height:12px;transform-origin:100% 50%;transform:rotate(-45deg);">5<i>/</i>22<i>/</i>2020</div>
<div class="t g x" style="left:1176.49px;top:1000.00px;width:80px;text-align:right;font-size:9px;color:#595959;line-height:12px;transform-origin:100% 50%;transform:rotate(-45deg);">6<i>/</i>22<i>/</i>2020</div>
<div class="t g x" style="left:1224.31px;top:1000.00px;width:80px;text-align:right;font-size:9px;color:#595959;line-height:12px;transform-origin:100% 50%;transform:rotate(-45deg);">7<i>/</i>22<i>/</i>2020</div>
<div class="t g x" style="left:1273.72px;top:1000.00px;width:80px;text-align:right;font-size:9px;color:#595959;line-height:12px;transform-origin:100% 50%;transform:rotate(-45deg);">8<i>/</i>22<i>/</i>2020</div>
<div class="t g x" style="left:1323.14px;top:1000.00px;width:80px;text-align:right;font-size:9px;color:#595959;line-height:12px;transform-origin:100% 50%;transform:rotate(-45deg);">9<i>/</i>22<i>/</i>2020</div>
<div class="t g x" style="left:1370.96px;top:1000.00px;width:80px;text-align:right;font-size:9px;color:#595959;line-height:12px;transform-origin:100% 50%;transform:rotate(-45deg);">10<i>/</i>22<i>/</i>2020</div>
<div class="t g x" style="left:1420.37px;top:1000.00px;width:80px;text-align:right;font-size:9px;color:#595959;line-height:12px;transform-origin:100% 50%;transform:rotate(-45deg);">11<i>/</i>22<i>/</i>2020</div>
<div class="t g x" style="left:1468.19px;top:1000.00px;width:80px;text-align:right;font-size:9px;color:#595959;line-height:12px;transform-origin:100% 50%;transform:rotate(-45deg);">12<i>/</i>22<i>/</i>2020</div>
<div class="t g x" style="left:1517.60px;top:1000.00px;width:80px;text-align:right;font-size:9px;color:#595959;line-height:12px;transform-origin:100% 50%;transform:rotate(-45deg);">1<i>/</i>22<i>/</i>2021</div>
<div class="t g x" style="left:1567.02px;top:1000.00px;width:80px;text-align:right;font-size:9px;color:#595959;line-height:12px;transform-origin:100% 50%;transform:rotate(-45deg);">2<i>/</i>22<i>/</i>2021</div>
<div class="t g x" style="left:1611.65px;top:1000.00px;width:80px;text-align:right;font-size:9px;color:#595959;line-height:12px;transform-origin:100% 50%;transform:rotate(-45deg);">3<i>/</i>22<i>/</i>2021</div>
<div class="t g x" style="left:1661.06px;top:1000.00px;width:80px;text-align:right;font-size:9px;color:#595959;line-height:12px;transform-origin:100% 50%;transform:rotate(-45deg);">4<i>/</i>22<i>/</i>2021</div>
<div class="t g x" style="left:1708.88px;top:1000.00px;width:80px;text-align:right;font-size:9px;color:#595959;line-height:12px;transform-origin:100% 50%;transform:rotate(-45deg);">5<i>/</i>22<i>/</i>2021</div>
<div class="t g x" style="left:1758.30px;top:1000.00px;width:80px;text-align:right;font-size:9px;color:#595959;line-height:12px;transform-origin:100% 50%;transform:rotate(-45deg);">6<i>/</i>22<i>/</i>2021</div>
<div class="t g x" style="left:1806.12px;top:1000.00px;width:80px;text-align:right;font-size:9px;color:#595959;line-height:12px;transform-origin:100% 50%;transform:rotate(-45deg);">7<i>/</i>22<i>/</i>2021</div>
<div class="t g x" style="left:1855.53px;top:1000.00px;width:80px;text-align:right;font-size:9px;color:#595959;line-height:12px;transform-origin:100% 50%;transform:rotate(-45deg);">8<i>/</i>22<i>/</i>2021</div>
<div class="t" style="top:1066.50px;font-size:10.8px;color:#217346;line-height:14px;left:-130.00px;width:600px;text-align:center;font-weight:bold;will-change:transform;transform:scaleX(0.88);transform-origin:50% 50%;">United_States_COVID-19_Cases_an</div>
<div class="t" style="top:1086.90px;font-size:8.9px;color:#fff;line-height:14px;left:5.60px;will-change:transform;transform:scaleX(0.88);transform-origin:0 50%;">READY</div>
<div class="t" style="top:1086.90px;font-size:9.4px;color:#fff;line-height:14px;left:1989.60px;will-change:transform;transform:scaleX(0.93);transform-origin:0 50%;">100%</div>
</body></html>
